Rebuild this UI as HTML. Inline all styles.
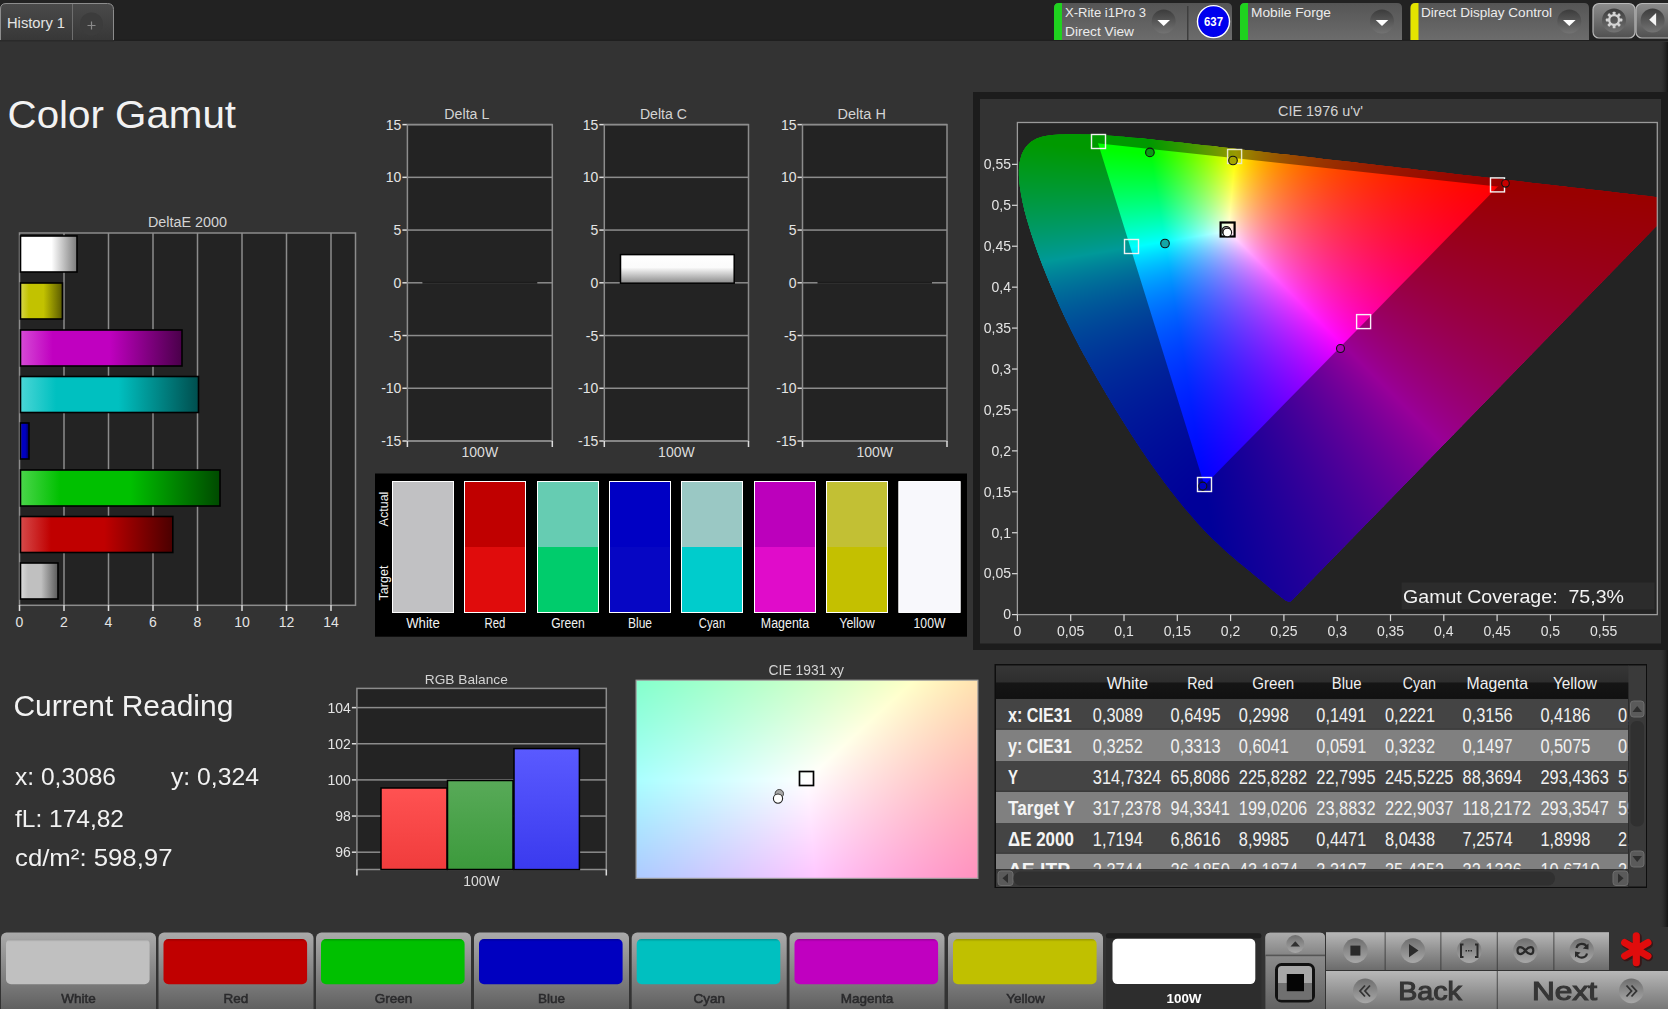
<!DOCTYPE html><html><head><meta charset="utf-8"><title>CalMAN Color Gamut</title><style>html,body{margin:0;padding:0;background:#333;overflow:hidden}svg{display:block;font-family:"Liberation Sans",sans-serif}#wrap{position:relative;width:1668px;height:1009px;overflow:hidden}canvas{position:absolute;left:0;top:0}</style></head><body><div id="wrap">
<svg width="1668" height="1009" viewBox="0 0 1668 1009">
<defs>
<linearGradient id="tabg" x1="0" y1="0" x2="0" y2="1"><stop offset="0" stop-color="#4a4a4a"/><stop offset="1" stop-color="#373737"/></linearGradient>
<linearGradient id="devg" x1="0" y1="0" x2="0" y2="1"><stop offset="0" stop-color="#555555"/><stop offset="1" stop-color="#6c6c6c"/></linearGradient>
<linearGradient id="ddl" x1="0" y1="0" x2="0" y2="1"><stop offset="0" stop-color="#3c3c3c"/><stop offset="1" stop-color="#737373"/></linearGradient>
<linearGradient id="gearb" x1="0" y1="0" x2="0" y2="1"><stop offset="0" stop-color="#8c8c8c"/><stop offset="1" stop-color="#505050"/></linearGradient>
<linearGradient id="btg" x1="0" y1="0" x2="0" y2="1"><stop offset="0" stop-color="#aaaaaa"/><stop offset="0.6" stop-color="#7c7c7c"/><stop offset="1" stop-color="#5a5a5a"/></linearGradient>
<linearGradient id="btd" x1="0" y1="0" x2="0" y2="1"><stop offset="0" stop-color="#1e1e1e"/><stop offset="1" stop-color="#262626"/></linearGradient>
<linearGradient id="ctl" x1="0" y1="0" x2="0" y2="1"><stop offset="0" stop-color="#b4b4b4"/><stop offset="1" stop-color="#6a6a6a"/></linearGradient>
<radialGradient id="ctlc" cx="0.5" cy="0.35" r="0.6"><stop offset="0" stop-color="#9a9a9a"/><stop offset="1" stop-color="#7a7a7a"/></radialGradient>
<linearGradient id="dcbar" x1="0" y1="0" x2="0" y2="1"><stop offset="0" stop-color="#ffffff"/><stop offset="0.45" stop-color="#fbfbfb"/><stop offset="1" stop-color="#8a8a8a"/></linearGradient>
<linearGradient id="hdr" x1="0" y1="0" x2="0" y2="1"><stop offset="0" stop-color="#363636"/><stop offset="0.5" stop-color="#2e2e2e"/><stop offset="0.52" stop-color="#151515"/><stop offset="1" stop-color="#111111"/></linearGradient>
<linearGradient id="shadowR" x1="0" y1="0" x2="1" y2="0"><stop offset="0" stop-color="#333" stop-opacity="0"/><stop offset="1" stop-color="#151515"/></linearGradient>
<linearGradient id="bw" x1="0" y1="0" x2="1" y2="0"><stop offset="0" stop-color="#ffffff"/><stop offset="0.2" stop-color="#ffffff"/><stop offset="0.55" stop-color="#ffffff"/><stop offset="1" stop-color="#7a7a7a"/></linearGradient>
<linearGradient id="by" x1="0" y1="0" x2="1" y2="0"><stop offset="0" stop-color="#d6d64a"/><stop offset="0.2" stop-color="#c2c200"/><stop offset="0.55" stop-color="#c2c200"/><stop offset="1" stop-color="#5a5a00"/></linearGradient>
<linearGradient id="bm" x1="0" y1="0" x2="1" y2="0"><stop offset="0" stop-color="#d64ad6"/><stop offset="0.2" stop-color="#c000c0"/><stop offset="0.55" stop-color="#c000c0"/><stop offset="1" stop-color="#4a004a"/></linearGradient>
<linearGradient id="bc" x1="0" y1="0" x2="1" y2="0"><stop offset="0" stop-color="#4ad6d6"/><stop offset="0.2" stop-color="#00c0c0"/><stop offset="0.55" stop-color="#00c0c0"/><stop offset="1" stop-color="#004e4e"/></linearGradient>
<linearGradient id="bb" x1="0" y1="0" x2="1" y2="0"><stop offset="0" stop-color="#3a3ad6"/><stop offset="0.2" stop-color="#0000c0"/><stop offset="0.55" stop-color="#0000c0"/><stop offset="1" stop-color="#00005a"/></linearGradient>
<linearGradient id="bg" x1="0" y1="0" x2="1" y2="0"><stop offset="0" stop-color="#4ad64a"/><stop offset="0.2" stop-color="#00c000"/><stop offset="0.55" stop-color="#00c000"/><stop offset="1" stop-color="#004a00"/></linearGradient>
<linearGradient id="br" x1="0" y1="0" x2="1" y2="0"><stop offset="0" stop-color="#d64a4a"/><stop offset="0.2" stop-color="#c00000"/><stop offset="0.55" stop-color="#c00000"/><stop offset="1" stop-color="#4a0000"/></linearGradient>
<linearGradient id="bgr" x1="0" y1="0" x2="1" y2="0"><stop offset="0" stop-color="#dadada"/><stop offset="0.2" stop-color="#c0c0c0"/><stop offset="0.55" stop-color="#c0c0c0"/><stop offset="1" stop-color="#5a5a5a"/></linearGradient>
<linearGradient id="rgbR" x1="0" y1="0" x2="0" y2="1"><stop offset="0" stop-color="#ff5252"/><stop offset="1" stop-color="#f03c3c"/></linearGradient>
<linearGradient id="rgbG" x1="0" y1="0" x2="0" y2="1"><stop offset="0" stop-color="#58aa58"/><stop offset="1" stop-color="#3c9a3c"/></linearGradient>
<linearGradient id="rgbB" x1="0" y1="0" x2="0" y2="1"><stop offset="0" stop-color="#5a5aff"/><stop offset="1" stop-color="#3a3aee"/></linearGradient>
</defs>
<rect x="0" y="0" width="1668" height="1009" fill="#333333"/>
<rect x="0" y="0" width="1668" height="41" fill="#222222"/>
<rect x="0" y="39.5" width="1668" height="1.5" fill="#1f1f1f"/>
<path d="M0,40.5 L0,9 Q0,3.5 6,3.5 L107.5,3.5 Q113.5,3.5 113.5,9.5 L113.5,40.5 Z" fill="url(#tabg)"/>
<path d="M0.5,40.5 L0.5,9 Q0.5,3.5 6,3.5 L107.5,3.5 Q113.5,3.5 113.5,9.5 L113.5,40.5" fill="none" stroke="#8c8c8c" stroke-width="1"/>
<rect x="0" y="40" width="114" height="1.5" fill="#2a2a2a"/>
<rect x="72" y="4" width="1" height="36" fill="#6e6e6e"/>
<text x="7" y="28" font-size="14" fill="#e4e4e4" textLength="58" lengthAdjust="spacingAndGlyphs">History 1</text>
<circle cx="91.5" cy="24" r="11.5" fill="#3c3c3c"/>
<path d="M87.5,25.5 h8 M91.5,21.5 v8" stroke="#8a8a8a" stroke-width="1.2"/>
<path d="M1054,40 L1054,8 Q1054,3 1059,3 L1227,3 Q1232,3 1232,8 L1232,40 Z" fill="url(#devg)"/>
<path d="M1054,40 L1054,8 Q1054,3 1059,3 L1062,3 L1062,40 Z" fill="#1fd21f"/>
<text x="1065" y="16.8" font-size="13" fill="#ececec" textLength="81" lengthAdjust="spacingAndGlyphs">X-Rite i1Pro 3</text>
<text x="1065" y="36" font-size="13" fill="#ececec" textLength="69" lengthAdjust="spacingAndGlyphs">Direct View</text>
<circle cx="1163.7" cy="21.6" r="12" fill="url(#ddl)"/>
<path d="M1157.4,19.9 L1170.0,19.9 L1163.7,26.1 Z" fill="#ffffff"/>
<rect x="1187" y="6" width="1.5" height="34" fill="#3e3e3e"/>
<circle cx="1213.5" cy="21.6" r="16" fill="#0000ee" stroke="#ffffff" stroke-width="1.4"/>
<text x="1213.5" y="26" font-size="12.5" fill="#ffffff" text-anchor="middle" font-weight="bold" textLength="19" lengthAdjust="spacingAndGlyphs">637</text>
<path d="M1240,40 L1240,8 Q1240,3 1245,3 L1397,3 Q1402,3 1402,8 L1402,40 Z" fill="url(#devg)"/>
<path d="M1240,40 L1240,8 Q1240,3 1245,3 L1248,3 L1248,40 Z" fill="#1fd21f"/>
<text x="1251" y="16.8" font-size="13" fill="#ececec" textLength="80" lengthAdjust="spacingAndGlyphs">Mobile Forge</text>
<circle cx="1382" cy="21.6" r="12" fill="url(#ddl)"/>
<path d="M1375.7,19.9 L1388.3,19.9 L1382,26.1 Z" fill="#ffffff"/>
<path d="M1410.5,40 L1410.5,8 Q1410.5,3 1415.5,3 L1584,3 Q1589,3 1589,8 L1589,40 Z" fill="url(#devg)"/>
<path d="M1410.5,40 L1410.5,8 Q1410.5,3 1415.5,3 L1418.5,3 L1418.5,40 Z" fill="#e4e400"/>
<text x="1421" y="16.8" font-size="13" fill="#ececec" textLength="131" lengthAdjust="spacingAndGlyphs">Direct Display Control</text>
<circle cx="1569.3" cy="21.6" r="12" fill="url(#ddl)"/>
<path d="M1563.0,19.9 L1575.6,19.9 L1569.3,26.1 Z" fill="#ffffff"/>
<rect x="1593" y="3.5" width="42" height="34.5" rx="6" fill="url(#gearb)" stroke="#b8b8b8" stroke-width="1.2"/>
<rect x="1636" y="3.5" width="44" height="34.5" rx="6" fill="url(#gearb)" stroke="#b8b8b8" stroke-width="1.2"/>
<circle cx="1614" cy="20.5" r="12" fill="url(#ddl)"/>
<rect x="1612.70" y="11.70" width="2.8" height="3.6" rx="0.6" fill="#d4d4d4" transform="rotate(0 1614.1 20)"/><rect x="1612.70" y="11.70" width="2.8" height="3.6" rx="0.6" fill="#d4d4d4" transform="rotate(45 1614.1 20)"/><rect x="1612.70" y="11.70" width="2.8" height="3.6" rx="0.6" fill="#d4d4d4" transform="rotate(90 1614.1 20)"/><rect x="1612.70" y="11.70" width="2.8" height="3.6" rx="0.6" fill="#d4d4d4" transform="rotate(135 1614.1 20)"/><rect x="1612.70" y="11.70" width="2.8" height="3.6" rx="0.6" fill="#d4d4d4" transform="rotate(180 1614.1 20)"/><rect x="1612.70" y="11.70" width="2.8" height="3.6" rx="0.6" fill="#d4d4d4" transform="rotate(225 1614.1 20)"/><rect x="1612.70" y="11.70" width="2.8" height="3.6" rx="0.6" fill="#d4d4d4" transform="rotate(270 1614.1 20)"/><rect x="1612.70" y="11.70" width="2.8" height="3.6" rx="0.6" fill="#d4d4d4" transform="rotate(315 1614.1 20)"/>
<circle cx="1614.1" cy="20" r="4.9" fill="none" stroke="#d4d4d4" stroke-width="2.3"/>
<circle cx="1652.6" cy="20.5" r="12" fill="url(#ddl)"/>
<path d="M1649.2,19.7 L1656.1,12.9 L1656.1,25.9 Z" fill="#f4f4f4"/>
<rect x="1659" y="42" width="9" height="885" fill="url(#shadowR)"/>
<text x="7.6" y="128" font-size="39" fill="#f2f2f2" textLength="228.4" lengthAdjust="spacingAndGlyphs">Color Gamut</text>
<text x="187.5" y="227" font-size="14" fill="#d4d4d4" text-anchor="middle" textLength="79" lengthAdjust="spacingAndGlyphs">DeltaE 2000</text>
<rect x="19.5" y="233" width="336" height="372" fill="#232323"/>
<rect x="63.25" y="233" width="1.5" height="372" fill="#8c8c8c"/>
<rect x="107.75" y="233" width="1.5" height="372" fill="#8c8c8c"/>
<rect x="152.25" y="233" width="1.5" height="372" fill="#8c8c8c"/>
<rect x="196.75" y="233" width="1.5" height="372" fill="#8c8c8c"/>
<rect x="241.25" y="233" width="1.5" height="372" fill="#8c8c8c"/>
<rect x="285.75" y="233" width="1.5" height="372" fill="#8c8c8c"/>
<rect x="330.25" y="233" width="1.5" height="372" fill="#8c8c8c"/>
<rect x="19.5" y="233" width="336" height="372.3" fill="none" stroke="#8c8c8c" stroke-width="1.5"/>
<rect x="18.75" y="605" width="1.5" height="6" fill="#dcdcdc"/>
<text x="19.5" y="627" font-size="14" fill="#e4e4e4" text-anchor="middle">0</text>
<rect x="63.25" y="605" width="1.5" height="6" fill="#dcdcdc"/>
<text x="64.0" y="627" font-size="14" fill="#e4e4e4" text-anchor="middle">2</text>
<rect x="107.75" y="605" width="1.5" height="6" fill="#dcdcdc"/>
<text x="108.5" y="627" font-size="14" fill="#e4e4e4" text-anchor="middle">4</text>
<rect x="152.25" y="605" width="1.5" height="6" fill="#dcdcdc"/>
<text x="153.0" y="627" font-size="14" fill="#e4e4e4" text-anchor="middle">6</text>
<rect x="196.75" y="605" width="1.5" height="6" fill="#dcdcdc"/>
<text x="197.5" y="627" font-size="14" fill="#e4e4e4" text-anchor="middle">8</text>
<rect x="241.25" y="605" width="1.5" height="6" fill="#dcdcdc"/>
<text x="242.0" y="627" font-size="14" fill="#e4e4e4" text-anchor="middle">10</text>
<rect x="285.75" y="605" width="1.5" height="6" fill="#dcdcdc"/>
<text x="286.5" y="627" font-size="14" fill="#e4e4e4" text-anchor="middle">12</text>
<rect x="330.25" y="605" width="1.5" height="6" fill="#dcdcdc"/>
<text x="331.0" y="627" font-size="14" fill="#e4e4e4" text-anchor="middle">14</text>
<rect x="20.5" y="236" width="56.5" height="36" fill="url(#bw)" stroke="#000" stroke-width="1.6"/>
<rect x="20.5" y="283" width="41.9" height="36" fill="url(#by)" stroke="#000" stroke-width="1.6"/>
<rect x="20.5" y="330" width="161.5" height="36" fill="url(#bm)" stroke="#000" stroke-width="1.6"/>
<rect x="20.5" y="376.5" width="178.0" height="36" fill="url(#bc)" stroke="#000" stroke-width="1.6"/>
<rect x="20.5" y="423" width="8.5" height="36" fill="url(#bb)" stroke="#000" stroke-width="1.6"/>
<rect x="20.5" y="470" width="199.5" height="36" fill="url(#bg)" stroke="#000" stroke-width="1.6"/>
<rect x="20.5" y="516.5" width="152.3" height="36" fill="url(#br)" stroke="#000" stroke-width="1.6"/>
<rect x="20.5" y="563" width="37.5" height="36" fill="url(#bgr)" stroke="#000" stroke-width="1.6"/>
<text x="466.84999999999997" y="119" font-size="14" fill="#d4d4d4" text-anchor="middle" textLength="45" lengthAdjust="spacingAndGlyphs">Delta L</text>
<rect x="407.4" y="124.6" width="144.89999999999998" height="316.4" fill="#232323"/>
<rect x="407.4" y="123.85" width="144.89999999999998" height="1.5" fill="#8c8c8c"/>
<rect x="402.4" y="123.85" width="5" height="1.5" fill="#dcdcdc"/>
<text x="401.4" y="129.6" font-size="14" fill="#e4e4e4" text-anchor="end">15</text>
<rect x="407.4" y="176.58333333333331" width="144.89999999999998" height="1.5" fill="#8c8c8c"/>
<rect x="402.4" y="176.58333333333331" width="5" height="1.5" fill="#dcdcdc"/>
<text x="401.4" y="182.33333333333331" font-size="14" fill="#e4e4e4" text-anchor="end">10</text>
<rect x="407.4" y="229.31666666666666" width="144.89999999999998" height="1.5" fill="#8c8c8c"/>
<rect x="402.4" y="229.31666666666666" width="5" height="1.5" fill="#dcdcdc"/>
<text x="401.4" y="235.06666666666666" font-size="14" fill="#e4e4e4" text-anchor="end">5</text>
<rect x="407.4" y="282.04999999999995" width="144.89999999999998" height="1.5" fill="#8c8c8c"/>
<rect x="402.4" y="282.04999999999995" width="5" height="1.5" fill="#dcdcdc"/>
<text x="401.4" y="287.79999999999995" font-size="14" fill="#e4e4e4" text-anchor="end">0</text>
<rect x="407.4" y="334.7833333333333" width="144.89999999999998" height="1.5" fill="#8c8c8c"/>
<rect x="402.4" y="334.7833333333333" width="5" height="1.5" fill="#dcdcdc"/>
<text x="401.4" y="340.5333333333333" font-size="14" fill="#e4e4e4" text-anchor="end">-5</text>
<rect x="407.4" y="387.51666666666665" width="144.89999999999998" height="1.5" fill="#8c8c8c"/>
<rect x="402.4" y="387.51666666666665" width="5" height="1.5" fill="#dcdcdc"/>
<text x="401.4" y="393.26666666666665" font-size="14" fill="#e4e4e4" text-anchor="end">-10</text>
<rect x="407.4" y="440.25" width="144.89999999999998" height="1.5" fill="#8c8c8c"/>
<rect x="402.4" y="440.25" width="5" height="1.5" fill="#dcdcdc"/>
<text x="401.4" y="446.0" font-size="14" fill="#e4e4e4" text-anchor="end">-15</text>
<rect x="407.4" y="124.6" width="144.89999999999998" height="316.4" fill="none" stroke="#8c8c8c" stroke-width="1.5"/>
<rect x="406.65" y="441.0" width="1.5" height="6" fill="#dcdcdc"/>
<rect x="551.55" y="441.0" width="1.5" height="6" fill="#dcdcdc"/>
<text x="479.84999999999997" y="457" font-size="14" fill="#dcdcdc" text-anchor="middle">100W</text>
<rect x="422.4" y="281.9" width="114.89999999999998" height="1.8" fill="#1c1c1c"/>
<text x="663.4" y="119" font-size="14" fill="#d4d4d4" text-anchor="middle" textLength="47" lengthAdjust="spacingAndGlyphs">Delta C</text>
<rect x="604.3" y="124.6" width="144.20000000000005" height="316.4" fill="#232323"/>
<rect x="604.3" y="123.85" width="144.20000000000005" height="1.5" fill="#8c8c8c"/>
<rect x="599.3" y="123.85" width="5" height="1.5" fill="#dcdcdc"/>
<text x="598.3" y="129.6" font-size="14" fill="#e4e4e4" text-anchor="end">15</text>
<rect x="604.3" y="176.58333333333331" width="144.20000000000005" height="1.5" fill="#8c8c8c"/>
<rect x="599.3" y="176.58333333333331" width="5" height="1.5" fill="#dcdcdc"/>
<text x="598.3" y="182.33333333333331" font-size="14" fill="#e4e4e4" text-anchor="end">10</text>
<rect x="604.3" y="229.31666666666666" width="144.20000000000005" height="1.5" fill="#8c8c8c"/>
<rect x="599.3" y="229.31666666666666" width="5" height="1.5" fill="#dcdcdc"/>
<text x="598.3" y="235.06666666666666" font-size="14" fill="#e4e4e4" text-anchor="end">5</text>
<rect x="604.3" y="282.04999999999995" width="144.20000000000005" height="1.5" fill="#8c8c8c"/>
<rect x="599.3" y="282.04999999999995" width="5" height="1.5" fill="#dcdcdc"/>
<text x="598.3" y="287.79999999999995" font-size="14" fill="#e4e4e4" text-anchor="end">0</text>
<rect x="604.3" y="334.7833333333333" width="144.20000000000005" height="1.5" fill="#8c8c8c"/>
<rect x="599.3" y="334.7833333333333" width="5" height="1.5" fill="#dcdcdc"/>
<text x="598.3" y="340.5333333333333" font-size="14" fill="#e4e4e4" text-anchor="end">-5</text>
<rect x="604.3" y="387.51666666666665" width="144.20000000000005" height="1.5" fill="#8c8c8c"/>
<rect x="599.3" y="387.51666666666665" width="5" height="1.5" fill="#dcdcdc"/>
<text x="598.3" y="393.26666666666665" font-size="14" fill="#e4e4e4" text-anchor="end">-10</text>
<rect x="604.3" y="440.25" width="144.20000000000005" height="1.5" fill="#8c8c8c"/>
<rect x="599.3" y="440.25" width="5" height="1.5" fill="#dcdcdc"/>
<text x="598.3" y="446.0" font-size="14" fill="#e4e4e4" text-anchor="end">-15</text>
<rect x="604.3" y="124.6" width="144.20000000000005" height="316.4" fill="none" stroke="#8c8c8c" stroke-width="1.5"/>
<rect x="603.55" y="441.0" width="1.5" height="6" fill="#dcdcdc"/>
<rect x="747.75" y="441.0" width="1.5" height="6" fill="#dcdcdc"/>
<text x="676.4" y="457" font-size="14" fill="#dcdcdc" text-anchor="middle">100W</text>
<rect x="620.5" y="254.6" width="113.7" height="28.6" fill="url(#dcbar)" stroke="#000" stroke-width="1.5"/>
<text x="861.75" y="119" font-size="14" fill="#d4d4d4" text-anchor="middle" textLength="48.3" lengthAdjust="spacingAndGlyphs">Delta H</text>
<rect x="802.5" y="124.6" width="144.5" height="316.4" fill="#232323"/>
<rect x="802.5" y="123.85" width="144.5" height="1.5" fill="#8c8c8c"/>
<rect x="797.5" y="123.85" width="5" height="1.5" fill="#dcdcdc"/>
<text x="796.5" y="129.6" font-size="14" fill="#e4e4e4" text-anchor="end">15</text>
<rect x="802.5" y="176.58333333333331" width="144.5" height="1.5" fill="#8c8c8c"/>
<rect x="797.5" y="176.58333333333331" width="5" height="1.5" fill="#dcdcdc"/>
<text x="796.5" y="182.33333333333331" font-size="14" fill="#e4e4e4" text-anchor="end">10</text>
<rect x="802.5" y="229.31666666666666" width="144.5" height="1.5" fill="#8c8c8c"/>
<rect x="797.5" y="229.31666666666666" width="5" height="1.5" fill="#dcdcdc"/>
<text x="796.5" y="235.06666666666666" font-size="14" fill="#e4e4e4" text-anchor="end">5</text>
<rect x="802.5" y="282.04999999999995" width="144.5" height="1.5" fill="#8c8c8c"/>
<rect x="797.5" y="282.04999999999995" width="5" height="1.5" fill="#dcdcdc"/>
<text x="796.5" y="287.79999999999995" font-size="14" fill="#e4e4e4" text-anchor="end">0</text>
<rect x="802.5" y="334.7833333333333" width="144.5" height="1.5" fill="#8c8c8c"/>
<rect x="797.5" y="334.7833333333333" width="5" height="1.5" fill="#dcdcdc"/>
<text x="796.5" y="340.5333333333333" font-size="14" fill="#e4e4e4" text-anchor="end">-5</text>
<rect x="802.5" y="387.51666666666665" width="144.5" height="1.5" fill="#8c8c8c"/>
<rect x="797.5" y="387.51666666666665" width="5" height="1.5" fill="#dcdcdc"/>
<text x="796.5" y="393.26666666666665" font-size="14" fill="#e4e4e4" text-anchor="end">-10</text>
<rect x="802.5" y="440.25" width="144.5" height="1.5" fill="#8c8c8c"/>
<rect x="797.5" y="440.25" width="5" height="1.5" fill="#dcdcdc"/>
<text x="796.5" y="446.0" font-size="14" fill="#e4e4e4" text-anchor="end">-15</text>
<rect x="802.5" y="124.6" width="144.5" height="316.4" fill="none" stroke="#8c8c8c" stroke-width="1.5"/>
<rect x="801.75" y="441.0" width="1.5" height="6" fill="#dcdcdc"/>
<rect x="946.25" y="441.0" width="1.5" height="6" fill="#dcdcdc"/>
<text x="874.75" y="457" font-size="14" fill="#dcdcdc" text-anchor="middle">100W</text>
<rect x="817.5" y="281.9" width="114.5" height="1.8" fill="#1c1c1c"/>
<rect x="375" y="473.5" width="592" height="163.2" fill="#000000"/>
<rect x="392" y="481.5" width="62" height="65.5" fill="#c1c1c3"/>
<rect x="392" y="547" width="62" height="65.5" fill="#c1c1c3"/>
<rect x="392.5" y="481.5" width="61" height="131" fill="none" stroke="#ffffff" stroke-width="1"/>
<text x="423" y="628" font-size="14" fill="#f0f0f0" text-anchor="middle" textLength="33.6" lengthAdjust="spacingAndGlyphs">White</text>
<rect x="464" y="481.5" width="62" height="65.5" fill="#c00000"/>
<rect x="464" y="547" width="62" height="65.5" fill="#e00c0c"/>
<rect x="464.5" y="481.5" width="61" height="131" fill="none" stroke="#ffffff" stroke-width="1"/>
<text x="495" y="628" font-size="14" fill="#f0f0f0" text-anchor="middle" textLength="20.8" lengthAdjust="spacingAndGlyphs">Red</text>
<rect x="537" y="481.5" width="62" height="65.5" fill="#66ccb2"/>
<rect x="537" y="547" width="62" height="65.5" fill="#00cc6c"/>
<rect x="537.5" y="481.5" width="61" height="131" fill="none" stroke="#ffffff" stroke-width="1"/>
<text x="568" y="628" font-size="14" fill="#f0f0f0" text-anchor="middle" textLength="33.6" lengthAdjust="spacingAndGlyphs">Green</text>
<rect x="609" y="481.5" width="62" height="65.5" fill="#0000c4"/>
<rect x="609" y="547" width="62" height="65.5" fill="#0606c4"/>
<rect x="609.5" y="481.5" width="61" height="131" fill="none" stroke="#ffffff" stroke-width="1"/>
<text x="640" y="628" font-size="14" fill="#f0f0f0" text-anchor="middle" textLength="24.1" lengthAdjust="spacingAndGlyphs">Blue</text>
<rect x="681" y="481.5" width="62" height="65.5" fill="#9ac8c4"/>
<rect x="681" y="547" width="62" height="65.5" fill="#00cccc"/>
<rect x="681.5" y="481.5" width="61" height="131" fill="none" stroke="#ffffff" stroke-width="1"/>
<text x="712" y="628" font-size="14" fill="#f0f0f0" text-anchor="middle" textLength="26.3" lengthAdjust="spacingAndGlyphs">Cyan</text>
<rect x="754" y="481.5" width="62" height="65.5" fill="#bc00bc"/>
<rect x="754" y="547" width="62" height="65.5" fill="#e00cca"/>
<rect x="754.5" y="481.5" width="61" height="131" fill="none" stroke="#ffffff" stroke-width="1"/>
<text x="785" y="628" font-size="14" fill="#f0f0f0" text-anchor="middle" textLength="48.3" lengthAdjust="spacingAndGlyphs">Magenta</text>
<rect x="826" y="481.5" width="62" height="65.5" fill="#c2c034"/>
<rect x="826" y="547" width="62" height="65.5" fill="#c4c000"/>
<rect x="826.5" y="481.5" width="61" height="131" fill="none" stroke="#ffffff" stroke-width="1"/>
<text x="857" y="628" font-size="14" fill="#f0f0f0" text-anchor="middle" textLength="35.5" lengthAdjust="spacingAndGlyphs">Yellow</text>
<rect x="898.5" y="481.5" width="62" height="65.5" fill="#f8f8fc"/>
<rect x="898.5" y="547" width="62" height="65.5" fill="#f8f8fc"/>
<rect x="899.0" y="481.5" width="61" height="131" fill="none" stroke="#ffffff" stroke-width="1"/>
<text x="929.5" y="628" font-size="14" fill="#f0f0f0" text-anchor="middle" textLength="31.8" lengthAdjust="spacingAndGlyphs">100W</text>
<text x="0" y="0" font-size="12.5" fill="#f0f0f0" text-anchor="middle" transform="translate(388,509) rotate(-90)">Actual</text>
<text x="0" y="0" font-size="12.5" fill="#f0f0f0" text-anchor="middle" transform="translate(388,583) rotate(-90)">Target</text>
<rect x="973" y="92" width="695" height="558" fill="#1c1c1c"/>
<rect x="980" y="99" width="681" height="544.5" fill="#333333"/>
<text x="1320.5" y="116.3" font-size="14" fill="#d4d4d4" text-anchor="middle" textLength="85" lengthAdjust="spacingAndGlyphs">CIE 1976 u'v'</text>
<rect x="1017.4" y="122.5" width="639.9" height="492.1" fill="#232323"/>
<defs><clipPath id="locclip"><path d="M1291.2,601.0 L1291.1,601.1 L1291.0,601.1 L1290.9,601.2 L1290.7,601.3 L1290.6,601.4 L1290.4,601.4 L1290.2,601.5 L1290.0,601.6 L1289.7,601.6 L1289.5,601.6 L1289.1,601.6 L1288.7,601.6 L1288.2,601.4 L1287.6,601.3 L1286.9,601.1 L1286.3,600.8 L1285.6,600.4 L1284.9,600.0 L1284.3,599.5 L1283.5,598.9 L1282.7,598.3 L1281.8,597.7 L1280.8,596.9 L1279.8,596.1 L1278.6,595.1 L1277.3,594.1 L1275.9,592.9 L1274.4,591.7 L1272.8,590.4 L1271.2,589.0 L1269.4,587.5 L1267.6,585.9 L1265.6,584.3 L1263.6,582.6 L1261.4,580.8 L1259.0,578.8 L1256.4,576.7 L1253.7,574.5 L1250.8,572.1 L1247.7,569.6 L1244.6,567.0 L1241.3,564.3 L1237.8,561.4 L1234.2,558.3 L1230.3,554.9 L1226.2,551.4 L1222.0,547.5 L1217.5,543.3 L1212.9,538.9 L1208.1,534.2 L1203.1,529.0 L1197.5,523.0 L1191.5,516.1 L1185.0,508.4 L1178.1,500.1 L1171.0,491.0 L1163.6,481.2 L1155.8,470.6 L1147.8,459.3 L1139.7,447.3 L1131.3,434.6 L1122.8,421.0 L1114.1,407.1 L1105.7,392.9 L1097.2,378.5 L1088.8,363.6 L1080.6,348.7 L1073.0,334.1 L1065.9,319.6 L1059.2,305.1 L1053.1,291.0 L1047.4,277.6 L1042.3,264.8 L1037.7,252.5 L1033.6,240.8 L1030.1,230.0 L1027.1,220.0 L1024.6,210.9 L1022.7,202.4 L1021.1,194.6 L1020.0,187.5 L1019.2,181.1 L1018.9,175.3 L1018.9,170.0 L1019.3,165.0 L1020.0,160.6 L1021.0,156.7 L1022.3,153.0 L1024.0,149.8 L1025.9,147.0 L1028.1,144.5 L1030.5,142.3 L1033.1,140.5 L1035.9,139.0 L1038.9,137.8 L1042.0,136.8 L1045.3,136.0 L1048.7,135.5 L1052.2,135.1 L1055.8,134.8 L1059.4,134.5 L1063.2,134.4 L1067.0,134.3 L1070.8,134.3 L1074.5,134.3 L1078.3,134.3 L1082.1,134.4 L1086.0,134.5 L1089.9,134.6 L1093.8,134.8 L1097.8,135.0 L1101.9,135.2 L1106.0,135.5 L1110.2,135.8 L1114.5,136.1 L1119.0,136.4 L1123.5,136.8 L1128.0,137.2 L1132.7,137.7 L1137.5,138.1 L1142.5,138.6 L1147.5,139.1 L1152.7,139.6 L1158.0,140.2 L1163.4,140.7 L1169.0,141.3 L1174.7,142.0 L1180.6,142.6 L1186.6,143.3 L1192.8,144.0 L1199.1,144.7 L1205.6,145.4 L1212.3,146.1 L1219.2,146.9 L1226.2,147.7 L1233.4,148.5 L1240.7,149.4 L1248.3,150.2 L1256.0,151.1 L1263.8,152.0 L1271.9,152.9 L1280.1,153.9 L1288.5,154.8 L1297.1,155.8 L1305.8,156.8 L1314.7,157.8 L1323.7,158.9 L1332.9,159.9 L1342.2,161.0 L1351.7,162.1 L1361.2,163.2 L1370.8,164.3 L1380.5,165.4 L1390.3,166.5 L1400.1,167.7 L1409.8,168.8 L1419.3,169.9 L1428.8,171.0 L1438.2,172.0 L1447.5,173.1 L1456.8,174.2 L1466.2,175.2 L1475.3,176.3 L1484.2,177.3 L1492.9,178.3 L1501.3,179.3 L1509.6,180.2 L1517.5,181.1 L1525.3,182.0 L1532.8,182.9 L1540.0,183.7 L1547.0,184.5 L1553.6,185.3 L1560.0,186.0 L1566.1,186.7 L1572.0,187.4 L1577.6,188.0 L1582.9,188.6 L1588.0,189.2 L1593.0,189.8 L1597.7,190.3 L1602.1,190.8 L1606.5,191.3 L1610.6,191.8 L1614.7,192.3 L1618.6,192.7 L1622.3,193.2 L1626.0,193.6 L1629.2,193.9 L1632.2,194.3 L1635.3,194.7 L1638.9,195.1 L1643.3,195.6 L1648.3,196.1 L1653.3,196.7 L1657.5,197.2 L1660.9,197.6 L1663.6,197.9 L1666.1,198.2 L1668.6,198.4 L1671.2,198.8 L1673.9,199.1 L1676.3,199.3 L1678.2,199.6 L1679.6,199.7 L1680.7,199.8 L1681.4,199.9 L1681.9,200.0 Z"/></clipPath><clipPath id="plotclip"><rect x="1017.4" y="122.5" width="639.9" height="492.1"/></clipPath>
<linearGradient id="lr0" gradientUnits="userSpaceOnUse" x1="1017.4" y1="0" x2="1657.4" y2="0"><stop offset="0.000" stop-color="#00ff00"/><stop offset="0.025" stop-color="#00ff00"/><stop offset="0.050" stop-color="#00ff00"/><stop offset="0.075" stop-color="#00ff00"/><stop offset="0.100" stop-color="#00ff00"/><stop offset="0.125" stop-color="#00ff00"/><stop offset="0.150" stop-color="#00ff00"/><stop offset="0.175" stop-color="#00ff00"/><stop offset="0.200" stop-color="#00ff00"/><stop offset="0.225" stop-color="#20ff00"/><stop offset="0.250" stop-color="#47ff00"/><stop offset="0.275" stop-color="#72ff00"/><stop offset="0.300" stop-color="#a1ff00"/><stop offset="0.325" stop-color="#d5ff00"/><stop offset="0.350" stop-color="#fff100"/><stop offset="0.375" stop-color="#ffc300"/><stop offset="0.400" stop-color="#ffa100"/><stop offset="0.425" stop-color="#ff8700"/><stop offset="0.450" stop-color="#ff7200"/><stop offset="0.475" stop-color="#ff6000"/><stop offset="0.500" stop-color="#ff5200"/><stop offset="0.525" stop-color="#ff4600"/><stop offset="0.550" stop-color="#ff3c00"/><stop offset="0.575" stop-color="#ff3300"/><stop offset="0.600" stop-color="#ff2b00"/><stop offset="0.625" stop-color="#ff2400"/><stop offset="0.650" stop-color="#ff1e00"/><stop offset="0.675" stop-color="#ff1800"/><stop offset="0.700" stop-color="#ff1300"/><stop offset="0.725" stop-color="#ff0f00"/><stop offset="0.750" stop-color="#ff0b00"/><stop offset="0.775" stop-color="#ff0700"/><stop offset="0.800" stop-color="#ff0400"/><stop offset="0.825" stop-color="#ff0100"/><stop offset="0.850" stop-color="#ff0000"/><stop offset="0.875" stop-color="#ff0000"/><stop offset="0.900" stop-color="#ff0000"/><stop offset="0.925" stop-color="#ff0000"/><stop offset="0.950" stop-color="#ff0000"/><stop offset="0.975" stop-color="#ff0000"/><stop offset="1.000" stop-color="#ff0000"/></linearGradient>
<linearGradient id="lr1" gradientUnits="userSpaceOnUse" x1="1017.4" y1="0" x2="1657.4" y2="0"><stop offset="0.000" stop-color="#00ff00"/><stop offset="0.025" stop-color="#00ff00"/><stop offset="0.050" stop-color="#00ff00"/><stop offset="0.075" stop-color="#00ff00"/><stop offset="0.100" stop-color="#00ff00"/><stop offset="0.125" stop-color="#00ff00"/><stop offset="0.150" stop-color="#00ff00"/><stop offset="0.175" stop-color="#00ff00"/><stop offset="0.200" stop-color="#00ff00"/><stop offset="0.225" stop-color="#1eff00"/><stop offset="0.250" stop-color="#46ff00"/><stop offset="0.275" stop-color="#71ff00"/><stop offset="0.300" stop-color="#a1ff00"/><stop offset="0.325" stop-color="#d6ff00"/><stop offset="0.350" stop-color="#ffee00"/><stop offset="0.375" stop-color="#ffc000"/><stop offset="0.400" stop-color="#ff9e00"/><stop offset="0.425" stop-color="#ff8400"/><stop offset="0.450" stop-color="#ff6f00"/><stop offset="0.475" stop-color="#ff5e00"/><stop offset="0.500" stop-color="#ff5000"/><stop offset="0.525" stop-color="#ff4400"/><stop offset="0.550" stop-color="#ff3900"/><stop offset="0.575" stop-color="#ff3100"/><stop offset="0.600" stop-color="#ff2900"/><stop offset="0.625" stop-color="#ff2200"/><stop offset="0.650" stop-color="#ff1c00"/><stop offset="0.675" stop-color="#ff1700"/><stop offset="0.700" stop-color="#ff1200"/><stop offset="0.725" stop-color="#ff0d00"/><stop offset="0.750" stop-color="#ff0900"/><stop offset="0.775" stop-color="#ff0600"/><stop offset="0.800" stop-color="#ff0200"/><stop offset="0.825" stop-color="#ff0000"/><stop offset="0.850" stop-color="#ff0000"/><stop offset="0.875" stop-color="#ff0000"/><stop offset="0.900" stop-color="#ff0000"/><stop offset="0.925" stop-color="#ff0000"/><stop offset="0.950" stop-color="#ff0000"/><stop offset="0.975" stop-color="#ff0000"/><stop offset="1.000" stop-color="#ff0000"/></linearGradient>
<linearGradient id="lr2" gradientUnits="userSpaceOnUse" x1="1017.4" y1="0" x2="1657.4" y2="0"><stop offset="0.000" stop-color="#00ff0d"/><stop offset="0.025" stop-color="#00ff0b"/><stop offset="0.050" stop-color="#00ff09"/><stop offset="0.075" stop-color="#00ff07"/><stop offset="0.100" stop-color="#00ff04"/><stop offset="0.125" stop-color="#00ff02"/><stop offset="0.150" stop-color="#00ff00"/><stop offset="0.175" stop-color="#00ff00"/><stop offset="0.200" stop-color="#00ff00"/><stop offset="0.225" stop-color="#1bff00"/><stop offset="0.250" stop-color="#44ff00"/><stop offset="0.275" stop-color="#71ff00"/><stop offset="0.300" stop-color="#a2ff00"/><stop offset="0.325" stop-color="#d8ff00"/><stop offset="0.350" stop-color="#ffeb00"/><stop offset="0.375" stop-color="#ffbd00"/><stop offset="0.400" stop-color="#ff9b00"/><stop offset="0.425" stop-color="#ff8100"/><stop offset="0.450" stop-color="#ff6c00"/><stop offset="0.475" stop-color="#ff5b00"/><stop offset="0.500" stop-color="#ff4d00"/><stop offset="0.525" stop-color="#ff4100"/><stop offset="0.550" stop-color="#ff3700"/><stop offset="0.575" stop-color="#ff2e00"/><stop offset="0.600" stop-color="#ff2700"/><stop offset="0.625" stop-color="#ff2000"/><stop offset="0.650" stop-color="#ff1a00"/><stop offset="0.675" stop-color="#ff1500"/><stop offset="0.700" stop-color="#ff1000"/><stop offset="0.725" stop-color="#ff0c00"/><stop offset="0.750" stop-color="#ff0800"/><stop offset="0.775" stop-color="#ff0400"/><stop offset="0.800" stop-color="#ff0100"/><stop offset="0.825" stop-color="#ff0000"/><stop offset="0.850" stop-color="#ff0000"/><stop offset="0.875" stop-color="#ff0000"/><stop offset="0.900" stop-color="#ff0000"/><stop offset="0.925" stop-color="#ff0000"/><stop offset="0.950" stop-color="#ff0000"/><stop offset="0.975" stop-color="#ff0000"/><stop offset="1.000" stop-color="#ff0000"/></linearGradient>
<linearGradient id="lr3" gradientUnits="userSpaceOnUse" x1="1017.4" y1="0" x2="1657.4" y2="0"><stop offset="0.000" stop-color="#00ff1a"/><stop offset="0.025" stop-color="#00ff19"/><stop offset="0.050" stop-color="#00ff17"/><stop offset="0.075" stop-color="#00ff15"/><stop offset="0.100" stop-color="#00ff13"/><stop offset="0.125" stop-color="#00ff11"/><stop offset="0.150" stop-color="#00ff0f"/><stop offset="0.175" stop-color="#00ff0c"/><stop offset="0.200" stop-color="#00ff09"/><stop offset="0.225" stop-color="#19ff06"/><stop offset="0.250" stop-color="#42ff03"/><stop offset="0.275" stop-color="#70ff00"/><stop offset="0.300" stop-color="#a2ff00"/><stop offset="0.325" stop-color="#daff00"/><stop offset="0.350" stop-color="#ffe800"/><stop offset="0.375" stop-color="#ffba00"/><stop offset="0.400" stop-color="#ff9800"/><stop offset="0.425" stop-color="#ff7e00"/><stop offset="0.450" stop-color="#ff6900"/><stop offset="0.475" stop-color="#ff5800"/><stop offset="0.500" stop-color="#ff4b00"/><stop offset="0.525" stop-color="#ff3f00"/><stop offset="0.550" stop-color="#ff3500"/><stop offset="0.575" stop-color="#ff2c00"/><stop offset="0.600" stop-color="#ff2500"/><stop offset="0.625" stop-color="#ff1e00"/><stop offset="0.650" stop-color="#ff1800"/><stop offset="0.675" stop-color="#ff1300"/><stop offset="0.700" stop-color="#ff0e00"/><stop offset="0.725" stop-color="#ff0a00"/><stop offset="0.750" stop-color="#ff0600"/><stop offset="0.775" stop-color="#ff0300"/><stop offset="0.800" stop-color="#ff0000"/><stop offset="0.825" stop-color="#ff0000"/><stop offset="0.850" stop-color="#ff0000"/><stop offset="0.875" stop-color="#ff0000"/><stop offset="0.900" stop-color="#ff0000"/><stop offset="0.925" stop-color="#ff0000"/><stop offset="0.950" stop-color="#ff0000"/><stop offset="0.975" stop-color="#ff0000"/><stop offset="1.000" stop-color="#ff0000"/></linearGradient>
<linearGradient id="lr4" gradientUnits="userSpaceOnUse" x1="1017.4" y1="0" x2="1657.4" y2="0"><stop offset="0.000" stop-color="#00ff28"/><stop offset="0.025" stop-color="#00ff27"/><stop offset="0.050" stop-color="#00ff25"/><stop offset="0.075" stop-color="#00ff24"/><stop offset="0.100" stop-color="#00ff23"/><stop offset="0.125" stop-color="#00ff21"/><stop offset="0.150" stop-color="#00ff1f"/><stop offset="0.175" stop-color="#00ff1d"/><stop offset="0.200" stop-color="#00ff1b"/><stop offset="0.225" stop-color="#16ff19"/><stop offset="0.250" stop-color="#40ff17"/><stop offset="0.275" stop-color="#6fff14"/><stop offset="0.300" stop-color="#a3ff11"/><stop offset="0.325" stop-color="#dcff0e"/><stop offset="0.350" stop-color="#ffe509"/><stop offset="0.375" stop-color="#ffb704"/><stop offset="0.400" stop-color="#ff9501"/><stop offset="0.425" stop-color="#ff7b00"/><stop offset="0.450" stop-color="#ff6600"/><stop offset="0.475" stop-color="#ff5600"/><stop offset="0.500" stop-color="#ff4800"/><stop offset="0.525" stop-color="#ff3c00"/><stop offset="0.550" stop-color="#ff3200"/><stop offset="0.575" stop-color="#ff2a00"/><stop offset="0.600" stop-color="#ff2200"/><stop offset="0.625" stop-color="#ff1c00"/><stop offset="0.650" stop-color="#ff1600"/><stop offset="0.675" stop-color="#ff1100"/><stop offset="0.700" stop-color="#ff0c00"/><stop offset="0.725" stop-color="#ff0800"/><stop offset="0.750" stop-color="#ff0400"/><stop offset="0.775" stop-color="#ff0100"/><stop offset="0.800" stop-color="#ff0000"/><stop offset="0.825" stop-color="#ff0000"/><stop offset="0.850" stop-color="#ff0000"/><stop offset="0.875" stop-color="#ff0000"/><stop offset="0.900" stop-color="#ff0000"/><stop offset="0.925" stop-color="#ff0000"/><stop offset="0.950" stop-color="#ff0000"/><stop offset="0.975" stop-color="#ff0000"/><stop offset="1.000" stop-color="#ff0000"/></linearGradient>
<linearGradient id="lr5" gradientUnits="userSpaceOnUse" x1="1017.4" y1="0" x2="1657.4" y2="0"><stop offset="0.000" stop-color="#00ff36"/><stop offset="0.025" stop-color="#00ff35"/><stop offset="0.050" stop-color="#00ff34"/><stop offset="0.075" stop-color="#00ff34"/><stop offset="0.100" stop-color="#00ff33"/><stop offset="0.125" stop-color="#00ff32"/><stop offset="0.150" stop-color="#00ff30"/><stop offset="0.175" stop-color="#00ff2f"/><stop offset="0.200" stop-color="#00ff2e"/><stop offset="0.225" stop-color="#13ff2d"/><stop offset="0.250" stop-color="#3eff2b"/><stop offset="0.275" stop-color="#6eff29"/><stop offset="0.300" stop-color="#a3ff27"/><stop offset="0.325" stop-color="#deff25"/><stop offset="0.350" stop-color="#ffe21f"/><stop offset="0.375" stop-color="#ffb417"/><stop offset="0.400" stop-color="#ff9211"/><stop offset="0.425" stop-color="#ff780c"/><stop offset="0.450" stop-color="#ff6308"/><stop offset="0.475" stop-color="#ff5306"/><stop offset="0.500" stop-color="#ff4503"/><stop offset="0.525" stop-color="#ff3a01"/><stop offset="0.550" stop-color="#ff3000"/><stop offset="0.575" stop-color="#ff2800"/><stop offset="0.600" stop-color="#ff2000"/><stop offset="0.625" stop-color="#ff1a00"/><stop offset="0.650" stop-color="#ff1400"/><stop offset="0.675" stop-color="#ff0f00"/><stop offset="0.700" stop-color="#ff0b00"/><stop offset="0.725" stop-color="#ff0600"/><stop offset="0.750" stop-color="#ff0300"/><stop offset="0.775" stop-color="#ff0000"/><stop offset="0.800" stop-color="#ff0000"/><stop offset="0.825" stop-color="#ff0000"/><stop offset="0.850" stop-color="#ff0000"/><stop offset="0.875" stop-color="#ff0000"/><stop offset="0.900" stop-color="#ff0000"/><stop offset="0.925" stop-color="#ff0000"/><stop offset="0.950" stop-color="#ff0000"/><stop offset="0.975" stop-color="#ff0000"/><stop offset="1.000" stop-color="#ff0000"/></linearGradient>
<linearGradient id="lr6" gradientUnits="userSpaceOnUse" x1="1017.4" y1="0" x2="1657.4" y2="0"><stop offset="0.000" stop-color="#00ff45"/><stop offset="0.025" stop-color="#00ff44"/><stop offset="0.050" stop-color="#00ff44"/><stop offset="0.075" stop-color="#00ff44"/><stop offset="0.100" stop-color="#00ff43"/><stop offset="0.125" stop-color="#00ff43"/><stop offset="0.150" stop-color="#00ff42"/><stop offset="0.175" stop-color="#00ff42"/><stop offset="0.200" stop-color="#00ff41"/><stop offset="0.225" stop-color="#10ff41"/><stop offset="0.250" stop-color="#3cff40"/><stop offset="0.275" stop-color="#6dff40"/><stop offset="0.300" stop-color="#a4ff3f"/><stop offset="0.325" stop-color="#e0ff3e"/><stop offset="0.350" stop-color="#ffdf35"/><stop offset="0.375" stop-color="#ffb02a"/><stop offset="0.400" stop-color="#ff8e21"/><stop offset="0.425" stop-color="#ff751a"/><stop offset="0.450" stop-color="#ff6015"/><stop offset="0.475" stop-color="#ff5011"/><stop offset="0.500" stop-color="#ff430e"/><stop offset="0.525" stop-color="#ff370b"/><stop offset="0.550" stop-color="#ff2e08"/><stop offset="0.575" stop-color="#ff2506"/><stop offset="0.600" stop-color="#ff1e04"/><stop offset="0.625" stop-color="#ff1803"/><stop offset="0.650" stop-color="#ff1201"/><stop offset="0.675" stop-color="#ff0d00"/><stop offset="0.700" stop-color="#ff0900"/><stop offset="0.725" stop-color="#ff0500"/><stop offset="0.750" stop-color="#ff0100"/><stop offset="0.775" stop-color="#ff0000"/><stop offset="0.800" stop-color="#ff0000"/><stop offset="0.825" stop-color="#ff0000"/><stop offset="0.850" stop-color="#ff0000"/><stop offset="0.875" stop-color="#ff0000"/><stop offset="0.900" stop-color="#ff0000"/><stop offset="0.925" stop-color="#ff0000"/><stop offset="0.950" stop-color="#ff0000"/><stop offset="0.975" stop-color="#ff0000"/><stop offset="1.000" stop-color="#ff0000"/></linearGradient>
<linearGradient id="lr7" gradientUnits="userSpaceOnUse" x1="1017.4" y1="0" x2="1657.4" y2="0"><stop offset="0.000" stop-color="#00ff53"/><stop offset="0.025" stop-color="#00ff54"/><stop offset="0.050" stop-color="#00ff54"/><stop offset="0.075" stop-color="#00ff54"/><stop offset="0.100" stop-color="#00ff54"/><stop offset="0.125" stop-color="#00ff55"/><stop offset="0.150" stop-color="#00ff55"/><stop offset="0.175" stop-color="#00ff55"/><stop offset="0.200" stop-color="#00ff56"/><stop offset="0.225" stop-color="#0dff56"/><stop offset="0.250" stop-color="#3aff57"/><stop offset="0.275" stop-color="#6cff57"/><stop offset="0.300" stop-color="#a4ff58"/><stop offset="0.325" stop-color="#e2ff58"/><stop offset="0.350" stop-color="#ffdb4d"/><stop offset="0.375" stop-color="#ffad3d"/><stop offset="0.400" stop-color="#ff8b32"/><stop offset="0.425" stop-color="#ff7229"/><stop offset="0.450" stop-color="#ff5d22"/><stop offset="0.475" stop-color="#ff4d1d"/><stop offset="0.500" stop-color="#ff4018"/><stop offset="0.525" stop-color="#ff3514"/><stop offset="0.550" stop-color="#ff2b11"/><stop offset="0.575" stop-color="#ff230e"/><stop offset="0.600" stop-color="#ff1c0c"/><stop offset="0.625" stop-color="#ff160a"/><stop offset="0.650" stop-color="#ff1008"/><stop offset="0.675" stop-color="#ff0b06"/><stop offset="0.700" stop-color="#ff0705"/><stop offset="0.725" stop-color="#ff0304"/><stop offset="0.750" stop-color="#ff0002"/><stop offset="0.775" stop-color="#ff0001"/><stop offset="0.800" stop-color="#ff0000"/><stop offset="0.825" stop-color="#ff0000"/><stop offset="0.850" stop-color="#ff0000"/><stop offset="0.875" stop-color="#ff0000"/><stop offset="0.900" stop-color="#ff0000"/><stop offset="0.925" stop-color="#ff0000"/><stop offset="0.950" stop-color="#ff0000"/><stop offset="0.975" stop-color="#ff0000"/><stop offset="1.000" stop-color="#ff0000"/></linearGradient>
<linearGradient id="lr8" gradientUnits="userSpaceOnUse" x1="1017.4" y1="0" x2="1657.4" y2="0"><stop offset="0.000" stop-color="#00ff63"/><stop offset="0.025" stop-color="#00ff64"/><stop offset="0.050" stop-color="#00ff65"/><stop offset="0.075" stop-color="#00ff65"/><stop offset="0.100" stop-color="#00ff66"/><stop offset="0.125" stop-color="#00ff67"/><stop offset="0.150" stop-color="#00ff69"/><stop offset="0.175" stop-color="#00ff6a"/><stop offset="0.200" stop-color="#00ff6b"/><stop offset="0.225" stop-color="#0aff6d"/><stop offset="0.250" stop-color="#38ff6e"/><stop offset="0.275" stop-color="#6bff70"/><stop offset="0.300" stop-color="#a5ff72"/><stop offset="0.325" stop-color="#e5ff74"/><stop offset="0.350" stop-color="#ffd865"/><stop offset="0.375" stop-color="#ffa951"/><stop offset="0.400" stop-color="#ff8843"/><stop offset="0.425" stop-color="#ff6e38"/><stop offset="0.450" stop-color="#ff5a2f"/><stop offset="0.475" stop-color="#ff4a29"/><stop offset="0.500" stop-color="#ff3d23"/><stop offset="0.525" stop-color="#ff321e"/><stop offset="0.550" stop-color="#ff291a"/><stop offset="0.575" stop-color="#ff2117"/><stop offset="0.600" stop-color="#ff1a14"/><stop offset="0.625" stop-color="#ff1411"/><stop offset="0.650" stop-color="#ff0e0f"/><stop offset="0.675" stop-color="#ff090d"/><stop offset="0.700" stop-color="#ff050b"/><stop offset="0.725" stop-color="#ff010a"/><stop offset="0.750" stop-color="#ff0008"/><stop offset="0.775" stop-color="#ff0007"/><stop offset="0.800" stop-color="#ff0005"/><stop offset="0.825" stop-color="#ff0004"/><stop offset="0.850" stop-color="#ff0003"/><stop offset="0.875" stop-color="#ff0002"/><stop offset="0.900" stop-color="#ff0001"/><stop offset="0.925" stop-color="#ff0001"/><stop offset="0.950" stop-color="#ff0000"/><stop offset="0.975" stop-color="#ff0000"/><stop offset="1.000" stop-color="#ff0000"/></linearGradient>
<linearGradient id="lr9" gradientUnits="userSpaceOnUse" x1="1017.4" y1="0" x2="1657.4" y2="0"><stop offset="0.000" stop-color="#00ff73"/><stop offset="0.025" stop-color="#00ff74"/><stop offset="0.050" stop-color="#00ff76"/><stop offset="0.075" stop-color="#00ff77"/><stop offset="0.100" stop-color="#00ff79"/><stop offset="0.125" stop-color="#00ff7b"/><stop offset="0.150" stop-color="#00ff7d"/><stop offset="0.175" stop-color="#00ff7f"/><stop offset="0.200" stop-color="#00ff81"/><stop offset="0.225" stop-color="#06ff84"/><stop offset="0.250" stop-color="#36ff87"/><stop offset="0.275" stop-color="#6aff8a"/><stop offset="0.300" stop-color="#a5ff8e"/><stop offset="0.325" stop-color="#e7ff92"/><stop offset="0.350" stop-color="#ffd47d"/><stop offset="0.375" stop-color="#ffa665"/><stop offset="0.400" stop-color="#ff8454"/><stop offset="0.425" stop-color="#ff6b47"/><stop offset="0.450" stop-color="#ff573d"/><stop offset="0.475" stop-color="#ff4735"/><stop offset="0.500" stop-color="#ff3a2e"/><stop offset="0.525" stop-color="#ff2f28"/><stop offset="0.550" stop-color="#ff2624"/><stop offset="0.575" stop-color="#ff1e1f"/><stop offset="0.600" stop-color="#ff171c"/><stop offset="0.625" stop-color="#ff1119"/><stop offset="0.650" stop-color="#ff0c16"/><stop offset="0.675" stop-color="#ff0714"/><stop offset="0.700" stop-color="#ff0311"/><stop offset="0.725" stop-color="#ff000f"/><stop offset="0.750" stop-color="#ff000e"/><stop offset="0.775" stop-color="#ff000c"/><stop offset="0.800" stop-color="#ff000b"/><stop offset="0.825" stop-color="#ff0009"/><stop offset="0.850" stop-color="#ff0008"/><stop offset="0.875" stop-color="#ff0007"/><stop offset="0.900" stop-color="#ff0006"/><stop offset="0.925" stop-color="#ff0005"/><stop offset="0.950" stop-color="#ff0004"/><stop offset="0.975" stop-color="#ff0003"/><stop offset="1.000" stop-color="#ff0002"/></linearGradient>
<linearGradient id="lr10" gradientUnits="userSpaceOnUse" x1="1017.4" y1="0" x2="1657.4" y2="0"><stop offset="0.000" stop-color="#00ff83"/><stop offset="0.025" stop-color="#00ff85"/><stop offset="0.050" stop-color="#00ff88"/><stop offset="0.075" stop-color="#00ff8a"/><stop offset="0.100" stop-color="#00ff8c"/><stop offset="0.125" stop-color="#00ff8f"/><stop offset="0.150" stop-color="#00ff92"/><stop offset="0.175" stop-color="#00ff95"/><stop offset="0.200" stop-color="#00ff99"/><stop offset="0.225" stop-color="#03ff9d"/><stop offset="0.250" stop-color="#33ffa1"/><stop offset="0.275" stop-color="#69ffa6"/><stop offset="0.300" stop-color="#a6ffab"/><stop offset="0.325" stop-color="#eaffb2"/><stop offset="0.350" stop-color="#ffd097"/><stop offset="0.375" stop-color="#ffa27a"/><stop offset="0.400" stop-color="#ff8166"/><stop offset="0.425" stop-color="#ff6856"/><stop offset="0.450" stop-color="#ff544a"/><stop offset="0.475" stop-color="#ff4441"/><stop offset="0.500" stop-color="#ff3739"/><stop offset="0.525" stop-color="#ff2d32"/><stop offset="0.550" stop-color="#ff242d"/><stop offset="0.575" stop-color="#ff1c28"/><stop offset="0.600" stop-color="#ff1524"/><stop offset="0.625" stop-color="#ff0f20"/><stop offset="0.650" stop-color="#ff0a1d"/><stop offset="0.675" stop-color="#ff051a"/><stop offset="0.700" stop-color="#ff0118"/><stop offset="0.725" stop-color="#ff0015"/><stop offset="0.750" stop-color="#ff0013"/><stop offset="0.775" stop-color="#ff0012"/><stop offset="0.800" stop-color="#ff0010"/><stop offset="0.825" stop-color="#ff000e"/><stop offset="0.850" stop-color="#ff000d"/><stop offset="0.875" stop-color="#ff000b"/><stop offset="0.900" stop-color="#ff000a"/><stop offset="0.925" stop-color="#ff0009"/><stop offset="0.950" stop-color="#ff0008"/><stop offset="0.975" stop-color="#ff0007"/><stop offset="1.000" stop-color="#ff0006"/></linearGradient>
<linearGradient id="lr11" gradientUnits="userSpaceOnUse" x1="1017.4" y1="0" x2="1657.4" y2="0"><stop offset="0.000" stop-color="#00ff95"/><stop offset="0.025" stop-color="#00ff97"/><stop offset="0.050" stop-color="#00ff9a"/><stop offset="0.075" stop-color="#00ff9d"/><stop offset="0.100" stop-color="#00ffa1"/><stop offset="0.125" stop-color="#00ffa4"/><stop offset="0.150" stop-color="#00ffa8"/><stop offset="0.175" stop-color="#00ffad"/><stop offset="0.200" stop-color="#00ffb1"/><stop offset="0.225" stop-color="#00ffb7"/><stop offset="0.250" stop-color="#31ffbd"/><stop offset="0.275" stop-color="#68ffc3"/><stop offset="0.300" stop-color="#a6ffcb"/><stop offset="0.325" stop-color="#edffd3"/><stop offset="0.350" stop-color="#ffcdb1"/><stop offset="0.375" stop-color="#ff9e90"/><stop offset="0.400" stop-color="#ff7d78"/><stop offset="0.425" stop-color="#ff6466"/><stop offset="0.450" stop-color="#ff5158"/><stop offset="0.475" stop-color="#ff414d"/><stop offset="0.500" stop-color="#ff3544"/><stop offset="0.525" stop-color="#ff2a3d"/><stop offset="0.550" stop-color="#ff2136"/><stop offset="0.575" stop-color="#ff1a31"/><stop offset="0.600" stop-color="#ff132c"/><stop offset="0.625" stop-color="#ff0d28"/><stop offset="0.650" stop-color="#ff0824"/><stop offset="0.675" stop-color="#ff0321"/><stop offset="0.700" stop-color="#ff001e"/><stop offset="0.725" stop-color="#ff001c"/><stop offset="0.750" stop-color="#ff0019"/><stop offset="0.775" stop-color="#ff0017"/><stop offset="0.800" stop-color="#ff0015"/><stop offset="0.825" stop-color="#ff0013"/><stop offset="0.850" stop-color="#ff0012"/><stop offset="0.875" stop-color="#ff0010"/><stop offset="0.900" stop-color="#ff000f"/><stop offset="0.925" stop-color="#ff000d"/><stop offset="0.950" stop-color="#ff000c"/><stop offset="0.975" stop-color="#ff000b"/><stop offset="1.000" stop-color="#ff000a"/></linearGradient>
<linearGradient id="lr12" gradientUnits="userSpaceOnUse" x1="1017.4" y1="0" x2="1657.4" y2="0"><stop offset="0.000" stop-color="#00ffa6"/><stop offset="0.025" stop-color="#00ffaa"/><stop offset="0.050" stop-color="#00ffad"/><stop offset="0.075" stop-color="#00ffb1"/><stop offset="0.100" stop-color="#00ffb6"/><stop offset="0.125" stop-color="#00ffba"/><stop offset="0.150" stop-color="#00ffbf"/><stop offset="0.175" stop-color="#00ffc5"/><stop offset="0.200" stop-color="#00ffcb"/><stop offset="0.225" stop-color="#00ffd2"/><stop offset="0.250" stop-color="#2effda"/><stop offset="0.275" stop-color="#67ffe2"/><stop offset="0.300" stop-color="#a7ffec"/><stop offset="0.325" stop-color="#f0fff7"/><stop offset="0.350" stop-color="#ffc9cc"/><stop offset="0.375" stop-color="#ff9aa6"/><stop offset="0.400" stop-color="#ff798b"/><stop offset="0.425" stop-color="#ff6076"/><stop offset="0.450" stop-color="#ff4d67"/><stop offset="0.475" stop-color="#ff3e5a"/><stop offset="0.500" stop-color="#ff3250"/><stop offset="0.525" stop-color="#ff2747"/><stop offset="0.550" stop-color="#ff1f40"/><stop offset="0.575" stop-color="#ff173a"/><stop offset="0.600" stop-color="#ff1134"/><stop offset="0.625" stop-color="#ff0b30"/><stop offset="0.650" stop-color="#ff062b"/><stop offset="0.675" stop-color="#ff0128"/><stop offset="0.700" stop-color="#ff0025"/><stop offset="0.725" stop-color="#ff0022"/><stop offset="0.750" stop-color="#ff001f"/><stop offset="0.775" stop-color="#ff001c"/><stop offset="0.800" stop-color="#ff001a"/><stop offset="0.825" stop-color="#ff0018"/><stop offset="0.850" stop-color="#ff0016"/><stop offset="0.875" stop-color="#ff0015"/><stop offset="0.900" stop-color="#ff0013"/><stop offset="0.925" stop-color="#ff0012"/><stop offset="0.950" stop-color="#ff0010"/><stop offset="0.975" stop-color="#ff000f"/><stop offset="1.000" stop-color="#ff000e"/></linearGradient>
<linearGradient id="lr13" gradientUnits="userSpaceOnUse" x1="1017.4" y1="0" x2="1657.4" y2="0"><stop offset="0.000" stop-color="#00ffb9"/><stop offset="0.025" stop-color="#00ffbd"/><stop offset="0.050" stop-color="#00ffc1"/><stop offset="0.075" stop-color="#00ffc6"/><stop offset="0.100" stop-color="#00ffcb"/><stop offset="0.125" stop-color="#00ffd1"/><stop offset="0.150" stop-color="#00ffd8"/><stop offset="0.175" stop-color="#00ffdf"/><stop offset="0.200" stop-color="#00ffe6"/><stop offset="0.225" stop-color="#00ffef"/><stop offset="0.250" stop-color="#2bfff8"/><stop offset="0.275" stop-color="#64fbff"/><stop offset="0.300" stop-color="#9df0ff"/><stop offset="0.325" stop-color="#d9e4ff"/><stop offset="0.350" stop-color="#ffc4e8"/><stop offset="0.375" stop-color="#ff96bd"/><stop offset="0.400" stop-color="#ff759e"/><stop offset="0.425" stop-color="#ff5d87"/><stop offset="0.450" stop-color="#ff4a75"/><stop offset="0.475" stop-color="#ff3b67"/><stop offset="0.500" stop-color="#ff2f5b"/><stop offset="0.525" stop-color="#ff2552"/><stop offset="0.550" stop-color="#ff1c4a"/><stop offset="0.575" stop-color="#ff1543"/><stop offset="0.600" stop-color="#ff0e3d"/><stop offset="0.625" stop-color="#ff0937"/><stop offset="0.650" stop-color="#ff0433"/><stop offset="0.675" stop-color="#ff002f"/><stop offset="0.700" stop-color="#ff002b"/><stop offset="0.725" stop-color="#ff0028"/><stop offset="0.750" stop-color="#ff0025"/><stop offset="0.775" stop-color="#ff0022"/><stop offset="0.800" stop-color="#ff0020"/><stop offset="0.825" stop-color="#ff001d"/><stop offset="0.850" stop-color="#ff001b"/><stop offset="0.875" stop-color="#ff0019"/><stop offset="0.900" stop-color="#ff0018"/><stop offset="0.925" stop-color="#ff0016"/><stop offset="0.950" stop-color="#ff0014"/><stop offset="0.975" stop-color="#ff0013"/><stop offset="1.000" stop-color="#ff0012"/></linearGradient>
<linearGradient id="lr14" gradientUnits="userSpaceOnUse" x1="1017.4" y1="0" x2="1657.4" y2="0"><stop offset="0.000" stop-color="#00ffcc"/><stop offset="0.025" stop-color="#00ffd1"/><stop offset="0.050" stop-color="#00ffd6"/><stop offset="0.075" stop-color="#00ffdc"/><stop offset="0.100" stop-color="#00ffe2"/><stop offset="0.125" stop-color="#00ffe9"/><stop offset="0.150" stop-color="#00fff1"/><stop offset="0.175" stop-color="#00fff9"/><stop offset="0.200" stop-color="#00fbff"/><stop offset="0.225" stop-color="#00f1ff"/><stop offset="0.250" stop-color="#24e7ff"/><stop offset="0.275" stop-color="#57ddff"/><stop offset="0.300" stop-color="#8bd2ff"/><stop offset="0.325" stop-color="#c1c7ff"/><stop offset="0.350" stop-color="#f9bbff"/><stop offset="0.375" stop-color="#ff92d4"/><stop offset="0.400" stop-color="#ff71b1"/><stop offset="0.425" stop-color="#ff5998"/><stop offset="0.450" stop-color="#ff4784"/><stop offset="0.475" stop-color="#ff3874"/><stop offset="0.500" stop-color="#ff2c67"/><stop offset="0.525" stop-color="#ff225c"/><stop offset="0.550" stop-color="#ff1953"/><stop offset="0.575" stop-color="#ff124c"/><stop offset="0.600" stop-color="#ff0c45"/><stop offset="0.625" stop-color="#ff063f"/><stop offset="0.650" stop-color="#ff023a"/><stop offset="0.675" stop-color="#ff0036"/><stop offset="0.700" stop-color="#ff0032"/><stop offset="0.725" stop-color="#ff002e"/><stop offset="0.750" stop-color="#ff002b"/><stop offset="0.775" stop-color="#ff0028"/><stop offset="0.800" stop-color="#ff0025"/><stop offset="0.825" stop-color="#ff0022"/><stop offset="0.850" stop-color="#ff0020"/><stop offset="0.875" stop-color="#ff001e"/><stop offset="0.900" stop-color="#ff001c"/><stop offset="0.925" stop-color="#ff001a"/><stop offset="0.950" stop-color="#ff0019"/><stop offset="0.975" stop-color="#ff0017"/><stop offset="1.000" stop-color="#ff0016"/></linearGradient>
<linearGradient id="lr15" gradientUnits="userSpaceOnUse" x1="1017.4" y1="0" x2="1657.4" y2="0"><stop offset="0.000" stop-color="#00ffdf"/><stop offset="0.025" stop-color="#00ffe5"/><stop offset="0.050" stop-color="#00ffec"/><stop offset="0.075" stop-color="#00fff3"/><stop offset="0.100" stop-color="#00fffa"/><stop offset="0.125" stop-color="#00fcff"/><stop offset="0.150" stop-color="#00f3ff"/><stop offset="0.175" stop-color="#00eaff"/><stop offset="0.200" stop-color="#00e1ff"/><stop offset="0.225" stop-color="#00d8ff"/><stop offset="0.250" stop-color="#1eceff"/><stop offset="0.275" stop-color="#4cc4ff"/><stop offset="0.300" stop-color="#7bbaff"/><stop offset="0.325" stop-color="#acafff"/><stop offset="0.350" stop-color="#dfa4ff"/><stop offset="0.375" stop-color="#ff8eec"/><stop offset="0.400" stop-color="#ff6dc5"/><stop offset="0.425" stop-color="#ff55a9"/><stop offset="0.450" stop-color="#ff4393"/><stop offset="0.475" stop-color="#ff3481"/><stop offset="0.500" stop-color="#ff2973"/><stop offset="0.525" stop-color="#ff1f67"/><stop offset="0.550" stop-color="#ff175d"/><stop offset="0.575" stop-color="#ff1055"/><stop offset="0.600" stop-color="#ff094e"/><stop offset="0.625" stop-color="#ff0447"/><stop offset="0.650" stop-color="#ff0042"/><stop offset="0.675" stop-color="#ff003d"/><stop offset="0.700" stop-color="#ff0038"/><stop offset="0.725" stop-color="#ff0034"/><stop offset="0.750" stop-color="#ff0031"/><stop offset="0.775" stop-color="#ff002d"/><stop offset="0.800" stop-color="#ff002a"/><stop offset="0.825" stop-color="#ff0028"/><stop offset="0.850" stop-color="#ff0025"/><stop offset="0.875" stop-color="#ff0023"/><stop offset="0.900" stop-color="#ff0021"/><stop offset="0.925" stop-color="#ff001f"/><stop offset="0.950" stop-color="#ff001d"/><stop offset="0.975" stop-color="#ff001b"/><stop offset="1.000" stop-color="#ff0019"/></linearGradient>
<linearGradient id="lr16" gradientUnits="userSpaceOnUse" x1="1017.4" y1="0" x2="1657.4" y2="0"><stop offset="0.000" stop-color="#00fff4"/><stop offset="0.025" stop-color="#00fffb"/><stop offset="0.050" stop-color="#00fcff"/><stop offset="0.075" stop-color="#00f4ff"/><stop offset="0.100" stop-color="#00ecff"/><stop offset="0.125" stop-color="#00e4ff"/><stop offset="0.150" stop-color="#00dcff"/><stop offset="0.175" stop-color="#00d3ff"/><stop offset="0.200" stop-color="#00cbff"/><stop offset="0.225" stop-color="#00c2ff"/><stop offset="0.250" stop-color="#18b8ff"/><stop offset="0.275" stop-color="#42afff"/><stop offset="0.300" stop-color="#6ea5ff"/><stop offset="0.325" stop-color="#9b9bff"/><stop offset="0.350" stop-color="#c991ff"/><stop offset="0.375" stop-color="#f986ff"/><stop offset="0.400" stop-color="#ff69da"/><stop offset="0.425" stop-color="#ff52ba"/><stop offset="0.450" stop-color="#ff3fa2"/><stop offset="0.475" stop-color="#ff318f"/><stop offset="0.500" stop-color="#ff267f"/><stop offset="0.525" stop-color="#ff1c72"/><stop offset="0.550" stop-color="#ff1467"/><stop offset="0.575" stop-color="#ff0d5e"/><stop offset="0.600" stop-color="#ff0756"/><stop offset="0.625" stop-color="#ff024f"/><stop offset="0.650" stop-color="#ff0049"/><stop offset="0.675" stop-color="#ff0044"/><stop offset="0.700" stop-color="#ff003f"/><stop offset="0.725" stop-color="#ff003a"/><stop offset="0.750" stop-color="#ff0037"/><stop offset="0.775" stop-color="#ff0033"/><stop offset="0.800" stop-color="#ff0030"/><stop offset="0.825" stop-color="#ff002d"/><stop offset="0.850" stop-color="#ff002a"/><stop offset="0.875" stop-color="#ff0028"/><stop offset="0.900" stop-color="#ff0025"/><stop offset="0.925" stop-color="#ff0023"/><stop offset="0.950" stop-color="#ff0021"/><stop offset="0.975" stop-color="#ff001f"/><stop offset="1.000" stop-color="#ff001d"/></linearGradient>
<linearGradient id="lr17" gradientUnits="userSpaceOnUse" x1="1017.4" y1="0" x2="1657.4" y2="0"><stop offset="0.000" stop-color="#00f5ff"/><stop offset="0.025" stop-color="#00eeff"/><stop offset="0.050" stop-color="#00e7ff"/><stop offset="0.075" stop-color="#00dfff"/><stop offset="0.100" stop-color="#00d8ff"/><stop offset="0.125" stop-color="#00d0ff"/><stop offset="0.150" stop-color="#00c8ff"/><stop offset="0.175" stop-color="#00c0ff"/><stop offset="0.200" stop-color="#00b7ff"/><stop offset="0.225" stop-color="#00afff"/><stop offset="0.250" stop-color="#13a6ff"/><stop offset="0.275" stop-color="#3b9dff"/><stop offset="0.300" stop-color="#6394ff"/><stop offset="0.325" stop-color="#8c8aff"/><stop offset="0.350" stop-color="#b780ff"/><stop offset="0.375" stop-color="#e376ff"/><stop offset="0.400" stop-color="#ff65ef"/><stop offset="0.425" stop-color="#ff4ecc"/><stop offset="0.450" stop-color="#ff3cb1"/><stop offset="0.475" stop-color="#ff2e9c"/><stop offset="0.500" stop-color="#ff228b"/><stop offset="0.525" stop-color="#ff197d"/><stop offset="0.550" stop-color="#ff1172"/><stop offset="0.575" stop-color="#ff0a67"/><stop offset="0.600" stop-color="#ff055f"/><stop offset="0.625" stop-color="#ff0057"/><stop offset="0.650" stop-color="#ff0051"/><stop offset="0.675" stop-color="#ff004b"/><stop offset="0.700" stop-color="#ff0045"/><stop offset="0.725" stop-color="#ff0041"/><stop offset="0.750" stop-color="#ff003d"/><stop offset="0.775" stop-color="#ff0039"/><stop offset="0.800" stop-color="#ff0035"/><stop offset="0.825" stop-color="#ff0032"/><stop offset="0.850" stop-color="#ff002f"/><stop offset="0.875" stop-color="#ff002c"/><stop offset="0.900" stop-color="#ff002a"/><stop offset="0.925" stop-color="#ff0027"/><stop offset="0.950" stop-color="#ff0025"/><stop offset="0.975" stop-color="#ff0023"/><stop offset="1.000" stop-color="#ff0021"/></linearGradient>
<linearGradient id="lr18" gradientUnits="userSpaceOnUse" x1="1017.4" y1="0" x2="1657.4" y2="0"><stop offset="0.000" stop-color="#00e2ff"/><stop offset="0.025" stop-color="#00dbff"/><stop offset="0.050" stop-color="#00d4ff"/><stop offset="0.075" stop-color="#00cdff"/><stop offset="0.100" stop-color="#00c6ff"/><stop offset="0.125" stop-color="#00beff"/><stop offset="0.150" stop-color="#00b7ff"/><stop offset="0.175" stop-color="#00afff"/><stop offset="0.200" stop-color="#00a7ff"/><stop offset="0.225" stop-color="#009eff"/><stop offset="0.250" stop-color="#0f96ff"/><stop offset="0.275" stop-color="#348dff"/><stop offset="0.300" stop-color="#5984ff"/><stop offset="0.325" stop-color="#807bff"/><stop offset="0.350" stop-color="#a772ff"/><stop offset="0.375" stop-color="#d068ff"/><stop offset="0.400" stop-color="#fa5fff"/><stop offset="0.425" stop-color="#ff4ade"/><stop offset="0.450" stop-color="#ff38c1"/><stop offset="0.475" stop-color="#ff2aaa"/><stop offset="0.500" stop-color="#ff1f98"/><stop offset="0.525" stop-color="#ff1689"/><stop offset="0.550" stop-color="#ff0e7c"/><stop offset="0.575" stop-color="#ff0871"/><stop offset="0.600" stop-color="#ff0268"/><stop offset="0.625" stop-color="#ff005f"/><stop offset="0.650" stop-color="#ff0058"/><stop offset="0.675" stop-color="#ff0052"/><stop offset="0.700" stop-color="#ff004c"/><stop offset="0.725" stop-color="#ff0047"/><stop offset="0.750" stop-color="#ff0043"/><stop offset="0.775" stop-color="#ff003e"/><stop offset="0.800" stop-color="#ff003b"/><stop offset="0.825" stop-color="#ff0037"/><stop offset="0.850" stop-color="#ff0034"/><stop offset="0.875" stop-color="#ff0031"/><stop offset="0.900" stop-color="#ff002e"/><stop offset="0.925" stop-color="#ff002c"/><stop offset="0.950" stop-color="#ff002a"/><stop offset="0.975" stop-color="#ff0027"/><stop offset="1.000" stop-color="#ff0025"/></linearGradient>
<linearGradient id="lr19" gradientUnits="userSpaceOnUse" x1="1017.4" y1="0" x2="1657.4" y2="0"><stop offset="0.000" stop-color="#00d1ff"/><stop offset="0.025" stop-color="#00cbff"/><stop offset="0.050" stop-color="#00c4ff"/><stop offset="0.075" stop-color="#00bdff"/><stop offset="0.100" stop-color="#00b6ff"/><stop offset="0.125" stop-color="#00afff"/><stop offset="0.150" stop-color="#00a7ff"/><stop offset="0.175" stop-color="#00a0ff"/><stop offset="0.200" stop-color="#0098ff"/><stop offset="0.225" stop-color="#0090ff"/><stop offset="0.250" stop-color="#0b88ff"/><stop offset="0.275" stop-color="#2e80ff"/><stop offset="0.300" stop-color="#5177ff"/><stop offset="0.325" stop-color="#756eff"/><stop offset="0.350" stop-color="#9a66ff"/><stop offset="0.375" stop-color="#bf5cff"/><stop offset="0.400" stop-color="#e653ff"/><stop offset="0.425" stop-color="#ff45f1"/><stop offset="0.450" stop-color="#ff34d1"/><stop offset="0.475" stop-color="#ff27b9"/><stop offset="0.500" stop-color="#ff1ca5"/><stop offset="0.525" stop-color="#ff1394"/><stop offset="0.550" stop-color="#ff0b86"/><stop offset="0.575" stop-color="#ff057b"/><stop offset="0.600" stop-color="#ff0070"/><stop offset="0.625" stop-color="#ff0068"/><stop offset="0.650" stop-color="#ff0060"/><stop offset="0.675" stop-color="#ff0059"/><stop offset="0.700" stop-color="#ff0053"/><stop offset="0.725" stop-color="#ff004e"/><stop offset="0.750" stop-color="#ff0049"/><stop offset="0.775" stop-color="#ff0044"/><stop offset="0.800" stop-color="#ff0040"/><stop offset="0.825" stop-color="#ff003d"/><stop offset="0.850" stop-color="#ff0039"/><stop offset="0.875" stop-color="#ff0036"/><stop offset="0.900" stop-color="#ff0033"/><stop offset="0.925" stop-color="#ff0030"/><stop offset="0.950" stop-color="#ff002e"/><stop offset="0.975" stop-color="#ff002c"/><stop offset="1.000" stop-color="#ff0029"/></linearGradient>
<linearGradient id="lr20" gradientUnits="userSpaceOnUse" x1="1017.4" y1="0" x2="1657.4" y2="0"><stop offset="0.000" stop-color="#00c2ff"/><stop offset="0.025" stop-color="#00bcff"/><stop offset="0.050" stop-color="#00b5ff"/><stop offset="0.075" stop-color="#00aeff"/><stop offset="0.100" stop-color="#00a8ff"/><stop offset="0.125" stop-color="#00a1ff"/><stop offset="0.150" stop-color="#009aff"/><stop offset="0.175" stop-color="#0092ff"/><stop offset="0.200" stop-color="#008bff"/><stop offset="0.225" stop-color="#0083ff"/><stop offset="0.250" stop-color="#087bff"/><stop offset="0.275" stop-color="#2874ff"/><stop offset="0.300" stop-color="#496bff"/><stop offset="0.325" stop-color="#6b63ff"/><stop offset="0.350" stop-color="#8e5bff"/><stop offset="0.375" stop-color="#b152ff"/><stop offset="0.400" stop-color="#d549ff"/><stop offset="0.425" stop-color="#fa40ff"/><stop offset="0.450" stop-color="#ff30e2"/><stop offset="0.475" stop-color="#ff23c7"/><stop offset="0.500" stop-color="#ff19b1"/><stop offset="0.525" stop-color="#ff10a0"/><stop offset="0.550" stop-color="#ff0991"/><stop offset="0.575" stop-color="#ff0284"/><stop offset="0.600" stop-color="#ff0079"/><stop offset="0.625" stop-color="#ff0070"/><stop offset="0.650" stop-color="#ff0068"/><stop offset="0.675" stop-color="#ff0060"/><stop offset="0.700" stop-color="#ff005a"/><stop offset="0.725" stop-color="#ff0054"/><stop offset="0.750" stop-color="#ff004f"/><stop offset="0.775" stop-color="#ff004a"/><stop offset="0.800" stop-color="#ff0046"/><stop offset="0.825" stop-color="#ff0042"/><stop offset="0.850" stop-color="#ff003e"/><stop offset="0.875" stop-color="#ff003b"/><stop offset="0.900" stop-color="#ff0038"/><stop offset="0.925" stop-color="#ff0035"/><stop offset="0.950" stop-color="#ff0032"/><stop offset="0.975" stop-color="#ff0030"/><stop offset="1.000" stop-color="#ff002d"/></linearGradient>
<linearGradient id="lr21" gradientUnits="userSpaceOnUse" x1="1017.4" y1="0" x2="1657.4" y2="0"><stop offset="0.000" stop-color="#00b5ff"/><stop offset="0.025" stop-color="#00aeff"/><stop offset="0.050" stop-color="#00a8ff"/><stop offset="0.075" stop-color="#00a2ff"/><stop offset="0.100" stop-color="#009bff"/><stop offset="0.125" stop-color="#0094ff"/><stop offset="0.150" stop-color="#008dff"/><stop offset="0.175" stop-color="#0086ff"/><stop offset="0.200" stop-color="#007fff"/><stop offset="0.225" stop-color="#0078ff"/><stop offset="0.250" stop-color="#0570ff"/><stop offset="0.275" stop-color="#2469ff"/><stop offset="0.300" stop-color="#4361ff"/><stop offset="0.325" stop-color="#6259ff"/><stop offset="0.350" stop-color="#8351ff"/><stop offset="0.375" stop-color="#a449ff"/><stop offset="0.400" stop-color="#c640ff"/><stop offset="0.425" stop-color="#e938ff"/><stop offset="0.450" stop-color="#ff2df3"/><stop offset="0.475" stop-color="#ff20d6"/><stop offset="0.500" stop-color="#ff15bf"/><stop offset="0.525" stop-color="#ff0dac"/><stop offset="0.550" stop-color="#ff069c"/><stop offset="0.575" stop-color="#ff008e"/><stop offset="0.600" stop-color="#ff0083"/><stop offset="0.625" stop-color="#ff0078"/><stop offset="0.650" stop-color="#ff0070"/><stop offset="0.675" stop-color="#ff0068"/><stop offset="0.700" stop-color="#ff0061"/><stop offset="0.725" stop-color="#ff005b"/><stop offset="0.750" stop-color="#ff0055"/><stop offset="0.775" stop-color="#ff0050"/><stop offset="0.800" stop-color="#ff004b"/><stop offset="0.825" stop-color="#ff0047"/><stop offset="0.850" stop-color="#ff0043"/><stop offset="0.875" stop-color="#ff0040"/><stop offset="0.900" stop-color="#ff003c"/><stop offset="0.925" stop-color="#ff0039"/><stop offset="0.950" stop-color="#ff0037"/><stop offset="0.975" stop-color="#ff0034"/><stop offset="1.000" stop-color="#ff0032"/></linearGradient>
<linearGradient id="lr22" gradientUnits="userSpaceOnUse" x1="1017.4" y1="0" x2="1657.4" y2="0"><stop offset="0.000" stop-color="#00a8ff"/><stop offset="0.025" stop-color="#00a2ff"/><stop offset="0.050" stop-color="#009cff"/><stop offset="0.075" stop-color="#0096ff"/><stop offset="0.100" stop-color="#008fff"/><stop offset="0.125" stop-color="#0089ff"/><stop offset="0.150" stop-color="#0082ff"/><stop offset="0.175" stop-color="#007cff"/><stop offset="0.200" stop-color="#0075ff"/><stop offset="0.225" stop-color="#006eff"/><stop offset="0.250" stop-color="#0366ff"/><stop offset="0.275" stop-color="#1f5fff"/><stop offset="0.300" stop-color="#3d58ff"/><stop offset="0.325" stop-color="#5b50ff"/><stop offset="0.350" stop-color="#7948ff"/><stop offset="0.375" stop-color="#9940ff"/><stop offset="0.400" stop-color="#b838ff"/><stop offset="0.425" stop-color="#d930ff"/><stop offset="0.450" stop-color="#fa28ff"/><stop offset="0.475" stop-color="#ff1ce5"/><stop offset="0.500" stop-color="#ff12cc"/><stop offset="0.525" stop-color="#ff0ab8"/><stop offset="0.550" stop-color="#ff03a7"/><stop offset="0.575" stop-color="#ff0098"/><stop offset="0.600" stop-color="#ff008c"/><stop offset="0.625" stop-color="#ff0081"/><stop offset="0.650" stop-color="#ff0078"/><stop offset="0.675" stop-color="#ff006f"/><stop offset="0.700" stop-color="#ff0068"/><stop offset="0.725" stop-color="#ff0061"/><stop offset="0.750" stop-color="#ff005b"/><stop offset="0.775" stop-color="#ff0056"/><stop offset="0.800" stop-color="#ff0051"/><stop offset="0.825" stop-color="#ff004d"/><stop offset="0.850" stop-color="#ff0049"/><stop offset="0.875" stop-color="#ff0045"/><stop offset="0.900" stop-color="#ff0041"/><stop offset="0.925" stop-color="#ff003e"/><stop offset="0.950" stop-color="#ff003b"/><stop offset="0.975" stop-color="#ff0038"/><stop offset="1.000" stop-color="#ff0036"/></linearGradient>
<linearGradient id="lr23" gradientUnits="userSpaceOnUse" x1="1017.4" y1="0" x2="1657.4" y2="0"><stop offset="0.000" stop-color="#009dff"/><stop offset="0.025" stop-color="#0097ff"/><stop offset="0.050" stop-color="#0091ff"/><stop offset="0.075" stop-color="#008bff"/><stop offset="0.100" stop-color="#0085ff"/><stop offset="0.125" stop-color="#007fff"/><stop offset="0.150" stop-color="#0078ff"/><stop offset="0.175" stop-color="#0072ff"/><stop offset="0.200" stop-color="#006bff"/><stop offset="0.225" stop-color="#0064ff"/><stop offset="0.250" stop-color="#005eff"/><stop offset="0.275" stop-color="#1c57ff"/><stop offset="0.300" stop-color="#374fff"/><stop offset="0.325" stop-color="#5448ff"/><stop offset="0.350" stop-color="#7141ff"/><stop offset="0.375" stop-color="#8e39ff"/><stop offset="0.400" stop-color="#ac31ff"/><stop offset="0.425" stop-color="#cb29ff"/><stop offset="0.450" stop-color="#ea21ff"/><stop offset="0.475" stop-color="#ff18f4"/><stop offset="0.500" stop-color="#ff0ed9"/><stop offset="0.525" stop-color="#ff06c4"/><stop offset="0.550" stop-color="#ff00b2"/><stop offset="0.575" stop-color="#ff00a2"/><stop offset="0.600" stop-color="#ff0095"/><stop offset="0.625" stop-color="#ff008a"/><stop offset="0.650" stop-color="#ff0080"/><stop offset="0.675" stop-color="#ff0077"/><stop offset="0.700" stop-color="#ff006f"/><stop offset="0.725" stop-color="#ff0068"/><stop offset="0.750" stop-color="#ff0062"/><stop offset="0.775" stop-color="#ff005c"/><stop offset="0.800" stop-color="#ff0057"/><stop offset="0.825" stop-color="#ff0052"/><stop offset="0.850" stop-color="#ff004e"/><stop offset="0.875" stop-color="#ff004a"/><stop offset="0.900" stop-color="#ff0046"/><stop offset="0.925" stop-color="#ff0043"/><stop offset="0.950" stop-color="#ff003f"/><stop offset="0.975" stop-color="#ff003c"/><stop offset="1.000" stop-color="#ff003a"/></linearGradient>
<linearGradient id="lr24" gradientUnits="userSpaceOnUse" x1="1017.4" y1="0" x2="1657.4" y2="0"><stop offset="0.000" stop-color="#0093ff"/><stop offset="0.025" stop-color="#008dff"/><stop offset="0.050" stop-color="#0088ff"/><stop offset="0.075" stop-color="#0082ff"/><stop offset="0.100" stop-color="#007cff"/><stop offset="0.125" stop-color="#0076ff"/><stop offset="0.150" stop-color="#006fff"/><stop offset="0.175" stop-color="#0069ff"/><stop offset="0.200" stop-color="#0063ff"/><stop offset="0.225" stop-color="#005cff"/><stop offset="0.250" stop-color="#0055ff"/><stop offset="0.275" stop-color="#184fff"/><stop offset="0.300" stop-color="#3348ff"/><stop offset="0.325" stop-color="#4e41ff"/><stop offset="0.350" stop-color="#693aff"/><stop offset="0.375" stop-color="#8532ff"/><stop offset="0.400" stop-color="#a22bff"/><stop offset="0.425" stop-color="#bf24ff"/><stop offset="0.450" stop-color="#dc1cff"/><stop offset="0.475" stop-color="#fa14ff"/><stop offset="0.500" stop-color="#ff0be7"/><stop offset="0.525" stop-color="#ff03d0"/><stop offset="0.550" stop-color="#ff00bd"/><stop offset="0.575" stop-color="#ff00ac"/><stop offset="0.600" stop-color="#ff009e"/><stop offset="0.625" stop-color="#ff0092"/><stop offset="0.650" stop-color="#ff0088"/><stop offset="0.675" stop-color="#ff007e"/><stop offset="0.700" stop-color="#ff0076"/><stop offset="0.725" stop-color="#ff006f"/><stop offset="0.750" stop-color="#ff0068"/><stop offset="0.775" stop-color="#ff0062"/><stop offset="0.800" stop-color="#ff005d"/><stop offset="0.825" stop-color="#ff0058"/><stop offset="0.850" stop-color="#ff0053"/><stop offset="0.875" stop-color="#ff004f"/><stop offset="0.900" stop-color="#ff004b"/><stop offset="0.925" stop-color="#ff0047"/><stop offset="0.950" stop-color="#ff0044"/><stop offset="0.975" stop-color="#ff0041"/><stop offset="1.000" stop-color="#ff003e"/></linearGradient>
<linearGradient id="lr25" gradientUnits="userSpaceOnUse" x1="1017.4" y1="0" x2="1657.4" y2="0"><stop offset="0.000" stop-color="#008aff"/><stop offset="0.025" stop-color="#0084ff"/><stop offset="0.050" stop-color="#007fff"/><stop offset="0.075" stop-color="#0079ff"/><stop offset="0.100" stop-color="#0073ff"/><stop offset="0.125" stop-color="#006dff"/><stop offset="0.150" stop-color="#0067ff"/><stop offset="0.175" stop-color="#0061ff"/><stop offset="0.200" stop-color="#005bff"/><stop offset="0.225" stop-color="#0055ff"/><stop offset="0.250" stop-color="#004eff"/><stop offset="0.275" stop-color="#1548ff"/><stop offset="0.300" stop-color="#2e41ff"/><stop offset="0.325" stop-color="#483aff"/><stop offset="0.350" stop-color="#6233ff"/><stop offset="0.375" stop-color="#7d2cff"/><stop offset="0.400" stop-color="#9825ff"/><stop offset="0.425" stop-color="#b31eff"/><stop offset="0.450" stop-color="#d017ff"/><stop offset="0.475" stop-color="#ec0fff"/><stop offset="0.500" stop-color="#ff07f5"/><stop offset="0.525" stop-color="#ff00dd"/><stop offset="0.550" stop-color="#ff00c8"/><stop offset="0.575" stop-color="#ff00b7"/><stop offset="0.600" stop-color="#ff00a8"/><stop offset="0.625" stop-color="#ff009b"/><stop offset="0.650" stop-color="#ff0090"/><stop offset="0.675" stop-color="#ff0086"/><stop offset="0.700" stop-color="#ff007d"/><stop offset="0.725" stop-color="#ff0076"/><stop offset="0.750" stop-color="#ff006e"/><stop offset="0.775" stop-color="#ff0068"/><stop offset="0.800" stop-color="#ff0062"/><stop offset="0.825" stop-color="#ff005d"/><stop offset="0.850" stop-color="#ff0058"/><stop offset="0.875" stop-color="#ff0054"/><stop offset="0.900" stop-color="#ff0050"/><stop offset="0.925" stop-color="#ff004c"/><stop offset="0.950" stop-color="#ff0048"/><stop offset="0.975" stop-color="#ff0045"/><stop offset="1.000" stop-color="#ff0042"/></linearGradient>
<linearGradient id="lr26" gradientUnits="userSpaceOnUse" x1="1017.4" y1="0" x2="1657.4" y2="0"><stop offset="0.000" stop-color="#0081ff"/><stop offset="0.025" stop-color="#007cff"/><stop offset="0.050" stop-color="#0076ff"/><stop offset="0.075" stop-color="#0071ff"/><stop offset="0.100" stop-color="#006bff"/><stop offset="0.125" stop-color="#0065ff"/><stop offset="0.150" stop-color="#0060ff"/><stop offset="0.175" stop-color="#005aff"/><stop offset="0.200" stop-color="#0054ff"/><stop offset="0.225" stop-color="#004eff"/><stop offset="0.250" stop-color="#0047ff"/><stop offset="0.275" stop-color="#1241ff"/><stop offset="0.300" stop-color="#2a3bff"/><stop offset="0.325" stop-color="#4334ff"/><stop offset="0.350" stop-color="#5c2eff"/><stop offset="0.375" stop-color="#7527ff"/><stop offset="0.400" stop-color="#8f20ff"/><stop offset="0.425" stop-color="#a919ff"/><stop offset="0.450" stop-color="#c412ff"/><stop offset="0.475" stop-color="#df0bff"/><stop offset="0.500" stop-color="#fb04ff"/><stop offset="0.525" stop-color="#ff00e9"/><stop offset="0.550" stop-color="#ff00d4"/><stop offset="0.575" stop-color="#ff00c1"/><stop offset="0.600" stop-color="#ff00b2"/><stop offset="0.625" stop-color="#ff00a4"/><stop offset="0.650" stop-color="#ff0098"/><stop offset="0.675" stop-color="#ff008e"/><stop offset="0.700" stop-color="#ff0085"/><stop offset="0.725" stop-color="#ff007c"/><stop offset="0.750" stop-color="#ff0075"/><stop offset="0.775" stop-color="#ff006e"/><stop offset="0.800" stop-color="#ff0068"/><stop offset="0.825" stop-color="#ff0063"/><stop offset="0.850" stop-color="#ff005e"/><stop offset="0.875" stop-color="#ff0059"/><stop offset="0.900" stop-color="#ff0055"/><stop offset="0.925" stop-color="#ff0051"/><stop offset="0.950" stop-color="#ff004d"/><stop offset="0.975" stop-color="#ff0049"/><stop offset="1.000" stop-color="#ff0046"/></linearGradient>
<linearGradient id="lr27" gradientUnits="userSpaceOnUse" x1="1017.4" y1="0" x2="1657.4" y2="0"><stop offset="0.000" stop-color="#0079ff"/><stop offset="0.025" stop-color="#0074ff"/><stop offset="0.050" stop-color="#006fff"/><stop offset="0.075" stop-color="#0069ff"/><stop offset="0.100" stop-color="#0064ff"/><stop offset="0.125" stop-color="#005eff"/><stop offset="0.150" stop-color="#0059ff"/><stop offset="0.175" stop-color="#0053ff"/><stop offset="0.200" stop-color="#004dff"/><stop offset="0.225" stop-color="#0047ff"/><stop offset="0.250" stop-color="#0041ff"/><stop offset="0.275" stop-color="#103bff"/><stop offset="0.300" stop-color="#2735ff"/><stop offset="0.325" stop-color="#3e2fff"/><stop offset="0.350" stop-color="#5628ff"/><stop offset="0.375" stop-color="#6e22ff"/><stop offset="0.400" stop-color="#871bff"/><stop offset="0.425" stop-color="#a015ff"/><stop offset="0.450" stop-color="#b90eff"/><stop offset="0.475" stop-color="#d307ff"/><stop offset="0.500" stop-color="#ed00ff"/><stop offset="0.525" stop-color="#ff00f6"/><stop offset="0.550" stop-color="#ff00df"/><stop offset="0.575" stop-color="#ff00cc"/><stop offset="0.600" stop-color="#ff00bb"/><stop offset="0.625" stop-color="#ff00ad"/><stop offset="0.650" stop-color="#ff00a1"/><stop offset="0.675" stop-color="#ff0096"/><stop offset="0.700" stop-color="#ff008c"/><stop offset="0.725" stop-color="#ff0083"/><stop offset="0.750" stop-color="#ff007b"/><stop offset="0.775" stop-color="#ff0074"/><stop offset="0.800" stop-color="#ff006e"/><stop offset="0.825" stop-color="#ff0068"/><stop offset="0.850" stop-color="#ff0063"/><stop offset="0.875" stop-color="#ff005e"/><stop offset="0.900" stop-color="#ff0059"/><stop offset="0.925" stop-color="#ff0055"/><stop offset="0.950" stop-color="#ff0051"/><stop offset="0.975" stop-color="#ff004e"/><stop offset="1.000" stop-color="#ff004a"/></linearGradient>
<linearGradient id="lr28" gradientUnits="userSpaceOnUse" x1="1017.4" y1="0" x2="1657.4" y2="0"><stop offset="0.000" stop-color="#0072ff"/><stop offset="0.025" stop-color="#006dff"/><stop offset="0.050" stop-color="#0068ff"/><stop offset="0.075" stop-color="#0062ff"/><stop offset="0.100" stop-color="#005dff"/><stop offset="0.125" stop-color="#0058ff"/><stop offset="0.150" stop-color="#0052ff"/><stop offset="0.175" stop-color="#004dff"/><stop offset="0.200" stop-color="#0047ff"/><stop offset="0.225" stop-color="#0041ff"/><stop offset="0.250" stop-color="#003cff"/><stop offset="0.275" stop-color="#0d36ff"/><stop offset="0.300" stop-color="#2330ff"/><stop offset="0.325" stop-color="#3a2aff"/><stop offset="0.350" stop-color="#5124ff"/><stop offset="0.375" stop-color="#681dff"/><stop offset="0.400" stop-color="#7f17ff"/><stop offset="0.425" stop-color="#9711ff"/><stop offset="0.450" stop-color="#b00aff"/><stop offset="0.475" stop-color="#c803ff"/><stop offset="0.500" stop-color="#e100ff"/><stop offset="0.525" stop-color="#fb00ff"/><stop offset="0.550" stop-color="#ff00eb"/><stop offset="0.575" stop-color="#ff00d7"/><stop offset="0.600" stop-color="#ff00c5"/><stop offset="0.625" stop-color="#ff00b6"/><stop offset="0.650" stop-color="#ff00a9"/><stop offset="0.675" stop-color="#ff009e"/><stop offset="0.700" stop-color="#ff0093"/><stop offset="0.725" stop-color="#ff008a"/><stop offset="0.750" stop-color="#ff0082"/><stop offset="0.775" stop-color="#ff007b"/><stop offset="0.800" stop-color="#ff0074"/><stop offset="0.825" stop-color="#ff006e"/><stop offset="0.850" stop-color="#ff0068"/><stop offset="0.875" stop-color="#ff0063"/><stop offset="0.900" stop-color="#ff005e"/><stop offset="0.925" stop-color="#ff005a"/><stop offset="0.950" stop-color="#ff0056"/><stop offset="0.975" stop-color="#ff0052"/><stop offset="1.000" stop-color="#ff004f"/></linearGradient>
<linearGradient id="lr29" gradientUnits="userSpaceOnUse" x1="1017.4" y1="0" x2="1657.4" y2="0"><stop offset="0.000" stop-color="#006bff"/><stop offset="0.025" stop-color="#0066ff"/><stop offset="0.050" stop-color="#0061ff"/><stop offset="0.075" stop-color="#005cff"/><stop offset="0.100" stop-color="#0057ff"/><stop offset="0.125" stop-color="#0052ff"/><stop offset="0.150" stop-color="#004cff"/><stop offset="0.175" stop-color="#0047ff"/><stop offset="0.200" stop-color="#0041ff"/><stop offset="0.225" stop-color="#003cff"/><stop offset="0.250" stop-color="#0036ff"/><stop offset="0.275" stop-color="#0b31ff"/><stop offset="0.300" stop-color="#202bff"/><stop offset="0.325" stop-color="#3625ff"/><stop offset="0.350" stop-color="#4c1fff"/><stop offset="0.375" stop-color="#6219ff"/><stop offset="0.400" stop-color="#7913ff"/><stop offset="0.425" stop-color="#8f0dff"/><stop offset="0.450" stop-color="#a706ff"/><stop offset="0.475" stop-color="#be00ff"/><stop offset="0.500" stop-color="#d600ff"/><stop offset="0.525" stop-color="#ef00ff"/><stop offset="0.550" stop-color="#ff00f7"/><stop offset="0.575" stop-color="#ff00e1"/><stop offset="0.600" stop-color="#ff00cf"/><stop offset="0.625" stop-color="#ff00bf"/><stop offset="0.650" stop-color="#ff00b2"/><stop offset="0.675" stop-color="#ff00a6"/><stop offset="0.700" stop-color="#ff009b"/><stop offset="0.725" stop-color="#ff0091"/><stop offset="0.750" stop-color="#ff0089"/><stop offset="0.775" stop-color="#ff0081"/><stop offset="0.800" stop-color="#ff007a"/><stop offset="0.825" stop-color="#ff0074"/><stop offset="0.850" stop-color="#ff006e"/><stop offset="0.875" stop-color="#ff0068"/><stop offset="0.900" stop-color="#ff0063"/><stop offset="0.925" stop-color="#ff005f"/><stop offset="0.950" stop-color="#ff005a"/><stop offset="0.975" stop-color="#ff0057"/><stop offset="1.000" stop-color="#ff0053"/></linearGradient>
<linearGradient id="lr30" gradientUnits="userSpaceOnUse" x1="1017.4" y1="0" x2="1657.4" y2="0"><stop offset="0.000" stop-color="#0065ff"/><stop offset="0.025" stop-color="#0060ff"/><stop offset="0.050" stop-color="#005bff"/><stop offset="0.075" stop-color="#0056ff"/><stop offset="0.100" stop-color="#0051ff"/><stop offset="0.125" stop-color="#004cff"/><stop offset="0.150" stop-color="#0047ff"/><stop offset="0.175" stop-color="#0042ff"/><stop offset="0.200" stop-color="#003cff"/><stop offset="0.225" stop-color="#0037ff"/><stop offset="0.250" stop-color="#0031ff"/><stop offset="0.275" stop-color="#092cff"/><stop offset="0.300" stop-color="#1d26ff"/><stop offset="0.325" stop-color="#3221ff"/><stop offset="0.350" stop-color="#471bff"/><stop offset="0.375" stop-color="#5d15ff"/><stop offset="0.400" stop-color="#720fff"/><stop offset="0.425" stop-color="#8809ff"/><stop offset="0.450" stop-color="#9e03ff"/><stop offset="0.475" stop-color="#b500ff"/><stop offset="0.500" stop-color="#cc00ff"/><stop offset="0.525" stop-color="#e300ff"/><stop offset="0.550" stop-color="#fb00ff"/><stop offset="0.575" stop-color="#ff00ed"/><stop offset="0.600" stop-color="#ff00d9"/><stop offset="0.625" stop-color="#ff00c9"/><stop offset="0.650" stop-color="#ff00ba"/><stop offset="0.675" stop-color="#ff00ae"/><stop offset="0.700" stop-color="#ff00a2"/><stop offset="0.725" stop-color="#ff0098"/><stop offset="0.750" stop-color="#ff008f"/><stop offset="0.775" stop-color="#ff0087"/><stop offset="0.800" stop-color="#ff0080"/><stop offset="0.825" stop-color="#ff0079"/><stop offset="0.850" stop-color="#ff0073"/><stop offset="0.875" stop-color="#ff006d"/><stop offset="0.900" stop-color="#ff0068"/><stop offset="0.925" stop-color="#ff0064"/><stop offset="0.950" stop-color="#ff005f"/><stop offset="0.975" stop-color="#ff005b"/><stop offset="1.000" stop-color="#ff0057"/></linearGradient>
<linearGradient id="lr31" gradientUnits="userSpaceOnUse" x1="1017.4" y1="0" x2="1657.4" y2="0"><stop offset="0.000" stop-color="#005fff"/><stop offset="0.025" stop-color="#005aff"/><stop offset="0.050" stop-color="#0055ff"/><stop offset="0.075" stop-color="#0050ff"/><stop offset="0.100" stop-color="#004cff"/><stop offset="0.125" stop-color="#0047ff"/><stop offset="0.150" stop-color="#0042ff"/><stop offset="0.175" stop-color="#003dff"/><stop offset="0.200" stop-color="#0037ff"/><stop offset="0.225" stop-color="#0032ff"/><stop offset="0.250" stop-color="#002dff"/><stop offset="0.275" stop-color="#0728ff"/><stop offset="0.300" stop-color="#1b22ff"/><stop offset="0.325" stop-color="#2f1dff"/><stop offset="0.350" stop-color="#4317ff"/><stop offset="0.375" stop-color="#5812ff"/><stop offset="0.400" stop-color="#6c0cff"/><stop offset="0.425" stop-color="#8106ff"/><stop offset="0.450" stop-color="#9700ff"/><stop offset="0.475" stop-color="#ad00ff"/><stop offset="0.500" stop-color="#c300ff"/><stop offset="0.525" stop-color="#d900ff"/><stop offset="0.550" stop-color="#f000ff"/><stop offset="0.575" stop-color="#ff00f8"/><stop offset="0.600" stop-color="#ff00e3"/><stop offset="0.625" stop-color="#ff00d2"/><stop offset="0.650" stop-color="#ff00c3"/><stop offset="0.675" stop-color="#ff00b6"/><stop offset="0.700" stop-color="#ff00aa"/><stop offset="0.725" stop-color="#ff009f"/><stop offset="0.750" stop-color="#ff0096"/><stop offset="0.775" stop-color="#ff008e"/><stop offset="0.800" stop-color="#ff0086"/><stop offset="0.825" stop-color="#ff007f"/><stop offset="0.850" stop-color="#ff0079"/><stop offset="0.875" stop-color="#ff0073"/><stop offset="0.900" stop-color="#ff006d"/><stop offset="0.925" stop-color="#ff0068"/><stop offset="0.950" stop-color="#ff0064"/><stop offset="0.975" stop-color="#ff005f"/><stop offset="1.000" stop-color="#ff005b"/></linearGradient>
<linearGradient id="lr32" gradientUnits="userSpaceOnUse" x1="1017.4" y1="0" x2="1657.4" y2="0"><stop offset="0.000" stop-color="#0059ff"/><stop offset="0.025" stop-color="#0055ff"/><stop offset="0.050" stop-color="#0050ff"/><stop offset="0.075" stop-color="#004bff"/><stop offset="0.100" stop-color="#0047ff"/><stop offset="0.125" stop-color="#0042ff"/><stop offset="0.150" stop-color="#003dff"/><stop offset="0.175" stop-color="#0038ff"/><stop offset="0.200" stop-color="#0033ff"/><stop offset="0.225" stop-color="#002eff"/><stop offset="0.250" stop-color="#0029ff"/><stop offset="0.275" stop-color="#0524ff"/><stop offset="0.300" stop-color="#181eff"/><stop offset="0.325" stop-color="#2c19ff"/><stop offset="0.350" stop-color="#3f14ff"/><stop offset="0.375" stop-color="#530eff"/><stop offset="0.400" stop-color="#6709ff"/><stop offset="0.425" stop-color="#7b03ff"/><stop offset="0.450" stop-color="#9000ff"/><stop offset="0.475" stop-color="#a500ff"/><stop offset="0.500" stop-color="#ba00ff"/><stop offset="0.525" stop-color="#cf00ff"/><stop offset="0.550" stop-color="#e500ff"/><stop offset="0.575" stop-color="#fb00ff"/><stop offset="0.600" stop-color="#ff00ee"/><stop offset="0.625" stop-color="#ff00dc"/><stop offset="0.650" stop-color="#ff00cc"/><stop offset="0.675" stop-color="#ff00be"/><stop offset="0.700" stop-color="#ff00b2"/><stop offset="0.725" stop-color="#ff00a7"/><stop offset="0.750" stop-color="#ff009d"/><stop offset="0.775" stop-color="#ff0094"/><stop offset="0.800" stop-color="#ff008c"/><stop offset="0.825" stop-color="#ff0085"/><stop offset="0.850" stop-color="#ff007e"/><stop offset="0.875" stop-color="#ff0078"/><stop offset="0.900" stop-color="#ff0072"/><stop offset="0.925" stop-color="#ff006d"/><stop offset="0.950" stop-color="#ff0068"/><stop offset="0.975" stop-color="#ff0064"/><stop offset="1.000" stop-color="#ff0060"/></linearGradient>
<linearGradient id="lr33" gradientUnits="userSpaceOnUse" x1="1017.4" y1="0" x2="1657.4" y2="0"><stop offset="0.000" stop-color="#0054ff"/><stop offset="0.025" stop-color="#0050ff"/><stop offset="0.050" stop-color="#004bff"/><stop offset="0.075" stop-color="#0046ff"/><stop offset="0.100" stop-color="#0042ff"/><stop offset="0.125" stop-color="#003dff"/><stop offset="0.150" stop-color="#0038ff"/><stop offset="0.175" stop-color="#0034ff"/><stop offset="0.200" stop-color="#002fff"/><stop offset="0.225" stop-color="#002aff"/><stop offset="0.250" stop-color="#0025ff"/><stop offset="0.275" stop-color="#0420ff"/><stop offset="0.300" stop-color="#161bff"/><stop offset="0.325" stop-color="#2916ff"/><stop offset="0.350" stop-color="#3b10ff"/><stop offset="0.375" stop-color="#4f0bff"/><stop offset="0.400" stop-color="#6206ff"/><stop offset="0.425" stop-color="#7500ff"/><stop offset="0.450" stop-color="#8900ff"/><stop offset="0.475" stop-color="#9d00ff"/><stop offset="0.500" stop-color="#b200ff"/><stop offset="0.525" stop-color="#c600ff"/><stop offset="0.550" stop-color="#db00ff"/><stop offset="0.575" stop-color="#f000ff"/><stop offset="0.600" stop-color="#ff00f8"/><stop offset="0.625" stop-color="#ff00e5"/><stop offset="0.650" stop-color="#ff00d5"/><stop offset="0.675" stop-color="#ff00c6"/><stop offset="0.700" stop-color="#ff00b9"/><stop offset="0.725" stop-color="#ff00ae"/><stop offset="0.750" stop-color="#ff00a4"/><stop offset="0.775" stop-color="#ff009b"/><stop offset="0.800" stop-color="#ff0092"/><stop offset="0.825" stop-color="#ff008b"/><stop offset="0.850" stop-color="#ff0084"/><stop offset="0.875" stop-color="#ff007d"/><stop offset="0.900" stop-color="#ff0077"/><stop offset="0.925" stop-color="#ff0072"/><stop offset="0.950" stop-color="#ff006d"/><stop offset="0.975" stop-color="#ff0068"/><stop offset="1.000" stop-color="#ff0064"/></linearGradient>
<linearGradient id="lr34" gradientUnits="userSpaceOnUse" x1="1017.4" y1="0" x2="1657.4" y2="0"><stop offset="0.000" stop-color="#004fff"/><stop offset="0.025" stop-color="#004bff"/><stop offset="0.050" stop-color="#0046ff"/><stop offset="0.075" stop-color="#0042ff"/><stop offset="0.100" stop-color="#003dff"/><stop offset="0.125" stop-color="#0039ff"/><stop offset="0.150" stop-color="#0034ff"/><stop offset="0.175" stop-color="#0030ff"/><stop offset="0.200" stop-color="#002bff"/><stop offset="0.225" stop-color="#0026ff"/><stop offset="0.250" stop-color="#0021ff"/><stop offset="0.275" stop-color="#021cff"/><stop offset="0.300" stop-color="#1417ff"/><stop offset="0.325" stop-color="#2612ff"/><stop offset="0.350" stop-color="#380dff"/><stop offset="0.375" stop-color="#4a08ff"/><stop offset="0.400" stop-color="#5d03ff"/><stop offset="0.425" stop-color="#7000ff"/><stop offset="0.450" stop-color="#8300ff"/><stop offset="0.475" stop-color="#9600ff"/><stop offset="0.500" stop-color="#aa00ff"/><stop offset="0.525" stop-color="#be00ff"/><stop offset="0.550" stop-color="#d200ff"/><stop offset="0.575" stop-color="#e600ff"/><stop offset="0.600" stop-color="#fb00ff"/><stop offset="0.625" stop-color="#ff00ef"/><stop offset="0.650" stop-color="#ff00de"/><stop offset="0.675" stop-color="#ff00cf"/><stop offset="0.700" stop-color="#ff00c1"/><stop offset="0.725" stop-color="#ff00b5"/><stop offset="0.750" stop-color="#ff00ab"/><stop offset="0.775" stop-color="#ff00a1"/><stop offset="0.800" stop-color="#ff0098"/><stop offset="0.825" stop-color="#ff0091"/><stop offset="0.850" stop-color="#ff0089"/><stop offset="0.875" stop-color="#ff0083"/><stop offset="0.900" stop-color="#ff007d"/><stop offset="0.925" stop-color="#ff0077"/><stop offset="0.950" stop-color="#ff0072"/><stop offset="0.975" stop-color="#ff006d"/><stop offset="1.000" stop-color="#ff0068"/></linearGradient>
<linearGradient id="lr35" gradientUnits="userSpaceOnUse" x1="1017.4" y1="0" x2="1657.4" y2="0"><stop offset="0.000" stop-color="#004aff"/><stop offset="0.025" stop-color="#0046ff"/><stop offset="0.050" stop-color="#0042ff"/><stop offset="0.075" stop-color="#003eff"/><stop offset="0.100" stop-color="#0039ff"/><stop offset="0.125" stop-color="#0035ff"/><stop offset="0.150" stop-color="#0030ff"/><stop offset="0.175" stop-color="#002cff"/><stop offset="0.200" stop-color="#0027ff"/><stop offset="0.225" stop-color="#0022ff"/><stop offset="0.250" stop-color="#001eff"/><stop offset="0.275" stop-color="#0119ff"/><stop offset="0.300" stop-color="#1214ff"/><stop offset="0.325" stop-color="#230fff"/><stop offset="0.350" stop-color="#350aff"/><stop offset="0.375" stop-color="#4705ff"/><stop offset="0.400" stop-color="#5900ff"/><stop offset="0.425" stop-color="#6b00ff"/><stop offset="0.450" stop-color="#7d00ff"/><stop offset="0.475" stop-color="#9000ff"/><stop offset="0.500" stop-color="#a300ff"/><stop offset="0.525" stop-color="#b600ff"/><stop offset="0.550" stop-color="#ca00ff"/><stop offset="0.575" stop-color="#dd00ff"/><stop offset="0.600" stop-color="#f100ff"/><stop offset="0.625" stop-color="#ff00f9"/><stop offset="0.650" stop-color="#ff00e7"/><stop offset="0.675" stop-color="#ff00d7"/><stop offset="0.700" stop-color="#ff00c9"/><stop offset="0.725" stop-color="#ff00bd"/><stop offset="0.750" stop-color="#ff00b2"/><stop offset="0.775" stop-color="#ff00a8"/><stop offset="0.800" stop-color="#ff009f"/><stop offset="0.825" stop-color="#ff0096"/><stop offset="0.850" stop-color="#ff008f"/><stop offset="0.875" stop-color="#ff0088"/><stop offset="0.900" stop-color="#ff0082"/><stop offset="0.925" stop-color="#ff007c"/><stop offset="0.950" stop-color="#ff0077"/><stop offset="0.975" stop-color="#ff0071"/><stop offset="1.000" stop-color="#ff006d"/></linearGradient>
<linearGradient id="lr36" gradientUnits="userSpaceOnUse" x1="1017.4" y1="0" x2="1657.4" y2="0"><stop offset="0.000" stop-color="#0046ff"/><stop offset="0.025" stop-color="#0042ff"/><stop offset="0.050" stop-color="#003eff"/><stop offset="0.075" stop-color="#003aff"/><stop offset="0.100" stop-color="#0035ff"/><stop offset="0.125" stop-color="#0031ff"/><stop offset="0.150" stop-color="#002dff"/><stop offset="0.175" stop-color="#0028ff"/><stop offset="0.200" stop-color="#0024ff"/><stop offset="0.225" stop-color="#001fff"/><stop offset="0.250" stop-color="#001bff"/><stop offset="0.275" stop-color="#0016ff"/><stop offset="0.300" stop-color="#1011ff"/><stop offset="0.325" stop-color="#210cff"/><stop offset="0.350" stop-color="#3208ff"/><stop offset="0.375" stop-color="#4303ff"/><stop offset="0.400" stop-color="#5500ff"/><stop offset="0.425" stop-color="#6600ff"/><stop offset="0.450" stop-color="#7800ff"/><stop offset="0.475" stop-color="#8a00ff"/><stop offset="0.500" stop-color="#9c00ff"/><stop offset="0.525" stop-color="#af00ff"/><stop offset="0.550" stop-color="#c200ff"/><stop offset="0.575" stop-color="#d500ff"/><stop offset="0.600" stop-color="#e800ff"/><stop offset="0.625" stop-color="#fb00ff"/><stop offset="0.650" stop-color="#ff00f0"/><stop offset="0.675" stop-color="#ff00e0"/><stop offset="0.700" stop-color="#ff00d1"/><stop offset="0.725" stop-color="#ff00c4"/><stop offset="0.750" stop-color="#ff00b9"/><stop offset="0.775" stop-color="#ff00ae"/><stop offset="0.800" stop-color="#ff00a5"/><stop offset="0.825" stop-color="#ff009c"/><stop offset="0.850" stop-color="#ff0095"/><stop offset="0.875" stop-color="#ff008d"/><stop offset="0.900" stop-color="#ff0087"/><stop offset="0.925" stop-color="#ff0081"/><stop offset="0.950" stop-color="#ff007b"/><stop offset="0.975" stop-color="#ff0076"/><stop offset="1.000" stop-color="#ff0071"/></linearGradient>
<linearGradient id="lr37" gradientUnits="userSpaceOnUse" x1="1017.4" y1="0" x2="1657.4" y2="0"><stop offset="0.000" stop-color="#0042ff"/><stop offset="0.025" stop-color="#003eff"/><stop offset="0.050" stop-color="#003aff"/><stop offset="0.075" stop-color="#0036ff"/><stop offset="0.100" stop-color="#0032ff"/><stop offset="0.125" stop-color="#002dff"/><stop offset="0.150" stop-color="#0029ff"/><stop offset="0.175" stop-color="#0025ff"/><stop offset="0.200" stop-color="#0020ff"/><stop offset="0.225" stop-color="#001cff"/><stop offset="0.250" stop-color="#0017ff"/><stop offset="0.275" stop-color="#0013ff"/><stop offset="0.300" stop-color="#0e0eff"/><stop offset="0.325" stop-color="#1e0aff"/><stop offset="0.350" stop-color="#2f05ff"/><stop offset="0.375" stop-color="#4000ff"/><stop offset="0.400" stop-color="#5100ff"/><stop offset="0.425" stop-color="#6200ff"/><stop offset="0.450" stop-color="#7300ff"/><stop offset="0.475" stop-color="#8400ff"/><stop offset="0.500" stop-color="#9600ff"/><stop offset="0.525" stop-color="#a800ff"/><stop offset="0.550" stop-color="#ba00ff"/><stop offset="0.575" stop-color="#cd00ff"/><stop offset="0.600" stop-color="#df00ff"/><stop offset="0.625" stop-color="#f200ff"/><stop offset="0.650" stop-color="#ff00f9"/><stop offset="0.675" stop-color="#ff00e8"/><stop offset="0.700" stop-color="#ff00d9"/><stop offset="0.725" stop-color="#ff00cc"/><stop offset="0.750" stop-color="#ff00c0"/><stop offset="0.775" stop-color="#ff00b5"/><stop offset="0.800" stop-color="#ff00ab"/><stop offset="0.825" stop-color="#ff00a2"/><stop offset="0.850" stop-color="#ff009a"/><stop offset="0.875" stop-color="#ff0093"/><stop offset="0.900" stop-color="#ff008c"/><stop offset="0.925" stop-color="#ff0086"/><stop offset="0.950" stop-color="#ff0080"/><stop offset="0.975" stop-color="#ff007b"/><stop offset="1.000" stop-color="#ff0076"/></linearGradient>
<linearGradient id="lr38" gradientUnits="userSpaceOnUse" x1="1017.4" y1="0" x2="1657.4" y2="0"><stop offset="0.000" stop-color="#003eff"/><stop offset="0.025" stop-color="#003aff"/><stop offset="0.050" stop-color="#0036ff"/><stop offset="0.075" stop-color="#0032ff"/><stop offset="0.100" stop-color="#002eff"/><stop offset="0.125" stop-color="#002aff"/><stop offset="0.150" stop-color="#0026ff"/><stop offset="0.175" stop-color="#0022ff"/><stop offset="0.200" stop-color="#001dff"/><stop offset="0.225" stop-color="#0019ff"/><stop offset="0.250" stop-color="#0015ff"/><stop offset="0.275" stop-color="#0010ff"/><stop offset="0.300" stop-color="#0c0cff"/><stop offset="0.325" stop-color="#1c07ff"/><stop offset="0.350" stop-color="#2c03ff"/><stop offset="0.375" stop-color="#3d00ff"/><stop offset="0.400" stop-color="#4d00ff"/><stop offset="0.425" stop-color="#5e00ff"/><stop offset="0.450" stop-color="#6e00ff"/><stop offset="0.475" stop-color="#7f00ff"/><stop offset="0.500" stop-color="#9000ff"/><stop offset="0.525" stop-color="#a200ff"/><stop offset="0.550" stop-color="#b300ff"/><stop offset="0.575" stop-color="#c500ff"/><stop offset="0.600" stop-color="#d700ff"/><stop offset="0.625" stop-color="#e900ff"/><stop offset="0.650" stop-color="#fb00ff"/><stop offset="0.675" stop-color="#ff00f1"/><stop offset="0.700" stop-color="#ff00e1"/><stop offset="0.725" stop-color="#ff00d3"/><stop offset="0.750" stop-color="#ff00c7"/><stop offset="0.775" stop-color="#ff00bc"/><stop offset="0.800" stop-color="#ff00b2"/><stop offset="0.825" stop-color="#ff00a8"/><stop offset="0.850" stop-color="#ff00a0"/><stop offset="0.875" stop-color="#ff0098"/><stop offset="0.900" stop-color="#ff0091"/><stop offset="0.925" stop-color="#ff008b"/><stop offset="0.950" stop-color="#ff0085"/><stop offset="0.975" stop-color="#ff007f"/><stop offset="1.000" stop-color="#ff007a"/></linearGradient>
<linearGradient id="lr39" gradientUnits="userSpaceOnUse" x1="1017.4" y1="0" x2="1657.4" y2="0"><stop offset="0.000" stop-color="#003bff"/><stop offset="0.025" stop-color="#0037ff"/><stop offset="0.050" stop-color="#0033ff"/><stop offset="0.075" stop-color="#002fff"/><stop offset="0.100" stop-color="#002bff"/><stop offset="0.125" stop-color="#0027ff"/><stop offset="0.150" stop-color="#0023ff"/><stop offset="0.175" stop-color="#001fff"/><stop offset="0.200" stop-color="#001aff"/><stop offset="0.225" stop-color="#0016ff"/><stop offset="0.250" stop-color="#0012ff"/><stop offset="0.275" stop-color="#000eff"/><stop offset="0.300" stop-color="#0b09ff"/><stop offset="0.325" stop-color="#1a05ff"/><stop offset="0.350" stop-color="#2a00ff"/><stop offset="0.375" stop-color="#3a00ff"/><stop offset="0.400" stop-color="#4900ff"/><stop offset="0.425" stop-color="#5a00ff"/><stop offset="0.450" stop-color="#6a00ff"/><stop offset="0.475" stop-color="#7a00ff"/><stop offset="0.500" stop-color="#8b00ff"/><stop offset="0.525" stop-color="#9c00ff"/><stop offset="0.550" stop-color="#ad00ff"/><stop offset="0.575" stop-color="#be00ff"/><stop offset="0.600" stop-color="#cf00ff"/><stop offset="0.625" stop-color="#e100ff"/><stop offset="0.650" stop-color="#f200ff"/><stop offset="0.675" stop-color="#ff00fa"/><stop offset="0.700" stop-color="#ff00e9"/><stop offset="0.725" stop-color="#ff00db"/><stop offset="0.750" stop-color="#ff00ce"/><stop offset="0.775" stop-color="#ff00c3"/><stop offset="0.800" stop-color="#ff00b8"/><stop offset="0.825" stop-color="#ff00af"/><stop offset="0.850" stop-color="#ff00a6"/><stop offset="0.875" stop-color="#ff009e"/><stop offset="0.900" stop-color="#ff0097"/><stop offset="0.925" stop-color="#ff0090"/><stop offset="0.950" stop-color="#ff008a"/><stop offset="0.975" stop-color="#ff0084"/><stop offset="1.000" stop-color="#ff007f"/></linearGradient>
<linearGradient id="lr40" gradientUnits="userSpaceOnUse" x1="1017.4" y1="0" x2="1657.4" y2="0"><stop offset="0.000" stop-color="#0037ff"/><stop offset="0.025" stop-color="#0033ff"/><stop offset="0.050" stop-color="#002fff"/><stop offset="0.075" stop-color="#002cff"/><stop offset="0.100" stop-color="#0028ff"/><stop offset="0.125" stop-color="#0024ff"/><stop offset="0.150" stop-color="#0020ff"/><stop offset="0.175" stop-color="#001cff"/><stop offset="0.200" stop-color="#0018ff"/><stop offset="0.225" stop-color="#0013ff"/><stop offset="0.250" stop-color="#000fff"/><stop offset="0.275" stop-color="#000bff"/><stop offset="0.300" stop-color="#0907ff"/><stop offset="0.325" stop-color="#1803ff"/><stop offset="0.350" stop-color="#2700ff"/><stop offset="0.375" stop-color="#3700ff"/><stop offset="0.400" stop-color="#4600ff"/><stop offset="0.425" stop-color="#5600ff"/><stop offset="0.450" stop-color="#6600ff"/><stop offset="0.475" stop-color="#7600ff"/><stop offset="0.500" stop-color="#8600ff"/><stop offset="0.525" stop-color="#9600ff"/><stop offset="0.550" stop-color="#a600ff"/><stop offset="0.575" stop-color="#b700ff"/><stop offset="0.600" stop-color="#c800ff"/><stop offset="0.625" stop-color="#d900ff"/><stop offset="0.650" stop-color="#ea00ff"/><stop offset="0.675" stop-color="#fb00ff"/><stop offset="0.700" stop-color="#ff00f2"/><stop offset="0.725" stop-color="#ff00e3"/><stop offset="0.750" stop-color="#ff00d5"/><stop offset="0.775" stop-color="#ff00c9"/><stop offset="0.800" stop-color="#ff00bf"/><stop offset="0.825" stop-color="#ff00b5"/><stop offset="0.850" stop-color="#ff00ac"/><stop offset="0.875" stop-color="#ff00a4"/><stop offset="0.900" stop-color="#ff009c"/><stop offset="0.925" stop-color="#ff0095"/><stop offset="0.950" stop-color="#ff008f"/><stop offset="0.975" stop-color="#ff0089"/><stop offset="1.000" stop-color="#ff0083"/></linearGradient>
<linearGradient id="lr41" gradientUnits="userSpaceOnUse" x1="1017.4" y1="0" x2="1657.4" y2="0"><stop offset="0.000" stop-color="#0034ff"/><stop offset="0.025" stop-color="#0030ff"/><stop offset="0.050" stop-color="#002cff"/><stop offset="0.075" stop-color="#0028ff"/><stop offset="0.100" stop-color="#0025ff"/><stop offset="0.125" stop-color="#0021ff"/><stop offset="0.150" stop-color="#001dff"/><stop offset="0.175" stop-color="#0019ff"/><stop offset="0.200" stop-color="#0015ff"/><stop offset="0.225" stop-color="#0011ff"/><stop offset="0.250" stop-color="#000dff"/><stop offset="0.275" stop-color="#0009ff"/><stop offset="0.300" stop-color="#0805ff"/><stop offset="0.325" stop-color="#1701ff"/><stop offset="0.350" stop-color="#2500ff"/><stop offset="0.375" stop-color="#3400ff"/><stop offset="0.400" stop-color="#4300ff"/><stop offset="0.425" stop-color="#5200ff"/><stop offset="0.450" stop-color="#6200ff"/><stop offset="0.475" stop-color="#7100ff"/><stop offset="0.500" stop-color="#8100ff"/><stop offset="0.525" stop-color="#9100ff"/><stop offset="0.550" stop-color="#a100ff"/><stop offset="0.575" stop-color="#b100ff"/><stop offset="0.600" stop-color="#c100ff"/><stop offset="0.625" stop-color="#d100ff"/><stop offset="0.650" stop-color="#e200ff"/><stop offset="0.675" stop-color="#f300ff"/><stop offset="0.700" stop-color="#ff00fa"/><stop offset="0.725" stop-color="#ff00eb"/><stop offset="0.750" stop-color="#ff00dd"/><stop offset="0.775" stop-color="#ff00d0"/><stop offset="0.800" stop-color="#ff00c5"/><stop offset="0.825" stop-color="#ff00bb"/><stop offset="0.850" stop-color="#ff00b2"/><stop offset="0.875" stop-color="#ff00a9"/><stop offset="0.900" stop-color="#ff00a1"/><stop offset="0.925" stop-color="#ff009a"/><stop offset="0.950" stop-color="#ff0094"/><stop offset="0.975" stop-color="#ff008d"/><stop offset="1.000" stop-color="#ff0088"/></linearGradient>
<linearGradient id="lr42" gradientUnits="userSpaceOnUse" x1="1017.4" y1="0" x2="1657.4" y2="0"><stop offset="0.000" stop-color="#0031ff"/><stop offset="0.025" stop-color="#002dff"/><stop offset="0.050" stop-color="#0029ff"/><stop offset="0.075" stop-color="#0026ff"/><stop offset="0.100" stop-color="#0022ff"/><stop offset="0.125" stop-color="#001eff"/><stop offset="0.150" stop-color="#001aff"/><stop offset="0.175" stop-color="#0016ff"/><stop offset="0.200" stop-color="#0012ff"/><stop offset="0.225" stop-color="#000fff"/><stop offset="0.250" stop-color="#000bff"/><stop offset="0.275" stop-color="#0007ff"/><stop offset="0.300" stop-color="#0703ff"/><stop offset="0.325" stop-color="#1500ff"/><stop offset="0.350" stop-color="#2300ff"/><stop offset="0.375" stop-color="#3200ff"/><stop offset="0.400" stop-color="#4000ff"/><stop offset="0.425" stop-color="#4f00ff"/><stop offset="0.450" stop-color="#5e00ff"/><stop offset="0.475" stop-color="#6d00ff"/><stop offset="0.500" stop-color="#7c00ff"/><stop offset="0.525" stop-color="#8b00ff"/><stop offset="0.550" stop-color="#9b00ff"/><stop offset="0.575" stop-color="#ab00ff"/><stop offset="0.600" stop-color="#ba00ff"/><stop offset="0.625" stop-color="#ca00ff"/><stop offset="0.650" stop-color="#db00ff"/><stop offset="0.675" stop-color="#eb00ff"/><stop offset="0.700" stop-color="#fb00ff"/><stop offset="0.725" stop-color="#ff00f3"/><stop offset="0.750" stop-color="#ff00e4"/><stop offset="0.775" stop-color="#ff00d7"/><stop offset="0.800" stop-color="#ff00cc"/><stop offset="0.825" stop-color="#ff00c1"/><stop offset="0.850" stop-color="#ff00b8"/><stop offset="0.875" stop-color="#ff00af"/><stop offset="0.900" stop-color="#ff00a7"/><stop offset="0.925" stop-color="#ff009f"/><stop offset="0.950" stop-color="#ff0099"/><stop offset="0.975" stop-color="#ff0092"/><stop offset="1.000" stop-color="#ff008c"/></linearGradient>
<linearGradient id="lr43" gradientUnits="userSpaceOnUse" x1="1017.4" y1="0" x2="1657.4" y2="0"><stop offset="0.000" stop-color="#002eff"/><stop offset="0.025" stop-color="#002aff"/><stop offset="0.050" stop-color="#0026ff"/><stop offset="0.075" stop-color="#0023ff"/><stop offset="0.100" stop-color="#001fff"/><stop offset="0.125" stop-color="#001bff"/><stop offset="0.150" stop-color="#0018ff"/><stop offset="0.175" stop-color="#0014ff"/><stop offset="0.200" stop-color="#0010ff"/><stop offset="0.225" stop-color="#000cff"/><stop offset="0.250" stop-color="#0008ff"/><stop offset="0.275" stop-color="#0004ff"/><stop offset="0.300" stop-color="#0501ff"/><stop offset="0.325" stop-color="#1300ff"/><stop offset="0.350" stop-color="#2100ff"/><stop offset="0.375" stop-color="#2f00ff"/><stop offset="0.400" stop-color="#3d00ff"/><stop offset="0.425" stop-color="#4c00ff"/><stop offset="0.450" stop-color="#5a00ff"/><stop offset="0.475" stop-color="#6900ff"/><stop offset="0.500" stop-color="#7800ff"/><stop offset="0.525" stop-color="#8700ff"/><stop offset="0.550" stop-color="#9600ff"/><stop offset="0.575" stop-color="#a500ff"/><stop offset="0.600" stop-color="#b400ff"/><stop offset="0.625" stop-color="#c400ff"/><stop offset="0.650" stop-color="#d400ff"/><stop offset="0.675" stop-color="#e300ff"/><stop offset="0.700" stop-color="#f300ff"/><stop offset="0.725" stop-color="#ff00fb"/><stop offset="0.750" stop-color="#ff00ec"/><stop offset="0.775" stop-color="#ff00de"/><stop offset="0.800" stop-color="#ff00d2"/><stop offset="0.825" stop-color="#ff00c7"/><stop offset="0.850" stop-color="#ff00be"/><stop offset="0.875" stop-color="#ff00b5"/><stop offset="0.900" stop-color="#ff00ac"/><stop offset="0.925" stop-color="#ff00a5"/><stop offset="0.950" stop-color="#ff009d"/><stop offset="0.975" stop-color="#ff0097"/><stop offset="1.000" stop-color="#ff0091"/></linearGradient>
<linearGradient id="lr44" gradientUnits="userSpaceOnUse" x1="1017.4" y1="0" x2="1657.4" y2="0"><stop offset="0.000" stop-color="#002bff"/><stop offset="0.025" stop-color="#0027ff"/><stop offset="0.050" stop-color="#0024ff"/><stop offset="0.075" stop-color="#0020ff"/><stop offset="0.100" stop-color="#001dff"/><stop offset="0.125" stop-color="#0019ff"/><stop offset="0.150" stop-color="#0015ff"/><stop offset="0.175" stop-color="#0012ff"/><stop offset="0.200" stop-color="#000eff"/><stop offset="0.225" stop-color="#000aff"/><stop offset="0.250" stop-color="#0006ff"/><stop offset="0.275" stop-color="#0002ff"/><stop offset="0.300" stop-color="#0400ff"/><stop offset="0.325" stop-color="#1200ff"/><stop offset="0.350" stop-color="#1f00ff"/><stop offset="0.375" stop-color="#2d00ff"/><stop offset="0.400" stop-color="#3b00ff"/><stop offset="0.425" stop-color="#4900ff"/><stop offset="0.450" stop-color="#5700ff"/><stop offset="0.475" stop-color="#6500ff"/><stop offset="0.500" stop-color="#7400ff"/><stop offset="0.525" stop-color="#8200ff"/><stop offset="0.550" stop-color="#9100ff"/><stop offset="0.575" stop-color="#a000ff"/><stop offset="0.600" stop-color="#af00ff"/><stop offset="0.625" stop-color="#be00ff"/><stop offset="0.650" stop-color="#cd00ff"/><stop offset="0.675" stop-color="#dc00ff"/><stop offset="0.700" stop-color="#ec00ff"/><stop offset="0.725" stop-color="#fc00ff"/><stop offset="0.750" stop-color="#ff00f3"/><stop offset="0.775" stop-color="#ff00e5"/><stop offset="0.800" stop-color="#ff00d9"/><stop offset="0.825" stop-color="#ff00ce"/><stop offset="0.850" stop-color="#ff00c4"/><stop offset="0.875" stop-color="#ff00ba"/><stop offset="0.900" stop-color="#ff00b2"/><stop offset="0.925" stop-color="#ff00aa"/><stop offset="0.950" stop-color="#ff00a2"/><stop offset="0.975" stop-color="#ff009c"/><stop offset="1.000" stop-color="#ff0095"/></linearGradient>
<linearGradient id="lr45" gradientUnits="userSpaceOnUse" x1="1017.4" y1="0" x2="1657.4" y2="0"><stop offset="0.000" stop-color="#0028ff"/><stop offset="0.025" stop-color="#0025ff"/><stop offset="0.050" stop-color="#0021ff"/><stop offset="0.075" stop-color="#001eff"/><stop offset="0.100" stop-color="#001aff"/><stop offset="0.125" stop-color="#0017ff"/><stop offset="0.150" stop-color="#0013ff"/><stop offset="0.175" stop-color="#000fff"/><stop offset="0.200" stop-color="#000cff"/><stop offset="0.225" stop-color="#0008ff"/><stop offset="0.250" stop-color="#0004ff"/><stop offset="0.275" stop-color="#0001ff"/><stop offset="0.300" stop-color="#0300ff"/><stop offset="0.325" stop-color="#1000ff"/><stop offset="0.350" stop-color="#1d00ff"/><stop offset="0.375" stop-color="#2b00ff"/><stop offset="0.400" stop-color="#3800ff"/><stop offset="0.425" stop-color="#4600ff"/><stop offset="0.450" stop-color="#5400ff"/><stop offset="0.475" stop-color="#6200ff"/><stop offset="0.500" stop-color="#7000ff"/><stop offset="0.525" stop-color="#7e00ff"/><stop offset="0.550" stop-color="#8c00ff"/><stop offset="0.575" stop-color="#9a00ff"/><stop offset="0.600" stop-color="#a900ff"/><stop offset="0.625" stop-color="#b800ff"/><stop offset="0.650" stop-color="#c600ff"/><stop offset="0.675" stop-color="#d500ff"/><stop offset="0.700" stop-color="#e500ff"/><stop offset="0.725" stop-color="#f400ff"/><stop offset="0.750" stop-color="#ff00fb"/><stop offset="0.775" stop-color="#ff00ed"/><stop offset="0.800" stop-color="#ff00e0"/><stop offset="0.825" stop-color="#ff00d4"/><stop offset="0.850" stop-color="#ff00ca"/><stop offset="0.875" stop-color="#ff00c0"/><stop offset="0.900" stop-color="#ff00b7"/><stop offset="0.925" stop-color="#ff00af"/><stop offset="0.950" stop-color="#ff00a8"/><stop offset="0.975" stop-color="#ff00a1"/><stop offset="1.000" stop-color="#ff009a"/></linearGradient>
<linearGradient id="lr46" gradientUnits="userSpaceOnUse" x1="1017.4" y1="0" x2="1657.4" y2="0"><stop offset="0.000" stop-color="#0025ff"/><stop offset="0.025" stop-color="#0022ff"/><stop offset="0.050" stop-color="#001fff"/><stop offset="0.075" stop-color="#001bff"/><stop offset="0.100" stop-color="#0018ff"/><stop offset="0.125" stop-color="#0014ff"/><stop offset="0.150" stop-color="#0011ff"/><stop offset="0.175" stop-color="#000dff"/><stop offset="0.200" stop-color="#000aff"/><stop offset="0.225" stop-color="#0006ff"/><stop offset="0.250" stop-color="#0002ff"/><stop offset="0.275" stop-color="#0000ff"/><stop offset="0.300" stop-color="#0200ff"/><stop offset="0.325" stop-color="#0f00ff"/><stop offset="0.350" stop-color="#1c00ff"/><stop offset="0.375" stop-color="#2900ff"/><stop offset="0.400" stop-color="#3600ff"/><stop offset="0.425" stop-color="#4300ff"/><stop offset="0.450" stop-color="#5100ff"/><stop offset="0.475" stop-color="#5e00ff"/><stop offset="0.500" stop-color="#6c00ff"/><stop offset="0.525" stop-color="#7a00ff"/><stop offset="0.550" stop-color="#8700ff"/><stop offset="0.575" stop-color="#9600ff"/><stop offset="0.600" stop-color="#a400ff"/><stop offset="0.625" stop-color="#b200ff"/><stop offset="0.650" stop-color="#c000ff"/><stop offset="0.675" stop-color="#cf00ff"/><stop offset="0.700" stop-color="#de00ff"/><stop offset="0.725" stop-color="#ed00ff"/><stop offset="0.750" stop-color="#fc00ff"/><stop offset="0.775" stop-color="#ff00f4"/><stop offset="0.800" stop-color="#ff00e7"/><stop offset="0.825" stop-color="#ff00db"/><stop offset="0.850" stop-color="#ff00d0"/><stop offset="0.875" stop-color="#ff00c6"/><stop offset="0.900" stop-color="#ff00bd"/><stop offset="0.925" stop-color="#ff00b4"/><stop offset="0.950" stop-color="#ff00ad"/><stop offset="0.975" stop-color="#ff00a5"/><stop offset="1.000" stop-color="#ff009f"/></linearGradient>
<linearGradient id="lr47" gradientUnits="userSpaceOnUse" x1="1017.4" y1="0" x2="1657.4" y2="0"><stop offset="0.000" stop-color="#0023ff"/><stop offset="0.025" stop-color="#0020ff"/><stop offset="0.050" stop-color="#001cff"/><stop offset="0.075" stop-color="#0019ff"/><stop offset="0.100" stop-color="#0016ff"/><stop offset="0.125" stop-color="#0012ff"/><stop offset="0.150" stop-color="#000fff"/><stop offset="0.175" stop-color="#000bff"/><stop offset="0.200" stop-color="#0008ff"/><stop offset="0.225" stop-color="#0004ff"/><stop offset="0.250" stop-color="#0001ff"/><stop offset="0.275" stop-color="#0000ff"/><stop offset="0.300" stop-color="#0100ff"/><stop offset="0.325" stop-color="#0d00ff"/><stop offset="0.350" stop-color="#1a00ff"/><stop offset="0.375" stop-color="#2700ff"/><stop offset="0.400" stop-color="#3400ff"/><stop offset="0.425" stop-color="#4100ff"/><stop offset="0.450" stop-color="#4e00ff"/><stop offset="0.475" stop-color="#5b00ff"/><stop offset="0.500" stop-color="#6800ff"/><stop offset="0.525" stop-color="#7600ff"/><stop offset="0.550" stop-color="#8300ff"/><stop offset="0.575" stop-color="#9100ff"/><stop offset="0.600" stop-color="#9f00ff"/><stop offset="0.625" stop-color="#ad00ff"/><stop offset="0.650" stop-color="#bb00ff"/><stop offset="0.675" stop-color="#c900ff"/><stop offset="0.700" stop-color="#d700ff"/><stop offset="0.725" stop-color="#e600ff"/><stop offset="0.750" stop-color="#f400ff"/><stop offset="0.775" stop-color="#ff00fb"/><stop offset="0.800" stop-color="#ff00ed"/><stop offset="0.825" stop-color="#ff00e1"/><stop offset="0.850" stop-color="#ff00d6"/><stop offset="0.875" stop-color="#ff00cc"/><stop offset="0.900" stop-color="#ff00c2"/><stop offset="0.925" stop-color="#ff00ba"/><stop offset="0.950" stop-color="#ff00b2"/><stop offset="0.975" stop-color="#ff00aa"/><stop offset="1.000" stop-color="#ff00a3"/></linearGradient>
<linearGradient id="lr48" gradientUnits="userSpaceOnUse" x1="1017.4" y1="0" x2="1657.4" y2="0"><stop offset="0.000" stop-color="#0020ff"/><stop offset="0.025" stop-color="#001dff"/><stop offset="0.050" stop-color="#001aff"/><stop offset="0.075" stop-color="#0017ff"/><stop offset="0.100" stop-color="#0013ff"/><stop offset="0.125" stop-color="#0010ff"/><stop offset="0.150" stop-color="#000dff"/><stop offset="0.175" stop-color="#0009ff"/><stop offset="0.200" stop-color="#0006ff"/><stop offset="0.225" stop-color="#0002ff"/><stop offset="0.250" stop-color="#0000ff"/><stop offset="0.275" stop-color="#0000ff"/><stop offset="0.300" stop-color="#0000ff"/><stop offset="0.325" stop-color="#0c00ff"/><stop offset="0.350" stop-color="#1800ff"/><stop offset="0.375" stop-color="#2500ff"/><stop offset="0.400" stop-color="#3100ff"/><stop offset="0.425" stop-color="#3e00ff"/><stop offset="0.450" stop-color="#4b00ff"/><stop offset="0.475" stop-color="#5800ff"/><stop offset="0.500" stop-color="#6500ff"/><stop offset="0.525" stop-color="#7200ff"/><stop offset="0.550" stop-color="#7f00ff"/><stop offset="0.575" stop-color="#8c00ff"/><stop offset="0.600" stop-color="#9a00ff"/><stop offset="0.625" stop-color="#a800ff"/><stop offset="0.650" stop-color="#b500ff"/><stop offset="0.675" stop-color="#c300ff"/><stop offset="0.700" stop-color="#d100ff"/><stop offset="0.725" stop-color="#df00ff"/><stop offset="0.750" stop-color="#ed00ff"/><stop offset="0.775" stop-color="#fc00ff"/><stop offset="0.800" stop-color="#ff00f4"/><stop offset="0.825" stop-color="#ff00e8"/><stop offset="0.850" stop-color="#ff00dc"/><stop offset="0.875" stop-color="#ff00d2"/><stop offset="0.900" stop-color="#ff00c8"/><stop offset="0.925" stop-color="#ff00bf"/><stop offset="0.950" stop-color="#ff00b7"/><stop offset="0.975" stop-color="#ff00af"/><stop offset="1.000" stop-color="#ff00a8"/></linearGradient>
<linearGradient id="lr49" gradientUnits="userSpaceOnUse" x1="1017.4" y1="0" x2="1657.4" y2="0"><stop offset="0.000" stop-color="#001eff"/><stop offset="0.025" stop-color="#001bff"/><stop offset="0.050" stop-color="#0018ff"/><stop offset="0.075" stop-color="#0015ff"/><stop offset="0.100" stop-color="#0011ff"/><stop offset="0.125" stop-color="#000eff"/><stop offset="0.150" stop-color="#000bff"/><stop offset="0.175" stop-color="#0007ff"/><stop offset="0.200" stop-color="#0004ff"/><stop offset="0.225" stop-color="#0001ff"/><stop offset="0.250" stop-color="#0000ff"/><stop offset="0.275" stop-color="#0000ff"/><stop offset="0.300" stop-color="#0000ff"/><stop offset="0.325" stop-color="#0b00ff"/><stop offset="0.350" stop-color="#1700ff"/><stop offset="0.375" stop-color="#2300ff"/><stop offset="0.400" stop-color="#2f00ff"/><stop offset="0.425" stop-color="#3c00ff"/><stop offset="0.450" stop-color="#4800ff"/><stop offset="0.475" stop-color="#5500ff"/><stop offset="0.500" stop-color="#6100ff"/><stop offset="0.525" stop-color="#6e00ff"/><stop offset="0.550" stop-color="#7b00ff"/><stop offset="0.575" stop-color="#8800ff"/><stop offset="0.600" stop-color="#9500ff"/><stop offset="0.625" stop-color="#a300ff"/><stop offset="0.650" stop-color="#b000ff"/><stop offset="0.675" stop-color="#bd00ff"/><stop offset="0.700" stop-color="#cb00ff"/><stop offset="0.725" stop-color="#d900ff"/><stop offset="0.750" stop-color="#e700ff"/><stop offset="0.775" stop-color="#f500ff"/><stop offset="0.800" stop-color="#ff00fb"/><stop offset="0.825" stop-color="#ff00ee"/><stop offset="0.850" stop-color="#ff00e2"/><stop offset="0.875" stop-color="#ff00d8"/><stop offset="0.900" stop-color="#ff00ce"/><stop offset="0.925" stop-color="#ff00c4"/><stop offset="0.950" stop-color="#ff00bc"/><stop offset="0.975" stop-color="#ff00b4"/><stop offset="1.000" stop-color="#ff00ad"/></linearGradient>
<linearGradient id="lr50" gradientUnits="userSpaceOnUse" x1="1017.4" y1="0" x2="1657.4" y2="0"><stop offset="0.000" stop-color="#001cff"/><stop offset="0.025" stop-color="#0019ff"/><stop offset="0.050" stop-color="#0016ff"/><stop offset="0.075" stop-color="#0013ff"/><stop offset="0.100" stop-color="#000fff"/><stop offset="0.125" stop-color="#000cff"/><stop offset="0.150" stop-color="#0009ff"/><stop offset="0.175" stop-color="#0006ff"/><stop offset="0.200" stop-color="#0002ff"/><stop offset="0.225" stop-color="#0000ff"/><stop offset="0.250" stop-color="#0000ff"/><stop offset="0.275" stop-color="#0000ff"/><stop offset="0.300" stop-color="#0000ff"/><stop offset="0.325" stop-color="#0a00ff"/><stop offset="0.350" stop-color="#1500ff"/><stop offset="0.375" stop-color="#2100ff"/><stop offset="0.400" stop-color="#2d00ff"/><stop offset="0.425" stop-color="#3900ff"/><stop offset="0.450" stop-color="#4600ff"/><stop offset="0.475" stop-color="#5200ff"/><stop offset="0.500" stop-color="#5e00ff"/><stop offset="0.525" stop-color="#6b00ff"/><stop offset="0.550" stop-color="#7700ff"/><stop offset="0.575" stop-color="#8400ff"/><stop offset="0.600" stop-color="#9100ff"/><stop offset="0.625" stop-color="#9e00ff"/><stop offset="0.650" stop-color="#ab00ff"/><stop offset="0.675" stop-color="#b800ff"/><stop offset="0.700" stop-color="#c500ff"/><stop offset="0.725" stop-color="#d300ff"/><stop offset="0.750" stop-color="#e000ff"/><stop offset="0.775" stop-color="#ee00ff"/><stop offset="0.800" stop-color="#fc00ff"/><stop offset="0.825" stop-color="#ff00f5"/><stop offset="0.850" stop-color="#ff00e9"/><stop offset="0.875" stop-color="#ff00de"/><stop offset="0.900" stop-color="#ff00d3"/><stop offset="0.925" stop-color="#ff00ca"/><stop offset="0.950" stop-color="#ff00c1"/><stop offset="0.975" stop-color="#ff00b9"/><stop offset="1.000" stop-color="#ff00b2"/></linearGradient>
<linearGradient id="lr51" gradientUnits="userSpaceOnUse" x1="1017.4" y1="0" x2="1657.4" y2="0"><stop offset="0.000" stop-color="#001aff"/><stop offset="0.025" stop-color="#0017ff"/><stop offset="0.050" stop-color="#0014ff"/><stop offset="0.075" stop-color="#0011ff"/><stop offset="0.100" stop-color="#000dff"/><stop offset="0.125" stop-color="#000aff"/><stop offset="0.150" stop-color="#0007ff"/><stop offset="0.175" stop-color="#0004ff"/><stop offset="0.200" stop-color="#0001ff"/><stop offset="0.225" stop-color="#0000ff"/><stop offset="0.250" stop-color="#0000ff"/><stop offset="0.275" stop-color="#0000ff"/><stop offset="0.300" stop-color="#0000ff"/><stop offset="0.325" stop-color="#0800ff"/><stop offset="0.350" stop-color="#1400ff"/><stop offset="0.375" stop-color="#2000ff"/><stop offset="0.400" stop-color="#2b00ff"/><stop offset="0.425" stop-color="#3700ff"/><stop offset="0.450" stop-color="#4300ff"/><stop offset="0.475" stop-color="#4f00ff"/><stop offset="0.500" stop-color="#5b00ff"/><stop offset="0.525" stop-color="#6800ff"/><stop offset="0.550" stop-color="#7400ff"/><stop offset="0.575" stop-color="#8000ff"/><stop offset="0.600" stop-color="#8d00ff"/><stop offset="0.625" stop-color="#9900ff"/><stop offset="0.650" stop-color="#a600ff"/><stop offset="0.675" stop-color="#b300ff"/><stop offset="0.700" stop-color="#c000ff"/><stop offset="0.725" stop-color="#cd00ff"/><stop offset="0.750" stop-color="#da00ff"/><stop offset="0.775" stop-color="#e800ff"/><stop offset="0.800" stop-color="#f500ff"/><stop offset="0.825" stop-color="#ff00fc"/><stop offset="0.850" stop-color="#ff00ef"/><stop offset="0.875" stop-color="#ff00e4"/><stop offset="0.900" stop-color="#ff00d9"/><stop offset="0.925" stop-color="#ff00cf"/><stop offset="0.950" stop-color="#ff00c6"/><stop offset="0.975" stop-color="#ff00be"/><stop offset="1.000" stop-color="#ff00b7"/></linearGradient>
<linearGradient id="lr52" gradientUnits="userSpaceOnUse" x1="1017.4" y1="0" x2="1657.4" y2="0"><stop offset="0.000" stop-color="#0018ff"/><stop offset="0.025" stop-color="#0015ff"/><stop offset="0.050" stop-color="#0012ff"/><stop offset="0.075" stop-color="#000fff"/><stop offset="0.100" stop-color="#000cff"/><stop offset="0.125" stop-color="#0009ff"/><stop offset="0.150" stop-color="#0005ff"/><stop offset="0.175" stop-color="#0002ff"/><stop offset="0.200" stop-color="#0000ff"/><stop offset="0.225" stop-color="#0000ff"/><stop offset="0.250" stop-color="#0000ff"/><stop offset="0.275" stop-color="#0000ff"/><stop offset="0.300" stop-color="#0000ff"/><stop offset="0.325" stop-color="#0700ff"/><stop offset="0.350" stop-color="#1300ff"/><stop offset="0.375" stop-color="#1e00ff"/><stop offset="0.400" stop-color="#2a00ff"/><stop offset="0.425" stop-color="#3500ff"/><stop offset="0.450" stop-color="#4100ff"/><stop offset="0.475" stop-color="#4d00ff"/><stop offset="0.500" stop-color="#5800ff"/><stop offset="0.525" stop-color="#6400ff"/><stop offset="0.550" stop-color="#7000ff"/><stop offset="0.575" stop-color="#7d00ff"/><stop offset="0.600" stop-color="#8900ff"/><stop offset="0.625" stop-color="#9500ff"/><stop offset="0.650" stop-color="#a200ff"/><stop offset="0.675" stop-color="#ae00ff"/><stop offset="0.700" stop-color="#bb00ff"/><stop offset="0.725" stop-color="#c800ff"/><stop offset="0.750" stop-color="#d400ff"/><stop offset="0.775" stop-color="#e100ff"/><stop offset="0.800" stop-color="#ef00ff"/><stop offset="0.825" stop-color="#fc00ff"/><stop offset="0.850" stop-color="#ff00f5"/><stop offset="0.875" stop-color="#ff00ea"/><stop offset="0.900" stop-color="#ff00df"/><stop offset="0.925" stop-color="#ff00d5"/><stop offset="0.950" stop-color="#ff00cc"/><stop offset="0.975" stop-color="#ff00c3"/><stop offset="1.000" stop-color="#ff00bb"/></linearGradient>
<linearGradient id="lr53" gradientUnits="userSpaceOnUse" x1="1017.4" y1="0" x2="1657.4" y2="0"><stop offset="0.000" stop-color="#0016ff"/><stop offset="0.025" stop-color="#0013ff"/><stop offset="0.050" stop-color="#0010ff"/><stop offset="0.075" stop-color="#000dff"/><stop offset="0.100" stop-color="#000aff"/><stop offset="0.125" stop-color="#0007ff"/><stop offset="0.150" stop-color="#0004ff"/><stop offset="0.175" stop-color="#0001ff"/><stop offset="0.200" stop-color="#0000ff"/><stop offset="0.225" stop-color="#0000ff"/><stop offset="0.250" stop-color="#0000ff"/><stop offset="0.275" stop-color="#0000ff"/><stop offset="0.300" stop-color="#0000ff"/><stop offset="0.325" stop-color="#0600ff"/><stop offset="0.350" stop-color="#1100ff"/><stop offset="0.375" stop-color="#1d00ff"/><stop offset="0.400" stop-color="#2800ff"/><stop offset="0.425" stop-color="#3300ff"/><stop offset="0.450" stop-color="#3f00ff"/><stop offset="0.475" stop-color="#4a00ff"/><stop offset="0.500" stop-color="#5600ff"/><stop offset="0.525" stop-color="#6100ff"/><stop offset="0.550" stop-color="#6d00ff"/><stop offset="0.575" stop-color="#7900ff"/><stop offset="0.600" stop-color="#8500ff"/><stop offset="0.625" stop-color="#9100ff"/><stop offset="0.650" stop-color="#9d00ff"/><stop offset="0.675" stop-color="#aa00ff"/><stop offset="0.700" stop-color="#b600ff"/><stop offset="0.725" stop-color="#c200ff"/><stop offset="0.750" stop-color="#cf00ff"/><stop offset="0.775" stop-color="#dc00ff"/><stop offset="0.800" stop-color="#e800ff"/><stop offset="0.825" stop-color="#f500ff"/><stop offset="0.850" stop-color="#ff00fc"/><stop offset="0.875" stop-color="#ff00f0"/><stop offset="0.900" stop-color="#ff00e5"/><stop offset="0.925" stop-color="#ff00da"/><stop offset="0.950" stop-color="#ff00d1"/><stop offset="0.975" stop-color="#ff00c8"/><stop offset="1.000" stop-color="#ff00c0"/></linearGradient>
<linearGradient id="lr54" gradientUnits="userSpaceOnUse" x1="1017.4" y1="0" x2="1657.4" y2="0"><stop offset="0.000" stop-color="#0014ff"/><stop offset="0.025" stop-color="#0011ff"/><stop offset="0.050" stop-color="#000eff"/><stop offset="0.075" stop-color="#000bff"/><stop offset="0.100" stop-color="#0008ff"/><stop offset="0.125" stop-color="#0005ff"/><stop offset="0.150" stop-color="#0002ff"/><stop offset="0.175" stop-color="#0000ff"/><stop offset="0.200" stop-color="#0000ff"/><stop offset="0.225" stop-color="#0000ff"/><stop offset="0.250" stop-color="#0000ff"/><stop offset="0.275" stop-color="#0000ff"/><stop offset="0.300" stop-color="#0000ff"/><stop offset="0.325" stop-color="#0500ff"/><stop offset="0.350" stop-color="#1000ff"/><stop offset="0.375" stop-color="#1b00ff"/><stop offset="0.400" stop-color="#2600ff"/><stop offset="0.425" stop-color="#3100ff"/><stop offset="0.450" stop-color="#3c00ff"/><stop offset="0.475" stop-color="#4800ff"/><stop offset="0.500" stop-color="#5300ff"/><stop offset="0.525" stop-color="#5f00ff"/><stop offset="0.550" stop-color="#6a00ff"/><stop offset="0.575" stop-color="#7600ff"/><stop offset="0.600" stop-color="#8100ff"/><stop offset="0.625" stop-color="#8d00ff"/><stop offset="0.650" stop-color="#9900ff"/><stop offset="0.675" stop-color="#a500ff"/><stop offset="0.700" stop-color="#b100ff"/><stop offset="0.725" stop-color="#bd00ff"/><stop offset="0.750" stop-color="#ca00ff"/><stop offset="0.775" stop-color="#d600ff"/><stop offset="0.800" stop-color="#e200ff"/><stop offset="0.825" stop-color="#ef00ff"/><stop offset="0.850" stop-color="#fc00ff"/><stop offset="0.875" stop-color="#ff00f6"/><stop offset="0.900" stop-color="#ff00ea"/><stop offset="0.925" stop-color="#ff00e0"/><stop offset="0.950" stop-color="#ff00d6"/><stop offset="0.975" stop-color="#ff00cd"/><stop offset="1.000" stop-color="#ff00c5"/></linearGradient>
<linearGradient id="lr55" gradientUnits="userSpaceOnUse" x1="1017.4" y1="0" x2="1657.4" y2="0"><stop offset="0.000" stop-color="#0012ff"/><stop offset="0.025" stop-color="#000fff"/><stop offset="0.050" stop-color="#000cff"/><stop offset="0.075" stop-color="#000aff"/><stop offset="0.100" stop-color="#0007ff"/><stop offset="0.125" stop-color="#0004ff"/><stop offset="0.150" stop-color="#0001ff"/><stop offset="0.175" stop-color="#0000ff"/><stop offset="0.200" stop-color="#0000ff"/><stop offset="0.225" stop-color="#0000ff"/><stop offset="0.250" stop-color="#0000ff"/><stop offset="0.275" stop-color="#0000ff"/><stop offset="0.300" stop-color="#0000ff"/><stop offset="0.325" stop-color="#0400ff"/><stop offset="0.350" stop-color="#0f00ff"/><stop offset="0.375" stop-color="#1a00ff"/><stop offset="0.400" stop-color="#2500ff"/><stop offset="0.425" stop-color="#2f00ff"/><stop offset="0.450" stop-color="#3a00ff"/><stop offset="0.475" stop-color="#4500ff"/><stop offset="0.500" stop-color="#5100ff"/><stop offset="0.525" stop-color="#5c00ff"/><stop offset="0.550" stop-color="#6700ff"/><stop offset="0.575" stop-color="#7200ff"/><stop offset="0.600" stop-color="#7e00ff"/><stop offset="0.625" stop-color="#8900ff"/><stop offset="0.650" stop-color="#9500ff"/><stop offset="0.675" stop-color="#a100ff"/><stop offset="0.700" stop-color="#ad00ff"/><stop offset="0.725" stop-color="#b900ff"/><stop offset="0.750" stop-color="#c500ff"/><stop offset="0.775" stop-color="#d100ff"/><stop offset="0.800" stop-color="#dd00ff"/><stop offset="0.825" stop-color="#e900ff"/><stop offset="0.850" stop-color="#f600ff"/><stop offset="0.875" stop-color="#ff00fc"/><stop offset="0.900" stop-color="#ff00f0"/><stop offset="0.925" stop-color="#ff00e6"/><stop offset="0.950" stop-color="#ff00dc"/><stop offset="0.975" stop-color="#ff00d3"/><stop offset="1.000" stop-color="#ff00ca"/></linearGradient>
<linearGradient id="lr56" gradientUnits="userSpaceOnUse" x1="1017.4" y1="0" x2="1657.4" y2="0"><stop offset="0.000" stop-color="#0011ff"/><stop offset="0.025" stop-color="#000eff"/><stop offset="0.050" stop-color="#000bff"/><stop offset="0.075" stop-color="#0008ff"/><stop offset="0.100" stop-color="#0005ff"/><stop offset="0.125" stop-color="#0002ff"/><stop offset="0.150" stop-color="#0000ff"/><stop offset="0.175" stop-color="#0000ff"/><stop offset="0.200" stop-color="#0000ff"/><stop offset="0.225" stop-color="#0000ff"/><stop offset="0.250" stop-color="#0000ff"/><stop offset="0.275" stop-color="#0000ff"/><stop offset="0.300" stop-color="#0000ff"/><stop offset="0.325" stop-color="#0300ff"/><stop offset="0.350" stop-color="#0e00ff"/><stop offset="0.375" stop-color="#1800ff"/><stop offset="0.400" stop-color="#2300ff"/><stop offset="0.425" stop-color="#2e00ff"/><stop offset="0.450" stop-color="#3800ff"/><stop offset="0.475" stop-color="#4300ff"/><stop offset="0.500" stop-color="#4e00ff"/><stop offset="0.525" stop-color="#5900ff"/><stop offset="0.550" stop-color="#6400ff"/><stop offset="0.575" stop-color="#6f00ff"/><stop offset="0.600" stop-color="#7b00ff"/><stop offset="0.625" stop-color="#8600ff"/><stop offset="0.650" stop-color="#9100ff"/><stop offset="0.675" stop-color="#9d00ff"/><stop offset="0.700" stop-color="#a800ff"/><stop offset="0.725" stop-color="#b400ff"/><stop offset="0.750" stop-color="#c000ff"/><stop offset="0.775" stop-color="#cc00ff"/><stop offset="0.800" stop-color="#d700ff"/><stop offset="0.825" stop-color="#e300ff"/><stop offset="0.850" stop-color="#f000ff"/><stop offset="0.875" stop-color="#fc00ff"/><stop offset="0.900" stop-color="#ff00f6"/><stop offset="0.925" stop-color="#ff00eb"/><stop offset="0.950" stop-color="#ff00e1"/><stop offset="0.975" stop-color="#ff00d8"/><stop offset="1.000" stop-color="#ff00cf"/></linearGradient>
<linearGradient id="lr57" gradientUnits="userSpaceOnUse" x1="1017.4" y1="0" x2="1657.4" y2="0"><stop offset="0.000" stop-color="#000fff"/><stop offset="0.025" stop-color="#000cff"/><stop offset="0.050" stop-color="#0009ff"/><stop offset="0.075" stop-color="#0006ff"/><stop offset="0.100" stop-color="#0004ff"/><stop offset="0.125" stop-color="#0001ff"/><stop offset="0.150" stop-color="#0000ff"/><stop offset="0.175" stop-color="#0000ff"/><stop offset="0.200" stop-color="#0000ff"/><stop offset="0.225" stop-color="#0000ff"/><stop offset="0.250" stop-color="#0000ff"/><stop offset="0.275" stop-color="#0000ff"/><stop offset="0.300" stop-color="#0000ff"/><stop offset="0.325" stop-color="#0300ff"/><stop offset="0.350" stop-color="#0d00ff"/><stop offset="0.375" stop-color="#1700ff"/><stop offset="0.400" stop-color="#2100ff"/><stop offset="0.425" stop-color="#2c00ff"/><stop offset="0.450" stop-color="#3600ff"/><stop offset="0.475" stop-color="#4100ff"/><stop offset="0.500" stop-color="#4c00ff"/><stop offset="0.525" stop-color="#5700ff"/><stop offset="0.550" stop-color="#6100ff"/><stop offset="0.575" stop-color="#6c00ff"/><stop offset="0.600" stop-color="#7700ff"/><stop offset="0.625" stop-color="#8200ff"/><stop offset="0.650" stop-color="#8e00ff"/><stop offset="0.675" stop-color="#9900ff"/><stop offset="0.700" stop-color="#a400ff"/><stop offset="0.725" stop-color="#b000ff"/><stop offset="0.750" stop-color="#bb00ff"/><stop offset="0.775" stop-color="#c700ff"/><stop offset="0.800" stop-color="#d200ff"/><stop offset="0.825" stop-color="#de00ff"/><stop offset="0.850" stop-color="#ea00ff"/><stop offset="0.875" stop-color="#f600ff"/><stop offset="0.900" stop-color="#ff00fc"/><stop offset="0.925" stop-color="#ff00f1"/><stop offset="0.950" stop-color="#ff00e7"/><stop offset="0.975" stop-color="#ff00dd"/><stop offset="1.000" stop-color="#ff00d4"/></linearGradient>
<linearGradient id="lr58" gradientUnits="userSpaceOnUse" x1="1017.4" y1="0" x2="1657.4" y2="0"><stop offset="0.000" stop-color="#000dff"/><stop offset="0.025" stop-color="#000aff"/><stop offset="0.050" stop-color="#0008ff"/><stop offset="0.075" stop-color="#0005ff"/><stop offset="0.100" stop-color="#0002ff"/><stop offset="0.125" stop-color="#0000ff"/><stop offset="0.150" stop-color="#0000ff"/><stop offset="0.175" stop-color="#0000ff"/><stop offset="0.200" stop-color="#0000ff"/><stop offset="0.225" stop-color="#0000ff"/><stop offset="0.250" stop-color="#0000ff"/><stop offset="0.275" stop-color="#0000ff"/><stop offset="0.300" stop-color="#0000ff"/><stop offset="0.325" stop-color="#0200ff"/><stop offset="0.350" stop-color="#0c00ff"/><stop offset="0.375" stop-color="#1600ff"/><stop offset="0.400" stop-color="#2000ff"/><stop offset="0.425" stop-color="#2a00ff"/><stop offset="0.450" stop-color="#3500ff"/><stop offset="0.475" stop-color="#3f00ff"/><stop offset="0.500" stop-color="#4a00ff"/><stop offset="0.525" stop-color="#5400ff"/><stop offset="0.550" stop-color="#5f00ff"/><stop offset="0.575" stop-color="#6900ff"/><stop offset="0.600" stop-color="#7400ff"/><stop offset="0.625" stop-color="#7f00ff"/><stop offset="0.650" stop-color="#8a00ff"/><stop offset="0.675" stop-color="#9500ff"/><stop offset="0.700" stop-color="#a000ff"/><stop offset="0.725" stop-color="#ab00ff"/><stop offset="0.750" stop-color="#b700ff"/><stop offset="0.775" stop-color="#c200ff"/><stop offset="0.800" stop-color="#cd00ff"/><stop offset="0.825" stop-color="#d900ff"/><stop offset="0.850" stop-color="#e400ff"/><stop offset="0.875" stop-color="#f000ff"/><stop offset="0.900" stop-color="#fc00ff"/><stop offset="0.925" stop-color="#ff00f7"/><stop offset="0.950" stop-color="#ff00ec"/><stop offset="0.975" stop-color="#ff00e2"/><stop offset="1.000" stop-color="#ff00d9"/></linearGradient>
<linearGradient id="lr59" gradientUnits="userSpaceOnUse" x1="1017.4" y1="0" x2="1657.4" y2="0"><stop offset="0.000" stop-color="#000cff"/><stop offset="0.025" stop-color="#0009ff"/><stop offset="0.050" stop-color="#0006ff"/><stop offset="0.075" stop-color="#0004ff"/><stop offset="0.100" stop-color="#0001ff"/><stop offset="0.125" stop-color="#0000ff"/><stop offset="0.150" stop-color="#0000ff"/><stop offset="0.175" stop-color="#0000ff"/><stop offset="0.200" stop-color="#0000ff"/><stop offset="0.225" stop-color="#0000ff"/><stop offset="0.250" stop-color="#0000ff"/><stop offset="0.275" stop-color="#0000ff"/><stop offset="0.300" stop-color="#0000ff"/><stop offset="0.325" stop-color="#0100ff"/><stop offset="0.350" stop-color="#0b00ff"/><stop offset="0.375" stop-color="#1500ff"/><stop offset="0.400" stop-color="#1f00ff"/><stop offset="0.425" stop-color="#2900ff"/><stop offset="0.450" stop-color="#3300ff"/><stop offset="0.475" stop-color="#3d00ff"/><stop offset="0.500" stop-color="#4700ff"/><stop offset="0.525" stop-color="#5200ff"/><stop offset="0.550" stop-color="#5c00ff"/><stop offset="0.575" stop-color="#6700ff"/><stop offset="0.600" stop-color="#7100ff"/><stop offset="0.625" stop-color="#7c00ff"/><stop offset="0.650" stop-color="#8700ff"/><stop offset="0.675" stop-color="#9100ff"/><stop offset="0.700" stop-color="#9c00ff"/><stop offset="0.725" stop-color="#a700ff"/><stop offset="0.750" stop-color="#b200ff"/><stop offset="0.775" stop-color="#bd00ff"/><stop offset="0.800" stop-color="#c800ff"/><stop offset="0.825" stop-color="#d400ff"/><stop offset="0.850" stop-color="#df00ff"/><stop offset="0.875" stop-color="#ea00ff"/><stop offset="0.900" stop-color="#f600ff"/><stop offset="0.925" stop-color="#ff00fc"/><stop offset="0.950" stop-color="#ff00f1"/><stop offset="0.975" stop-color="#ff00e7"/><stop offset="1.000" stop-color="#ff00de"/></linearGradient>
</defs>
<g clip-path="url(#plotclip)"><g clip-path="url(#locclip)">
<rect x="1017.4" y="130" width="640" height="8.5" fill="url(#lr0)"/>
<rect x="1017.4" y="138" width="640" height="8.5" fill="url(#lr1)"/>
<rect x="1017.4" y="146" width="640" height="8.5" fill="url(#lr2)"/>
<rect x="1017.4" y="154" width="640" height="8.5" fill="url(#lr3)"/>
<rect x="1017.4" y="162" width="640" height="8.5" fill="url(#lr4)"/>
<rect x="1017.4" y="170" width="640" height="8.5" fill="url(#lr5)"/>
<rect x="1017.4" y="178" width="640" height="8.5" fill="url(#lr6)"/>
<rect x="1017.4" y="186" width="640" height="8.5" fill="url(#lr7)"/>
<rect x="1017.4" y="194" width="640" height="8.5" fill="url(#lr8)"/>
<rect x="1017.4" y="202" width="640" height="8.5" fill="url(#lr9)"/>
<rect x="1017.4" y="210" width="640" height="8.5" fill="url(#lr10)"/>
<rect x="1017.4" y="218" width="640" height="8.5" fill="url(#lr11)"/>
<rect x="1017.4" y="226" width="640" height="8.5" fill="url(#lr12)"/>
<rect x="1017.4" y="234" width="640" height="8.5" fill="url(#lr13)"/>
<rect x="1017.4" y="242" width="640" height="8.5" fill="url(#lr14)"/>
<rect x="1017.4" y="250" width="640" height="8.5" fill="url(#lr15)"/>
<rect x="1017.4" y="258" width="640" height="8.5" fill="url(#lr16)"/>
<rect x="1017.4" y="266" width="640" height="8.5" fill="url(#lr17)"/>
<rect x="1017.4" y="274" width="640" height="8.5" fill="url(#lr18)"/>
<rect x="1017.4" y="282" width="640" height="8.5" fill="url(#lr19)"/>
<rect x="1017.4" y="290" width="640" height="8.5" fill="url(#lr20)"/>
<rect x="1017.4" y="298" width="640" height="8.5" fill="url(#lr21)"/>
<rect x="1017.4" y="306" width="640" height="8.5" fill="url(#lr22)"/>
<rect x="1017.4" y="314" width="640" height="8.5" fill="url(#lr23)"/>
<rect x="1017.4" y="322" width="640" height="8.5" fill="url(#lr24)"/>
<rect x="1017.4" y="330" width="640" height="8.5" fill="url(#lr25)"/>
<rect x="1017.4" y="338" width="640" height="8.5" fill="url(#lr26)"/>
<rect x="1017.4" y="346" width="640" height="8.5" fill="url(#lr27)"/>
<rect x="1017.4" y="354" width="640" height="8.5" fill="url(#lr28)"/>
<rect x="1017.4" y="362" width="640" height="8.5" fill="url(#lr29)"/>
<rect x="1017.4" y="370" width="640" height="8.5" fill="url(#lr30)"/>
<rect x="1017.4" y="378" width="640" height="8.5" fill="url(#lr31)"/>
<rect x="1017.4" y="386" width="640" height="8.5" fill="url(#lr32)"/>
<rect x="1017.4" y="394" width="640" height="8.5" fill="url(#lr33)"/>
<rect x="1017.4" y="402" width="640" height="8.5" fill="url(#lr34)"/>
<rect x="1017.4" y="410" width="640" height="8.5" fill="url(#lr35)"/>
<rect x="1017.4" y="418" width="640" height="8.5" fill="url(#lr36)"/>
<rect x="1017.4" y="426" width="640" height="8.5" fill="url(#lr37)"/>
<rect x="1017.4" y="434" width="640" height="8.5" fill="url(#lr38)"/>
<rect x="1017.4" y="442" width="640" height="8.5" fill="url(#lr39)"/>
<rect x="1017.4" y="450" width="640" height="8.5" fill="url(#lr40)"/>
<rect x="1017.4" y="458" width="640" height="8.5" fill="url(#lr41)"/>
<rect x="1017.4" y="466" width="640" height="8.5" fill="url(#lr42)"/>
<rect x="1017.4" y="474" width="640" height="8.5" fill="url(#lr43)"/>
<rect x="1017.4" y="482" width="640" height="8.5" fill="url(#lr44)"/>
<rect x="1017.4" y="490" width="640" height="8.5" fill="url(#lr45)"/>
<rect x="1017.4" y="498" width="640" height="8.5" fill="url(#lr46)"/>
<rect x="1017.4" y="506" width="640" height="8.5" fill="url(#lr47)"/>
<rect x="1017.4" y="514" width="640" height="8.5" fill="url(#lr48)"/>
<rect x="1017.4" y="522" width="640" height="8.5" fill="url(#lr49)"/>
<rect x="1017.4" y="530" width="640" height="8.5" fill="url(#lr50)"/>
<rect x="1017.4" y="538" width="640" height="8.5" fill="url(#lr51)"/>
<rect x="1017.4" y="546" width="640" height="8.5" fill="url(#lr52)"/>
<rect x="1017.4" y="554" width="640" height="8.5" fill="url(#lr53)"/>
<rect x="1017.4" y="562" width="640" height="8.5" fill="url(#lr54)"/>
<rect x="1017.4" y="570" width="640" height="8.5" fill="url(#lr55)"/>
<rect x="1017.4" y="578" width="640" height="8.5" fill="url(#lr56)"/>
<rect x="1017.4" y="586" width="640" height="8.5" fill="url(#lr57)"/>
<rect x="1017.4" y="594" width="640" height="8.5" fill="url(#lr58)"/>
<rect x="1017.4" y="602" width="640" height="8.5" fill="url(#lr59)"/>
<path d="M1291.2,601.0 L1291.1,601.1 L1291.0,601.1 L1290.9,601.2 L1290.7,601.3 L1290.6,601.4 L1290.4,601.4 L1290.2,601.5 L1290.0,601.6 L1289.7,601.6 L1289.5,601.6 L1289.1,601.6 L1288.7,601.6 L1288.2,601.4 L1287.6,601.3 L1286.9,601.1 L1286.3,600.8 L1285.6,600.4 L1284.9,600.0 L1284.3,599.5 L1283.5,598.9 L1282.7,598.3 L1281.8,597.7 L1280.8,596.9 L1279.8,596.1 L1278.6,595.1 L1277.3,594.1 L1275.9,592.9 L1274.4,591.7 L1272.8,590.4 L1271.2,589.0 L1269.4,587.5 L1267.6,585.9 L1265.6,584.3 L1263.6,582.6 L1261.4,580.8 L1259.0,578.8 L1256.4,576.7 L1253.7,574.5 L1250.8,572.1 L1247.7,569.6 L1244.6,567.0 L1241.3,564.3 L1237.8,561.4 L1234.2,558.3 L1230.3,554.9 L1226.2,551.4 L1222.0,547.5 L1217.5,543.3 L1212.9,538.9 L1208.1,534.2 L1203.1,529.0 L1197.5,523.0 L1191.5,516.1 L1185.0,508.4 L1178.1,500.1 L1171.0,491.0 L1163.6,481.2 L1155.8,470.6 L1147.8,459.3 L1139.7,447.3 L1131.3,434.6 L1122.8,421.0 L1114.1,407.1 L1105.7,392.9 L1097.2,378.5 L1088.8,363.6 L1080.6,348.7 L1073.0,334.1 L1065.9,319.6 L1059.2,305.1 L1053.1,291.0 L1047.4,277.6 L1042.3,264.8 L1037.7,252.5 L1033.6,240.8 L1030.1,230.0 L1027.1,220.0 L1024.6,210.9 L1022.7,202.4 L1021.1,194.6 L1020.0,187.5 L1019.2,181.1 L1018.9,175.3 L1018.9,170.0 L1019.3,165.0 L1020.0,160.6 L1021.0,156.7 L1022.3,153.0 L1024.0,149.8 L1025.9,147.0 L1028.1,144.5 L1030.5,142.3 L1033.1,140.5 L1035.9,139.0 L1038.9,137.8 L1042.0,136.8 L1045.3,136.0 L1048.7,135.5 L1052.2,135.1 L1055.8,134.8 L1059.4,134.5 L1063.2,134.4 L1067.0,134.3 L1070.8,134.3 L1074.5,134.3 L1078.3,134.3 L1082.1,134.4 L1086.0,134.5 L1089.9,134.6 L1093.8,134.8 L1097.8,135.0 L1101.9,135.2 L1106.0,135.5 L1110.2,135.8 L1114.5,136.1 L1119.0,136.4 L1123.5,136.8 L1128.0,137.2 L1132.7,137.7 L1137.5,138.1 L1142.5,138.6 L1147.5,139.1 L1152.7,139.6 L1158.0,140.2 L1163.4,140.7 L1169.0,141.3 L1174.7,142.0 L1180.6,142.6 L1186.6,143.3 L1192.8,144.0 L1199.1,144.7 L1205.6,145.4 L1212.3,146.1 L1219.2,146.9 L1226.2,147.7 L1233.4,148.5 L1240.7,149.4 L1248.3,150.2 L1256.0,151.1 L1263.8,152.0 L1271.9,152.9 L1280.1,153.9 L1288.5,154.8 L1297.1,155.8 L1305.8,156.8 L1314.7,157.8 L1323.7,158.9 L1332.9,159.9 L1342.2,161.0 L1351.7,162.1 L1361.2,163.2 L1370.8,164.3 L1380.5,165.4 L1390.3,166.5 L1400.1,167.7 L1409.8,168.8 L1419.3,169.9 L1428.8,171.0 L1438.2,172.0 L1447.5,173.1 L1456.8,174.2 L1466.2,175.2 L1475.3,176.3 L1484.2,177.3 L1492.9,178.3 L1501.3,179.3 L1509.6,180.2 L1517.5,181.1 L1525.3,182.0 L1532.8,182.9 L1540.0,183.7 L1547.0,184.5 L1553.6,185.3 L1560.0,186.0 L1566.1,186.7 L1572.0,187.4 L1577.6,188.0 L1582.9,188.6 L1588.0,189.2 L1593.0,189.8 L1597.7,190.3 L1602.1,190.8 L1606.5,191.3 L1610.6,191.8 L1614.7,192.3 L1618.6,192.7 L1622.3,193.2 L1626.0,193.6 L1629.2,193.9 L1632.2,194.3 L1635.3,194.7 L1638.9,195.1 L1643.3,195.6 L1648.3,196.1 L1653.3,196.7 L1657.5,197.2 L1660.9,197.6 L1663.6,197.9 L1666.1,198.2 L1668.6,198.4 L1671.2,198.8 L1673.9,199.1 L1676.3,199.3 L1678.2,199.6 L1679.6,199.7 L1680.7,199.8 L1681.4,199.9 L1681.9,200.0 Z M1497.9,186.6 L1098.1,143.4 L1204.4,485.3 Z" fill="#000" fill-opacity="0.4" fill-rule="evenodd"/>
</g></g>
<foreignObject x="1017" y="122" width="641" height="493"><canvas id="cv1" width="641" height="493" style="position:static;display:block"></canvas></foreignObject>
<rect x="1017.4" y="122.5" width="639.9" height="492.1" fill="none" stroke="#9a9a9a" stroke-width="1.3"/>
<rect x="1012" y="614.0" width="5.4" height="1.2" fill="#d8d8d8"/>
<text x="1011" y="619.4" font-size="14" fill="#e4e4e4" text-anchor="end">0</text>
<rect x="1012" y="573.07" width="5.4" height="1.2" fill="#d8d8d8"/>
<text x="1011" y="578.47" font-size="14" fill="#e4e4e4" text-anchor="end">0,05</text>
<rect x="1012" y="532.14" width="5.4" height="1.2" fill="#d8d8d8"/>
<text x="1011" y="537.54" font-size="14" fill="#e4e4e4" text-anchor="end">0,1</text>
<rect x="1012" y="491.21" width="5.4" height="1.2" fill="#d8d8d8"/>
<text x="1011" y="496.61" font-size="14" fill="#e4e4e4" text-anchor="end">0,15</text>
<rect x="1012" y="450.28" width="5.4" height="1.2" fill="#d8d8d8"/>
<text x="1011" y="455.68" font-size="14" fill="#e4e4e4" text-anchor="end">0,2</text>
<rect x="1012" y="409.35" width="5.4" height="1.2" fill="#d8d8d8"/>
<text x="1011" y="414.75000000000006" font-size="14" fill="#e4e4e4" text-anchor="end">0,25</text>
<rect x="1012" y="368.41999999999996" width="5.4" height="1.2" fill="#d8d8d8"/>
<text x="1011" y="373.82" font-size="14" fill="#e4e4e4" text-anchor="end">0,3</text>
<rect x="1012" y="327.48999999999995" width="5.4" height="1.2" fill="#d8d8d8"/>
<text x="1011" y="332.89" font-size="14" fill="#e4e4e4" text-anchor="end">0,35</text>
<rect x="1012" y="286.55999999999995" width="5.4" height="1.2" fill="#d8d8d8"/>
<text x="1011" y="291.96" font-size="14" fill="#e4e4e4" text-anchor="end">0,4</text>
<rect x="1012" y="245.63000000000002" width="5.4" height="1.2" fill="#d8d8d8"/>
<text x="1011" y="251.03000000000003" font-size="14" fill="#e4e4e4" text-anchor="end">0,45</text>
<rect x="1012" y="204.70000000000002" width="5.4" height="1.2" fill="#d8d8d8"/>
<text x="1011" y="210.10000000000002" font-size="14" fill="#e4e4e4" text-anchor="end">0,5</text>
<rect x="1012" y="163.76999999999995" width="5.4" height="1.2" fill="#d8d8d8"/>
<text x="1011" y="169.16999999999996" font-size="14" fill="#e4e4e4" text-anchor="end">0,55</text>
<rect x="1016.8" y="614.6" width="1.2" height="6.5" fill="#d8d8d8"/>
<text x="1017.4" y="636" font-size="14" fill="#e4e4e4" text-anchor="middle">0</text>
<rect x="1070.1000000000001" y="614.6" width="1.2" height="6.5" fill="#d8d8d8"/>
<text x="1070.7" y="636" font-size="14" fill="#e4e4e4" text-anchor="middle">0,05</text>
<rect x="1123.4" y="614.6" width="1.2" height="6.5" fill="#d8d8d8"/>
<text x="1124.0" y="636" font-size="14" fill="#e4e4e4" text-anchor="middle">0,1</text>
<rect x="1176.7" y="614.6" width="1.2" height="6.5" fill="#d8d8d8"/>
<text x="1177.3" y="636" font-size="14" fill="#e4e4e4" text-anchor="middle">0,15</text>
<rect x="1230.0" y="614.6" width="1.2" height="6.5" fill="#d8d8d8"/>
<text x="1230.6" y="636" font-size="14" fill="#e4e4e4" text-anchor="middle">0,2</text>
<rect x="1283.3000000000002" y="614.6" width="1.2" height="6.5" fill="#d8d8d8"/>
<text x="1283.9" y="636" font-size="14" fill="#e4e4e4" text-anchor="middle">0,25</text>
<rect x="1336.6000000000001" y="614.6" width="1.2" height="6.5" fill="#d8d8d8"/>
<text x="1337.2" y="636" font-size="14" fill="#e4e4e4" text-anchor="middle">0,3</text>
<rect x="1389.9" y="614.6" width="1.2" height="6.5" fill="#d8d8d8"/>
<text x="1390.5" y="636" font-size="14" fill="#e4e4e4" text-anchor="middle">0,35</text>
<rect x="1443.2" y="614.6" width="1.2" height="6.5" fill="#d8d8d8"/>
<text x="1443.8" y="636" font-size="14" fill="#e4e4e4" text-anchor="middle">0,4</text>
<rect x="1496.5" y="614.6" width="1.2" height="6.5" fill="#d8d8d8"/>
<text x="1497.1" y="636" font-size="14" fill="#e4e4e4" text-anchor="middle">0,45</text>
<rect x="1549.8000000000002" y="614.6" width="1.2" height="6.5" fill="#d8d8d8"/>
<text x="1550.4" y="636" font-size="14" fill="#e4e4e4" text-anchor="middle">0,5</text>
<rect x="1603.1000000000001" y="614.6" width="1.2" height="6.5" fill="#d8d8d8"/>
<text x="1603.7" y="636" font-size="14" fill="#e4e4e4" text-anchor="middle">0,55</text>
<circle cx="1149.9" cy="152.4" r="4.3" fill="#0c9a14" stroke="#111" stroke-width="1.1"/>
<rect x="1091.5" y="134.5" width="14" height="14" fill="none" stroke="#f0f0f0" stroke-width="1.4"/>
<rect x="1227.6" y="149.5" width="14" height="14" fill="none" stroke="#e8e8c8" stroke-width="1.4"/>
<circle cx="1233" cy="160.5" r="4.3" fill="#a6a600" stroke="#111" stroke-width="1.1"/>
<rect x="1124.5" y="239.5" width="14" height="14" fill="none" stroke="#f0f0f0" stroke-width="1.4"/>
<circle cx="1165" cy="243.5" r="4.3" fill="#14a6a6" stroke="#111" stroke-width="1.1"/>
<rect x="1220.6" y="222.5" width="14" height="14" fill="none" stroke="#000" stroke-width="2.2"/>
<circle cx="1226.3" cy="230.8" r="4.3" fill="#909090" stroke="#111" stroke-width="1.1"/>
<circle cx="1227.3" cy="232.5" r="4.3" fill="#ffffff" stroke="#111" stroke-width="1.1"/>
<rect x="1490.5" y="177.9" width="14" height="14" fill="none" stroke="#f4f4f4" stroke-width="1.4"/>
<circle cx="1505.5" cy="183.3" r="3.8" fill="#c80000" stroke="#111" stroke-width="1.1"/>
<rect x="1356.6" y="314.6" width="14" height="14" fill="none" stroke="#f8f0f8" stroke-width="1.4"/>
<circle cx="1340.5" cy="348.5" r="4" fill="#b000b8" stroke="#111" stroke-width="1.1"/>
<rect x="1197.5" y="477.5" width="14" height="14" fill="none" stroke="#f0f0f0" stroke-width="1.4"/>
<circle cx="1202.8" cy="486.1" r="4" fill="#0000c0" stroke="#111" stroke-width="1.1"/>
<rect x="1401.6" y="582.4" width="253" height="27" fill="#2c2c2c"/>
<text x="1403" y="603.2" font-size="18.5" fill="#f4f4f4" textLength="221" lengthAdjust="spacingAndGlyphs">Gamut Coverage:&#160; 75,3%</text>
<text x="13.4" y="715.7" font-size="29.5" fill="#f2f2f2" textLength="220" lengthAdjust="spacingAndGlyphs">Current Reading</text>
<text x="15" y="785" font-size="24.5" fill="#f2f2f2" textLength="101" lengthAdjust="spacingAndGlyphs">x: 0,3086</text>
<text x="171" y="785" font-size="24.5" fill="#f2f2f2" textLength="88" lengthAdjust="spacingAndGlyphs">y: 0,324</text>
<text x="15" y="826.6" font-size="24.5" fill="#f2f2f2" textLength="109" lengthAdjust="spacingAndGlyphs">fL: 174,82</text>
<text x="15" y="866.3" font-size="24.5" fill="#f2f2f2" textLength="157.5" lengthAdjust="spacingAndGlyphs">cd/m&#178;: 598,97</text>
<text x="466.3" y="683.8" font-size="13.5" fill="#d4d4d4" text-anchor="middle" textLength="83" lengthAdjust="spacingAndGlyphs">RGB Balance</text>
<rect x="356.9" y="688.4" width="249.39999999999998" height="181.10000000000002" fill="#232323"/>
<rect x="356.9" y="706.85" width="249.39999999999998" height="1.5" fill="#8c8c8c"/>
<rect x="351.9" y="706.85" width="5" height="1.5" fill="#dcdcdc"/>
<text x="350.9" y="712.6" font-size="14" fill="#e4e4e4" text-anchor="end">104</text>
<rect x="356.9" y="743.0" width="249.39999999999998" height="1.5" fill="#8c8c8c"/>
<rect x="351.9" y="743.0" width="5" height="1.5" fill="#dcdcdc"/>
<text x="350.9" y="748.75" font-size="14" fill="#e4e4e4" text-anchor="end">102</text>
<rect x="356.9" y="779.15" width="249.39999999999998" height="1.5" fill="#8c8c8c"/>
<rect x="351.9" y="779.15" width="5" height="1.5" fill="#dcdcdc"/>
<text x="350.9" y="784.9" font-size="14" fill="#e4e4e4" text-anchor="end">100</text>
<rect x="356.9" y="815.3" width="249.39999999999998" height="1.5" fill="#8c8c8c"/>
<rect x="351.9" y="815.3" width="5" height="1.5" fill="#dcdcdc"/>
<text x="350.9" y="821.05" font-size="14" fill="#e4e4e4" text-anchor="end">98</text>
<rect x="356.9" y="851.45" width="249.39999999999998" height="1.5" fill="#8c8c8c"/>
<rect x="351.9" y="851.45" width="5" height="1.5" fill="#dcdcdc"/>
<text x="350.9" y="857.2" font-size="14" fill="#e4e4e4" text-anchor="end">96</text>
<rect x="356.9" y="688.4" width="249.4" height="181.1" fill="none" stroke="#8c8c8c" stroke-width="1.5"/>
<rect x="356.15" y="869.5" width="1.5" height="6" fill="#dcdcdc"/>
<rect x="605.55" y="869.5" width="1.5" height="6" fill="#dcdcdc"/>
<rect x="381" y="788" width="66" height="81.5" fill="url(#rgbR)" stroke="#000" stroke-width="1.5"/>
<rect x="447.5" y="780.5" width="65.5" height="89" fill="url(#rgbG)" stroke="#000" stroke-width="1.5"/>
<rect x="514" y="748.6" width="65.4" height="121" fill="url(#rgbB)" stroke="#000" stroke-width="1.5"/>
<text x="481.5" y="886" font-size="14" fill="#dcdcdc" text-anchor="middle">100W</text>
<text x="806.3" y="674.8" font-size="14" fill="#d4d4d4" text-anchor="middle" textLength="75.5" lengthAdjust="spacingAndGlyphs">CIE 1931 xy</text>
<defs>
<linearGradient id="xr0" x1="0" y1="0" x2="1" y2="0"><stop offset="0.000" stop-color="#85ffcd"/><stop offset="0.125" stop-color="#96ffcc"/><stop offset="0.250" stop-color="#a8ffcc"/><stop offset="0.375" stop-color="#bbffcb"/><stop offset="0.500" stop-color="#ceffca"/><stop offset="0.625" stop-color="#e1ffc9"/><stop offset="0.750" stop-color="#f6ffc8"/><stop offset="0.875" stop-color="#fff4be"/><stop offset="1.000" stop-color="#ffe1af"/></linearGradient>
<linearGradient id="xr1" x1="0" y1="0" x2="1" y2="0"><stop offset="0.000" stop-color="#87ffd0"/><stop offset="0.125" stop-color="#99ffcf"/><stop offset="0.250" stop-color="#abffcf"/><stop offset="0.375" stop-color="#bdffce"/><stop offset="0.500" stop-color="#d0ffcd"/><stop offset="0.625" stop-color="#e4ffcc"/><stop offset="0.750" stop-color="#f9ffcb"/><stop offset="0.875" stop-color="#fff1bf"/><stop offset="1.000" stop-color="#ffdeb0"/></linearGradient>
<linearGradient id="xr2" x1="0" y1="0" x2="1" y2="0"><stop offset="0.000" stop-color="#89ffd3"/><stop offset="0.125" stop-color="#9bffd2"/><stop offset="0.250" stop-color="#adffd1"/><stop offset="0.375" stop-color="#c0ffd1"/><stop offset="0.500" stop-color="#d3ffd0"/><stop offset="0.625" stop-color="#e7ffcf"/><stop offset="0.750" stop-color="#fcffce"/><stop offset="0.875" stop-color="#ffeebf"/><stop offset="1.000" stop-color="#ffdcb0"/></linearGradient>
<linearGradient id="xr3" x1="0" y1="0" x2="1" y2="0"><stop offset="0.000" stop-color="#8bffd6"/><stop offset="0.125" stop-color="#9dffd5"/><stop offset="0.250" stop-color="#afffd4"/><stop offset="0.375" stop-color="#c2ffd4"/><stop offset="0.500" stop-color="#d6ffd3"/><stop offset="0.625" stop-color="#eaffd2"/><stop offset="0.750" stop-color="#ffffd1"/><stop offset="0.875" stop-color="#ffebc0"/><stop offset="1.000" stop-color="#ffd9b1"/></linearGradient>
<linearGradient id="xr4" x1="0" y1="0" x2="1" y2="0"><stop offset="0.000" stop-color="#8dffd9"/><stop offset="0.125" stop-color="#9fffd8"/><stop offset="0.250" stop-color="#b2ffd7"/><stop offset="0.375" stop-color="#c5ffd7"/><stop offset="0.500" stop-color="#d9ffd6"/><stop offset="0.625" stop-color="#edffd5"/><stop offset="0.750" stop-color="#fffbd2"/><stop offset="0.875" stop-color="#ffe8c1"/><stop offset="1.000" stop-color="#ffd6b1"/></linearGradient>
<linearGradient id="xr5" x1="0" y1="0" x2="1" y2="0"><stop offset="0.000" stop-color="#90ffdb"/><stop offset="0.125" stop-color="#a2ffdb"/><stop offset="0.250" stop-color="#b4ffda"/><stop offset="0.375" stop-color="#c8ffda"/><stop offset="0.500" stop-color="#dcffd9"/><stop offset="0.625" stop-color="#f0ffd8"/><stop offset="0.750" stop-color="#fff8d2"/><stop offset="0.875" stop-color="#ffe5c1"/><stop offset="1.000" stop-color="#ffd4b2"/></linearGradient>
<linearGradient id="xr6" x1="0" y1="0" x2="1" y2="0"><stop offset="0.000" stop-color="#92ffde"/><stop offset="0.125" stop-color="#a4ffde"/><stop offset="0.250" stop-color="#b7ffdd"/><stop offset="0.375" stop-color="#caffdd"/><stop offset="0.500" stop-color="#dfffdc"/><stop offset="0.625" stop-color="#f4ffdc"/><stop offset="0.750" stop-color="#fff5d3"/><stop offset="0.875" stop-color="#ffe2c2"/><stop offset="1.000" stop-color="#ffd1b2"/></linearGradient>
<linearGradient id="xr7" x1="0" y1="0" x2="1" y2="0"><stop offset="0.000" stop-color="#94ffe1"/><stop offset="0.125" stop-color="#a6ffe1"/><stop offset="0.250" stop-color="#b9ffe0"/><stop offset="0.375" stop-color="#cdffe0"/><stop offset="0.500" stop-color="#e2ffdf"/><stop offset="0.625" stop-color="#f7ffdf"/><stop offset="0.750" stop-color="#fff2d3"/><stop offset="0.875" stop-color="#ffdfc2"/><stop offset="1.000" stop-color="#ffceb3"/></linearGradient>
<linearGradient id="xr8" x1="0" y1="0" x2="1" y2="0"><stop offset="0.000" stop-color="#96ffe4"/><stop offset="0.125" stop-color="#a9ffe4"/><stop offset="0.250" stop-color="#bcffe4"/><stop offset="0.375" stop-color="#d0ffe3"/><stop offset="0.500" stop-color="#e5ffe3"/><stop offset="0.625" stop-color="#faffe2"/><stop offset="0.750" stop-color="#ffefd3"/><stop offset="0.875" stop-color="#ffdcc3"/><stop offset="1.000" stop-color="#ffccb3"/></linearGradient>
<linearGradient id="xr9" x1="0" y1="0" x2="1" y2="0"><stop offset="0.000" stop-color="#99ffe8"/><stop offset="0.125" stop-color="#abffe7"/><stop offset="0.250" stop-color="#bfffe7"/><stop offset="0.375" stop-color="#d3ffe6"/><stop offset="0.500" stop-color="#e8ffe6"/><stop offset="0.625" stop-color="#fdffe6"/><stop offset="0.750" stop-color="#ffecd4"/><stop offset="0.875" stop-color="#ffd9c3"/><stop offset="1.000" stop-color="#ffc9b4"/></linearGradient>
<linearGradient id="xr10" x1="0" y1="0" x2="1" y2="0"><stop offset="0.000" stop-color="#9bffeb"/><stop offset="0.125" stop-color="#aeffea"/><stop offset="0.250" stop-color="#c1ffea"/><stop offset="0.375" stop-color="#d6ffea"/><stop offset="0.500" stop-color="#ebffe9"/><stop offset="0.625" stop-color="#fffde7"/><stop offset="0.750" stop-color="#ffe9d4"/><stop offset="0.875" stop-color="#ffd7c3"/><stop offset="1.000" stop-color="#ffc6b5"/></linearGradient>
<linearGradient id="xr11" x1="0" y1="0" x2="1" y2="0"><stop offset="0.000" stop-color="#9dffee"/><stop offset="0.125" stop-color="#b0ffee"/><stop offset="0.250" stop-color="#c4ffed"/><stop offset="0.375" stop-color="#d9ffed"/><stop offset="0.500" stop-color="#eeffed"/><stop offset="0.625" stop-color="#fffae8"/><stop offset="0.750" stop-color="#ffe6d5"/><stop offset="0.875" stop-color="#ffd4c4"/><stop offset="1.000" stop-color="#ffc4b5"/></linearGradient>
<linearGradient id="xr12" x1="0" y1="0" x2="1" y2="0"><stop offset="0.000" stop-color="#a0fff1"/><stop offset="0.125" stop-color="#b3fff1"/><stop offset="0.250" stop-color="#c7fff1"/><stop offset="0.375" stop-color="#dcfff1"/><stop offset="0.500" stop-color="#f1fff0"/><stop offset="0.625" stop-color="#fff7e8"/><stop offset="0.750" stop-color="#ffe3d5"/><stop offset="0.875" stop-color="#ffd1c4"/><stop offset="1.000" stop-color="#ffc1b6"/></linearGradient>
<linearGradient id="xr13" x1="0" y1="0" x2="1" y2="0"><stop offset="0.000" stop-color="#a2fff5"/><stop offset="0.125" stop-color="#b6fff4"/><stop offset="0.250" stop-color="#cafff4"/><stop offset="0.375" stop-color="#dffff4"/><stop offset="0.500" stop-color="#f5fff4"/><stop offset="0.625" stop-color="#fff3e9"/><stop offset="0.750" stop-color="#ffe0d6"/><stop offset="0.875" stop-color="#ffcec5"/><stop offset="1.000" stop-color="#ffbfb6"/></linearGradient>
<linearGradient id="xr14" x1="0" y1="0" x2="1" y2="0"><stop offset="0.000" stop-color="#a4fff8"/><stop offset="0.125" stop-color="#b8fff8"/><stop offset="0.250" stop-color="#cdfff8"/><stop offset="0.375" stop-color="#e2fff8"/><stop offset="0.500" stop-color="#f8fff8"/><stop offset="0.625" stop-color="#fff0e9"/><stop offset="0.750" stop-color="#ffddd6"/><stop offset="0.875" stop-color="#ffccc5"/><stop offset="1.000" stop-color="#ffbcb7"/></linearGradient>
<linearGradient id="xr15" x1="0" y1="0" x2="1" y2="0"><stop offset="0.000" stop-color="#a7fffb"/><stop offset="0.125" stop-color="#bbfffb"/><stop offset="0.250" stop-color="#d0fffb"/><stop offset="0.375" stop-color="#e5fffb"/><stop offset="0.500" stop-color="#fbfffb"/><stop offset="0.625" stop-color="#ffede9"/><stop offset="0.750" stop-color="#ffdad6"/><stop offset="0.875" stop-color="#ffc9c6"/><stop offset="1.000" stop-color="#ffbab7"/></linearGradient>
<linearGradient id="xr16" x1="0" y1="0" x2="1" y2="0"><stop offset="0.000" stop-color="#a9ffff"/><stop offset="0.125" stop-color="#beffff"/><stop offset="0.250" stop-color="#d3ffff"/><stop offset="0.375" stop-color="#e8ffff"/><stop offset="0.500" stop-color="#ffffff"/><stop offset="0.625" stop-color="#ffeaea"/><stop offset="0.750" stop-color="#ffd7d7"/><stop offset="0.875" stop-color="#ffc6c6"/><stop offset="1.000" stop-color="#ffb7b8"/></linearGradient>
<linearGradient id="xr17" x1="0" y1="0" x2="1" y2="0"><stop offset="0.000" stop-color="#aafcff"/><stop offset="0.125" stop-color="#befcff"/><stop offset="0.250" stop-color="#d3fbff"/><stop offset="0.375" stop-color="#e8fbff"/><stop offset="0.500" stop-color="#fffbff"/><stop offset="0.625" stop-color="#ffe6ea"/><stop offset="0.750" stop-color="#ffd4d7"/><stop offset="0.875" stop-color="#ffc4c7"/><stop offset="1.000" stop-color="#ffb5b8"/></linearGradient>
<linearGradient id="xr18" x1="0" y1="0" x2="1" y2="0"><stop offset="0.000" stop-color="#aaf8ff"/><stop offset="0.125" stop-color="#bef8ff"/><stop offset="0.250" stop-color="#d3f8ff"/><stop offset="0.375" stop-color="#e8f8ff"/><stop offset="0.500" stop-color="#fef8ff"/><stop offset="0.625" stop-color="#ffe3ea"/><stop offset="0.750" stop-color="#ffd1d8"/><stop offset="0.875" stop-color="#ffc1c7"/><stop offset="1.000" stop-color="#ffb3b8"/></linearGradient>
<linearGradient id="xr19" x1="0" y1="0" x2="1" y2="0"><stop offset="0.000" stop-color="#aaf5ff"/><stop offset="0.125" stop-color="#bef5ff"/><stop offset="0.250" stop-color="#d3f4ff"/><stop offset="0.375" stop-color="#e8f4ff"/><stop offset="0.500" stop-color="#fef4ff"/><stop offset="0.625" stop-color="#ffe0eb"/><stop offset="0.750" stop-color="#ffced8"/><stop offset="0.875" stop-color="#ffbec8"/><stop offset="1.000" stop-color="#ffb0b9"/></linearGradient>
<linearGradient id="xr20" x1="0" y1="0" x2="1" y2="0"><stop offset="0.000" stop-color="#aaf1ff"/><stop offset="0.125" stop-color="#bef1ff"/><stop offset="0.250" stop-color="#d3f1ff"/><stop offset="0.375" stop-color="#e8f1ff"/><stop offset="0.500" stop-color="#fef0ff"/><stop offset="0.625" stop-color="#ffddeb"/><stop offset="0.750" stop-color="#ffcbd8"/><stop offset="0.875" stop-color="#ffbcc8"/><stop offset="1.000" stop-color="#ffaeb9"/></linearGradient>
<linearGradient id="xr21" x1="0" y1="0" x2="1" y2="0"><stop offset="0.000" stop-color="#abeeff"/><stop offset="0.125" stop-color="#beeeff"/><stop offset="0.250" stop-color="#d3edff"/><stop offset="0.375" stop-color="#e8edff"/><stop offset="0.500" stop-color="#feedff"/><stop offset="0.625" stop-color="#ffdaeb"/><stop offset="0.750" stop-color="#ffc9d9"/><stop offset="0.875" stop-color="#ffb9c9"/><stop offset="1.000" stop-color="#ffabba"/></linearGradient>
<linearGradient id="xr22" x1="0" y1="0" x2="1" y2="0"><stop offset="0.000" stop-color="#abebff"/><stop offset="0.125" stop-color="#beeaff"/><stop offset="0.250" stop-color="#d3eaff"/><stop offset="0.375" stop-color="#e8eaff"/><stop offset="0.500" stop-color="#fde9ff"/><stop offset="0.625" stop-color="#ffd7ec"/><stop offset="0.750" stop-color="#ffc6d9"/><stop offset="0.875" stop-color="#ffb7c9"/><stop offset="1.000" stop-color="#ffa9ba"/></linearGradient>
<linearGradient id="xr23" x1="0" y1="0" x2="1" y2="0"><stop offset="0.000" stop-color="#abe8ff"/><stop offset="0.125" stop-color="#bfe7ff"/><stop offset="0.250" stop-color="#d3e7ff"/><stop offset="0.375" stop-color="#e7e6ff"/><stop offset="0.500" stop-color="#fde6ff"/><stop offset="0.625" stop-color="#ffd4ec"/><stop offset="0.750" stop-color="#ffc3da"/><stop offset="0.875" stop-color="#ffb4c9"/><stop offset="1.000" stop-color="#ffa7bb"/></linearGradient>
<linearGradient id="xr24" x1="0" y1="0" x2="1" y2="0"><stop offset="0.000" stop-color="#abe4ff"/><stop offset="0.125" stop-color="#bfe4ff"/><stop offset="0.250" stop-color="#d3e3ff"/><stop offset="0.375" stop-color="#e7e3ff"/><stop offset="0.500" stop-color="#fde2ff"/><stop offset="0.625" stop-color="#ffd1ec"/><stop offset="0.750" stop-color="#ffc0da"/><stop offset="0.875" stop-color="#ffb2ca"/><stop offset="1.000" stop-color="#ffa4bb"/></linearGradient>
<linearGradient id="xr25" x1="0" y1="0" x2="1" y2="0"><stop offset="0.000" stop-color="#ace1ff"/><stop offset="0.125" stop-color="#bfe1ff"/><stop offset="0.250" stop-color="#d3e0ff"/><stop offset="0.375" stop-color="#e7dfff"/><stop offset="0.500" stop-color="#fddfff"/><stop offset="0.625" stop-color="#ffceed"/><stop offset="0.750" stop-color="#ffbeda"/><stop offset="0.875" stop-color="#ffafca"/><stop offset="1.000" stop-color="#ffa2bc"/></linearGradient>
<linearGradient id="xr26" x1="0" y1="0" x2="1" y2="0"><stop offset="0.000" stop-color="#acdeff"/><stop offset="0.125" stop-color="#bfddff"/><stop offset="0.250" stop-color="#d3ddff"/><stop offset="0.375" stop-color="#e7dcff"/><stop offset="0.500" stop-color="#fcdbff"/><stop offset="0.625" stop-color="#ffcbed"/><stop offset="0.750" stop-color="#ffbbdb"/><stop offset="0.875" stop-color="#ffadcb"/><stop offset="1.000" stop-color="#ffa0bc"/></linearGradient>
<linearGradient id="xr27" x1="0" y1="0" x2="1" y2="0"><stop offset="0.000" stop-color="#acdbff"/><stop offset="0.125" stop-color="#bfdaff"/><stop offset="0.250" stop-color="#d3d9ff"/><stop offset="0.375" stop-color="#e7d9ff"/><stop offset="0.500" stop-color="#fcd8ff"/><stop offset="0.625" stop-color="#ffc8ed"/><stop offset="0.750" stop-color="#ffb8db"/><stop offset="0.875" stop-color="#ffaacb"/><stop offset="1.000" stop-color="#ff9ebd"/></linearGradient>
<linearGradient id="xr28" x1="0" y1="0" x2="1" y2="0"><stop offset="0.000" stop-color="#acd8ff"/><stop offset="0.125" stop-color="#bfd7ff"/><stop offset="0.250" stop-color="#d3d6ff"/><stop offset="0.375" stop-color="#e7d6ff"/><stop offset="0.500" stop-color="#fcd5ff"/><stop offset="0.625" stop-color="#ffc6ee"/><stop offset="0.750" stop-color="#ffb6dc"/><stop offset="0.875" stop-color="#ffa8cb"/><stop offset="1.000" stop-color="#ff9bbd"/></linearGradient>
<linearGradient id="xr29" x1="0" y1="0" x2="1" y2="0"><stop offset="0.000" stop-color="#acd5ff"/><stop offset="0.125" stop-color="#bfd4ff"/><stop offset="0.250" stop-color="#d3d3ff"/><stop offset="0.375" stop-color="#e7d2ff"/><stop offset="0.500" stop-color="#fcd1ff"/><stop offset="0.625" stop-color="#ffc3ee"/><stop offset="0.750" stop-color="#ffb3dc"/><stop offset="0.875" stop-color="#ffa5cc"/><stop offset="1.000" stop-color="#ff99be"/></linearGradient>
<linearGradient id="xr30" x1="0" y1="0" x2="1" y2="0"><stop offset="0.000" stop-color="#add2ff"/><stop offset="0.125" stop-color="#bfd1ff"/><stop offset="0.250" stop-color="#d3d0ff"/><stop offset="0.375" stop-color="#e7cfff"/><stop offset="0.500" stop-color="#fbceff"/><stop offset="0.625" stop-color="#ffc0ee"/><stop offset="0.750" stop-color="#ffb1dc"/><stop offset="0.875" stop-color="#ffa3cc"/><stop offset="1.000" stop-color="#ff97be"/></linearGradient>
<linearGradient id="xr31" x1="0" y1="0" x2="1" y2="0"><stop offset="0.000" stop-color="#adcfff"/><stop offset="0.125" stop-color="#bfceff"/><stop offset="0.250" stop-color="#d3cdff"/><stop offset="0.375" stop-color="#e7ccff"/><stop offset="0.500" stop-color="#fbcbff"/><stop offset="0.625" stop-color="#ffbdef"/><stop offset="0.750" stop-color="#ffaedd"/><stop offset="0.875" stop-color="#ffa1cd"/><stop offset="1.000" stop-color="#ff95be"/></linearGradient>
<linearGradient id="xr32" x1="0" y1="0" x2="1" y2="0"><stop offset="0.000" stop-color="#adccff"/><stop offset="0.125" stop-color="#bfcbff"/><stop offset="0.250" stop-color="#d3caff"/><stop offset="0.375" stop-color="#e6c9ff"/><stop offset="0.500" stop-color="#fbc8ff"/><stop offset="0.625" stop-color="#ffbaef"/><stop offset="0.750" stop-color="#ffabdd"/><stop offset="0.875" stop-color="#ff9ecd"/><stop offset="1.000" stop-color="#ff92bf"/></linearGradient>
<linearGradient id="xr33" x1="0" y1="0" x2="1" y2="0"><stop offset="0.000" stop-color="#adc9ff"/><stop offset="0.125" stop-color="#c0c8ff"/><stop offset="0.250" stop-color="#d3c7ff"/><stop offset="0.375" stop-color="#e6c6ff"/><stop offset="0.500" stop-color="#fbc5ff"/><stop offset="0.625" stop-color="#ffb8ef"/><stop offset="0.750" stop-color="#ffa9dd"/><stop offset="0.875" stop-color="#ff9cce"/><stop offset="1.000" stop-color="#ff90bf"/></linearGradient>
</defs>
<rect x="636.1" y="680.2" width="341.8" height="6.5" fill="url(#xr0)"/>
<rect x="636.1" y="686.2" width="341.8" height="6.5" fill="url(#xr1)"/>
<rect x="636.1" y="692.2" width="341.8" height="6.5" fill="url(#xr2)"/>
<rect x="636.1" y="698.2" width="341.8" height="6.5" fill="url(#xr3)"/>
<rect x="636.1" y="704.2" width="341.8" height="6.5" fill="url(#xr4)"/>
<rect x="636.1" y="710.2" width="341.8" height="6.5" fill="url(#xr5)"/>
<rect x="636.1" y="716.2" width="341.8" height="6.5" fill="url(#xr6)"/>
<rect x="636.1" y="722.2" width="341.8" height="6.5" fill="url(#xr7)"/>
<rect x="636.1" y="728.2" width="341.8" height="6.5" fill="url(#xr8)"/>
<rect x="636.1" y="734.2" width="341.8" height="6.5" fill="url(#xr9)"/>
<rect x="636.1" y="740.2" width="341.8" height="6.5" fill="url(#xr10)"/>
<rect x="636.1" y="746.2" width="341.8" height="6.5" fill="url(#xr11)"/>
<rect x="636.1" y="752.2" width="341.8" height="6.5" fill="url(#xr12)"/>
<rect x="636.1" y="758.2" width="341.8" height="6.5" fill="url(#xr13)"/>
<rect x="636.1" y="764.2" width="341.8" height="6.5" fill="url(#xr14)"/>
<rect x="636.1" y="770.2" width="341.8" height="6.5" fill="url(#xr15)"/>
<rect x="636.1" y="776.2" width="341.8" height="6.5" fill="url(#xr16)"/>
<rect x="636.1" y="782.2" width="341.8" height="6.5" fill="url(#xr17)"/>
<rect x="636.1" y="788.2" width="341.8" height="6.5" fill="url(#xr18)"/>
<rect x="636.1" y="794.2" width="341.8" height="6.5" fill="url(#xr19)"/>
<rect x="636.1" y="800.2" width="341.8" height="6.5" fill="url(#xr20)"/>
<rect x="636.1" y="806.2" width="341.8" height="6.5" fill="url(#xr21)"/>
<rect x="636.1" y="812.2" width="341.8" height="6.5" fill="url(#xr22)"/>
<rect x="636.1" y="818.2" width="341.8" height="6.5" fill="url(#xr23)"/>
<rect x="636.1" y="824.2" width="341.8" height="6.5" fill="url(#xr24)"/>
<rect x="636.1" y="830.2" width="341.8" height="6.5" fill="url(#xr25)"/>
<rect x="636.1" y="836.2" width="341.8" height="6.5" fill="url(#xr26)"/>
<rect x="636.1" y="842.2" width="341.8" height="6.5" fill="url(#xr27)"/>
<rect x="636.1" y="848.2" width="341.8" height="6.5" fill="url(#xr28)"/>
<rect x="636.1" y="854.2" width="341.8" height="6.5" fill="url(#xr29)"/>
<rect x="636.1" y="860.2" width="341.8" height="6.5" fill="url(#xr30)"/>
<rect x="636.1" y="866.2" width="341.8" height="6.5" fill="url(#xr31)"/>
<rect x="636.1" y="872.2" width="341.8" height="6.2" fill="url(#xr32)"/>
<rect x="636.1" y="878.2" width="341.8" height="0.2" fill="url(#xr33)"/>
<foreignObject x="636" y="680" width="342" height="199"><canvas id="cv2" width="342" height="199" style="position:static;display:block"></canvas></foreignObject>
<rect x="636.1" y="680.2" width="341.8" height="198.2" fill="none" stroke="#9a9a9a" stroke-width="1.2"/>
<rect x="799.5" y="771.5" width="14" height="14" fill="none" stroke="#000" stroke-width="1.7"/>
<circle cx="779.3" cy="793.7" r="4.2" fill="#a8a8a8" stroke="#333" stroke-width="0.9"/>
<circle cx="778" cy="798.6" r="4.6" fill="#ffffff" stroke="#222" stroke-width="1.1"/>
<rect x="994.5" y="664" width="652.5" height="224" fill="#0e0e0e"/>
<rect x="996.0" y="665.5" width="633.0" height="33.299999999999955" fill="url(#hdr)"/>
<defs><clipPath id="tclip"><rect x="996" y="698.8" width="632.4" height="170.4"/></clipPath><clipPath id="hclip"><rect x="996" y="665" width="632.4" height="34"/></clipPath></defs>
<text x="1127.4" y="689" font-size="17" fill="#f0f0f0" text-anchor="middle" textLength="41.5" lengthAdjust="spacingAndGlyphs">White</text>
<text x="1200.2" y="689" font-size="17" fill="#f0f0f0" text-anchor="middle" textLength="26" lengthAdjust="spacingAndGlyphs">Red</text>
<text x="1273.3" y="689" font-size="17" fill="#f0f0f0" text-anchor="middle" textLength="41.9" lengthAdjust="spacingAndGlyphs">Green</text>
<text x="1346.6" y="689" font-size="17" fill="#f0f0f0" text-anchor="middle" textLength="29.7" lengthAdjust="spacingAndGlyphs">Blue</text>
<text x="1419.3" y="689" font-size="17" fill="#f0f0f0" text-anchor="middle" textLength="33.3" lengthAdjust="spacingAndGlyphs">Cyan</text>
<text x="1497.3" y="689" font-size="17" fill="#f0f0f0" text-anchor="middle" textLength="61.4" lengthAdjust="spacingAndGlyphs">Magenta</text>
<text x="1574.9" y="689" font-size="17" fill="#f0f0f0" text-anchor="middle" textLength="43.9" lengthAdjust="spacingAndGlyphs">Yellow</text>
<g clip-path="url(#tclip)">
<rect x="996" y="698.8" width="632.4" height="31.1" fill="#444444"/>
<rect x="996" y="728.4" width="632.4" height="1.5" fill="#3a3a3a"/>
<text x="1008" y="721.8" font-size="19.5" fill="#f4f4f4" font-weight="bold" textLength="63.6" lengthAdjust="spacingAndGlyphs">x: CIE31</text>
<text x="1092.8" y="721.8" font-size="19.5" fill="#f0f0f0" textLength="50.0" lengthAdjust="spacingAndGlyphs">0,3089</text>
<text x="1170.6" y="721.8" font-size="19.5" fill="#f0f0f0" textLength="50.0" lengthAdjust="spacingAndGlyphs">0,6495</text>
<text x="1238.8" y="721.8" font-size="19.5" fill="#f0f0f0" textLength="50.0" lengthAdjust="spacingAndGlyphs">0,2998</text>
<text x="1316.3" y="721.8" font-size="19.5" fill="#f0f0f0" textLength="50.0" lengthAdjust="spacingAndGlyphs">0,1491</text>
<text x="1385" y="721.8" font-size="19.5" fill="#f0f0f0" textLength="50.0" lengthAdjust="spacingAndGlyphs">0,2221</text>
<text x="1462.6" y="721.8" font-size="19.5" fill="#f0f0f0" textLength="50.0" lengthAdjust="spacingAndGlyphs">0,3156</text>
<text x="1540.4" y="721.8" font-size="19.5" fill="#f0f0f0" textLength="50.0" lengthAdjust="spacingAndGlyphs">0,4186</text>
<text x="1618" y="721.8" font-size="19.5" fill="#f0f0f0" textLength="50.0" lengthAdjust="spacingAndGlyphs">0,3127</text>
<rect x="996" y="729.9" width="632.4" height="31.1" fill="#808080"/>
<text x="1008" y="752.9" font-size="19.5" fill="#f4f4f4" font-weight="bold" textLength="63.6" lengthAdjust="spacingAndGlyphs">y: CIE31</text>
<text x="1092.8" y="752.9" font-size="19.5" fill="#f0f0f0" textLength="50.0" lengthAdjust="spacingAndGlyphs">0,3252</text>
<text x="1170.6" y="752.9" font-size="19.5" fill="#f0f0f0" textLength="50.0" lengthAdjust="spacingAndGlyphs">0,3313</text>
<text x="1238.8" y="752.9" font-size="19.5" fill="#f0f0f0" textLength="50.0" lengthAdjust="spacingAndGlyphs">0,6041</text>
<text x="1316.3" y="752.9" font-size="19.5" fill="#f0f0f0" textLength="50.0" lengthAdjust="spacingAndGlyphs">0,0591</text>
<text x="1385" y="752.9" font-size="19.5" fill="#f0f0f0" textLength="50.0" lengthAdjust="spacingAndGlyphs">0,3232</text>
<text x="1462.6" y="752.9" font-size="19.5" fill="#f0f0f0" textLength="50.0" lengthAdjust="spacingAndGlyphs">0,1497</text>
<text x="1540.4" y="752.9" font-size="19.5" fill="#f0f0f0" textLength="50.0" lengthAdjust="spacingAndGlyphs">0,5075</text>
<text x="1618" y="752.9" font-size="19.5" fill="#f0f0f0" textLength="50.0" lengthAdjust="spacingAndGlyphs">0,3290</text>
<rect x="996" y="761" width="632.4" height="31.1" fill="#444444"/>
<rect x="996" y="790.6" width="632.4" height="1.5" fill="#3a3a3a"/>
<text x="1008" y="784" font-size="19.5" fill="#f4f4f4" font-weight="bold" textLength="10" lengthAdjust="spacingAndGlyphs">Y</text>
<text x="1092.8" y="784" font-size="19.5" fill="#f0f0f0" textLength="68.39999999999999" lengthAdjust="spacingAndGlyphs">314,7324</text>
<text x="1170.6" y="784" font-size="19.5" fill="#f0f0f0" textLength="59.199999999999996" lengthAdjust="spacingAndGlyphs">65,8086</text>
<text x="1238.8" y="784" font-size="19.5" fill="#f0f0f0" textLength="68.39999999999999" lengthAdjust="spacingAndGlyphs">225,8282</text>
<text x="1316.3" y="784" font-size="19.5" fill="#f0f0f0" textLength="59.199999999999996" lengthAdjust="spacingAndGlyphs">22,7995</text>
<text x="1385" y="784" font-size="19.5" fill="#f0f0f0" textLength="68.39999999999999" lengthAdjust="spacingAndGlyphs">245,5225</text>
<text x="1462.6" y="784" font-size="19.5" fill="#f0f0f0" textLength="59.199999999999996" lengthAdjust="spacingAndGlyphs">88,3694</text>
<text x="1540.4" y="784" font-size="19.5" fill="#f0f0f0" textLength="68.39999999999999" lengthAdjust="spacingAndGlyphs">293,4363</text>
<text x="1618" y="784" font-size="19.5" fill="#f0f0f0" textLength="68.39999999999999" lengthAdjust="spacingAndGlyphs">598,9700</text>
<rect x="996" y="792" width="632.4" height="31.1" fill="#808080"/>
<text x="1008" y="815" font-size="19.5" fill="#f4f4f4" font-weight="bold" textLength="67" lengthAdjust="spacingAndGlyphs">Target Y</text>
<text x="1092.8" y="815" font-size="19.5" fill="#f0f0f0" textLength="68.39999999999999" lengthAdjust="spacingAndGlyphs">317,2378</text>
<text x="1170.6" y="815" font-size="19.5" fill="#f0f0f0" textLength="59.199999999999996" lengthAdjust="spacingAndGlyphs">94,3341</text>
<text x="1238.8" y="815" font-size="19.5" fill="#f0f0f0" textLength="68.39999999999999" lengthAdjust="spacingAndGlyphs">199,0206</text>
<text x="1316.3" y="815" font-size="19.5" fill="#f0f0f0" textLength="59.199999999999996" lengthAdjust="spacingAndGlyphs">23,8832</text>
<text x="1385" y="815" font-size="19.5" fill="#f0f0f0" textLength="68.39999999999999" lengthAdjust="spacingAndGlyphs">222,9037</text>
<text x="1462.6" y="815" font-size="19.5" fill="#f0f0f0" textLength="68.39999999999999" lengthAdjust="spacingAndGlyphs">118,2172</text>
<text x="1540.4" y="815" font-size="19.5" fill="#f0f0f0" textLength="68.39999999999999" lengthAdjust="spacingAndGlyphs">293,3547</text>
<text x="1618" y="815" font-size="19.5" fill="#f0f0f0" textLength="68.39999999999999" lengthAdjust="spacingAndGlyphs">598,9700</text>
<rect x="996" y="823" width="632.4" height="31.1" fill="#444444"/>
<rect x="996" y="852.6" width="632.4" height="1.5" fill="#3a3a3a"/>
<text x="1008" y="846" font-size="19.5" fill="#f4f4f4" font-weight="bold" textLength="65.9" lengthAdjust="spacingAndGlyphs">&#916;E 2000</text>
<text x="1092.8" y="846" font-size="19.5" fill="#f0f0f0" textLength="50.0" lengthAdjust="spacingAndGlyphs">1,7194</text>
<text x="1170.6" y="846" font-size="19.5" fill="#f0f0f0" textLength="50.0" lengthAdjust="spacingAndGlyphs">6,8616</text>
<text x="1238.8" y="846" font-size="19.5" fill="#f0f0f0" textLength="50.0" lengthAdjust="spacingAndGlyphs">8,9985</text>
<text x="1316.3" y="846" font-size="19.5" fill="#f0f0f0" textLength="50.0" lengthAdjust="spacingAndGlyphs">0,4471</text>
<text x="1385" y="846" font-size="19.5" fill="#f0f0f0" textLength="50.0" lengthAdjust="spacingAndGlyphs">8,0438</text>
<text x="1462.6" y="846" font-size="19.5" fill="#f0f0f0" textLength="50.0" lengthAdjust="spacingAndGlyphs">7,2574</text>
<text x="1540.4" y="846" font-size="19.5" fill="#f0f0f0" textLength="50.0" lengthAdjust="spacingAndGlyphs">1,8998</text>
<text x="1618" y="846" font-size="19.5" fill="#f0f0f0" textLength="50.0" lengthAdjust="spacingAndGlyphs">2,1200</text>
<rect x="996" y="853.9" width="632.4" height="31.1" fill="#808080"/>
<text x="1008" y="876.9" font-size="19.5" fill="#f4f4f4" font-weight="bold" textLength="62" lengthAdjust="spacingAndGlyphs">&#916;E ITP</text>
<text x="1092.8" y="876.9" font-size="19.5" fill="#f0f0f0" textLength="50.0" lengthAdjust="spacingAndGlyphs">2,3744</text>
<text x="1170.6" y="876.9" font-size="19.5" fill="#f0f0f0" textLength="59.199999999999996" lengthAdjust="spacingAndGlyphs">26,1850</text>
<text x="1238.8" y="876.9" font-size="19.5" fill="#f0f0f0" textLength="59.199999999999996" lengthAdjust="spacingAndGlyphs">43,1874</text>
<text x="1316.3" y="876.9" font-size="19.5" fill="#f0f0f0" textLength="50.0" lengthAdjust="spacingAndGlyphs">3,3107</text>
<text x="1385" y="876.9" font-size="19.5" fill="#f0f0f0" textLength="59.199999999999996" lengthAdjust="spacingAndGlyphs">35,4252</text>
<text x="1462.6" y="876.9" font-size="19.5" fill="#f0f0f0" textLength="59.199999999999996" lengthAdjust="spacingAndGlyphs">32,1326</text>
<text x="1540.4" y="876.9" font-size="19.5" fill="#f0f0f0" textLength="59.199999999999996" lengthAdjust="spacingAndGlyphs">10,6710</text>
<text x="1618" y="876.9" font-size="19.5" fill="#f0f0f0" textLength="50.0" lengthAdjust="spacingAndGlyphs">2,9000</text>
</g>
<rect x="1628.4" y="665.5" width="17.6" height="221" fill="#3a3a3a"/>
<rect x="1630.5" y="701" width="13.5" height="16" rx="3" fill="#5a5a5a" stroke="#6e6e6e" stroke-width="1"/>
<path d="M1632.5,712 L1642,712 L1637.2,706 Z" fill="#2e2e2e"/>
<rect x="1630.5" y="721" width="13.5" height="105.5" rx="6" fill="#303030"/>
<rect x="1630.5" y="851" width="13.5" height="16" rx="3" fill="#5a5a5a" stroke="#6e6e6e" stroke-width="1"/>
<path d="M1632.5,856 L1642,856 L1637.2,862 Z" fill="#2e2e2e"/>
<rect x="996" y="869.5" width="632.4" height="17.5" fill="#3a3a3a"/>
<rect x="998" y="871" width="15" height="14.5" rx="3" fill="#5a5a5a" stroke="#6e6e6e" stroke-width="1"/>
<path d="M1008,873.5 L1008,883 L1002.5,878.2 Z" fill="#2e2e2e"/>
<rect x="1013.5" y="871.5" width="541.5" height="14" rx="7" fill="#303030"/>
<rect x="1613" y="871" width="15" height="14.5" rx="3" fill="#5a5a5a" stroke="#6e6e6e" stroke-width="1"/>
<path d="M1618,873.5 L1618,883 L1623.5,878.2 Z" fill="#2e2e2e"/>
<defs><linearGradient id="swsh" x1="0" y1="0" x2="0" y2="1"><stop offset="0" stop-color="#000" stop-opacity="0.2"/><stop offset="0.06" stop-color="#000" stop-opacity="0"/></linearGradient></defs>
<rect x="1" y="932.6" width="155" height="82" rx="5.5" fill="url(#btg)"/>
<rect x="6" y="939" width="143.6" height="45.2" rx="5" fill="#c0c0c0"/>
<rect x="6" y="939" width="143.6" height="45.2" rx="5" fill="url(#swsh)"/>
<text x="78.5" y="1003" font-size="13.5" fill="#2a2a2c" text-anchor="middle" stroke="#2a2a2c" stroke-width="0.55">White</text>
<rect x="158.5" y="932.6" width="155" height="82" rx="5.5" fill="url(#btg)"/>
<rect x="163.5" y="939" width="143.6" height="45.2" rx="5" fill="#c00000"/>
<rect x="163.5" y="939" width="143.6" height="45.2" rx="5" fill="url(#swsh)"/>
<text x="236.0" y="1003" font-size="13.5" fill="#2a2a2c" text-anchor="middle" stroke="#2a2a2c" stroke-width="0.55">Red</text>
<rect x="316" y="932.6" width="155" height="82" rx="5.5" fill="url(#btg)"/>
<rect x="321" y="939" width="143.6" height="45.2" rx="5" fill="#00c000"/>
<rect x="321" y="939" width="143.6" height="45.2" rx="5" fill="url(#swsh)"/>
<text x="393.5" y="1003" font-size="13.5" fill="#2a2a2c" text-anchor="middle" stroke="#2a2a2c" stroke-width="0.55">Green</text>
<rect x="474" y="932.6" width="155" height="82" rx="5.5" fill="url(#btg)"/>
<rect x="479" y="939" width="143.6" height="45.2" rx="5" fill="#0000c0"/>
<rect x="479" y="939" width="143.6" height="45.2" rx="5" fill="url(#swsh)"/>
<text x="551.5" y="1003" font-size="13.5" fill="#2a2a2c" text-anchor="middle" stroke="#2a2a2c" stroke-width="0.55">Blue</text>
<rect x="631.7" y="932.6" width="155" height="82" rx="5.5" fill="url(#btg)"/>
<rect x="636.7" y="939" width="143.6" height="45.2" rx="5" fill="#00c0c0"/>
<rect x="636.7" y="939" width="143.6" height="45.2" rx="5" fill="url(#swsh)"/>
<text x="709.2" y="1003" font-size="13.5" fill="#2a2a2c" text-anchor="middle" stroke="#2a2a2c" stroke-width="0.55">Cyan</text>
<rect x="789.5" y="932.6" width="155" height="82" rx="5.5" fill="url(#btg)"/>
<rect x="794.5" y="939" width="143.6" height="45.2" rx="5" fill="#c000c0"/>
<rect x="794.5" y="939" width="143.6" height="45.2" rx="5" fill="url(#swsh)"/>
<text x="867.0" y="1003" font-size="13.5" fill="#2a2a2c" text-anchor="middle" stroke="#2a2a2c" stroke-width="0.55">Magenta</text>
<rect x="948" y="932.6" width="155" height="82" rx="5.5" fill="url(#btg)"/>
<rect x="953" y="939" width="143.6" height="45.2" rx="5" fill="#c0c000"/>
<rect x="953" y="939" width="143.6" height="45.2" rx="5" fill="url(#swsh)"/>
<text x="1025.5" y="1003" font-size="13.5" fill="#2a2a2c" text-anchor="middle" stroke="#2a2a2c" stroke-width="0.55">Yellow</text>
<rect x="1106" y="933.2" width="155.3" height="82" rx="5.5" fill="#2d2d2d"/>
<rect x="1106" y="933.2" width="155.3" height="5" rx="2" fill="#1f1f1f"/>
<rect x="1112.5" y="938.7" width="142.8" height="45.4" rx="5" fill="#ffffff"/>
<text x="1184" y="1002.7" font-size="13.5" fill="#ffffff" text-anchor="middle" font-weight="bold" textLength="35" lengthAdjust="spacingAndGlyphs">100W</text>
<defs><linearGradient id="upg" x1="0" y1="0" x2="0" y2="1"><stop offset="0" stop-color="#acacac"/><stop offset="1" stop-color="#848484"/></linearGradient>
<linearGradient id="stg" x1="0" y1="0" x2="0" y2="1"><stop offset="0" stop-color="#9c9c9c"/><stop offset="1" stop-color="#5c5c5c"/></linearGradient>
<linearGradient id="rowg" x1="0" y1="0" x2="0" y2="1"><stop offset="0" stop-color="#b8b8b8"/><stop offset="0.5" stop-color="#909090"/><stop offset="1" stop-color="#6c6c6c"/></linearGradient>
<linearGradient id="circg" x1="0" y1="0" x2="0" y2="1"><stop offset="0" stop-color="#6e6e6e"/><stop offset="1" stop-color="#a8a8a8"/></linearGradient></defs>
<rect x="1265.4" y="932.7" width="59.6" height="84" rx="5" fill="url(#stg)"/>
<path d="M1265.4,955.5 V937.7 Q1265.4,932.7 1270.4,932.7 H1320 Q1325,932.7 1325,937.7 V955.5 Z" fill="url(#upg)"/>
<rect x="1265.4" y="954.6" width="59.6" height="1.6" fill="#555"/>
<circle cx="1295.3" cy="944" r="9" fill="url(#circg)"/>
<path d="M1290.5,946.5 L1300,946.5 L1295.3,941.2 Z" fill="#303030"/>
<rect x="1276.5" y="964.5" width="37" height="36.5" rx="5" fill="#a8a8a8" stroke="#111" stroke-width="3"/>
<rect x="1278" y="983" width="34" height="16.5" fill="#707070"/>
<rect x="1286.8" y="974" width="17.2" height="17.2" fill="#050505"/>
<rect x="1326" y="932.2" width="58.7" height="37.8" fill="url(#rowg)"/>
<rect x="1385.5" y="932.2" width="55.0" height="37.8" fill="url(#rowg)"/>
<rect x="1441.3" y="932.2" width="55.5" height="37.8" fill="url(#rowg)"/>
<rect x="1497.6" y="932.2" width="55.9" height="37.8" fill="url(#rowg)"/>
<rect x="1554.3" y="932.2" width="54.7" height="37.8" fill="url(#rowg)"/>
<circle cx="1355.4" cy="950.6" r="12.3" fill="url(#circg)"/>
<circle cx="1412.9" cy="950.6" r="12.3" fill="url(#circg)"/>
<circle cx="1469.2" cy="950.6" r="12.3" fill="url(#circg)"/>
<circle cx="1525.4" cy="950.6" r="12.3" fill="url(#circg)"/>
<circle cx="1581.7" cy="950.6" r="12.3" fill="url(#circg)"/>
<rect x="1350.4" y="945.6" width="10" height="10" fill="#2a2a2a"/>
<path d="M1409,944 L1418.5,950.6 L1409,957.2 Z" fill="#2a2a2a"/>
<path d="M1463.5,944.5 h-2.5 v12.5 h2.5 M1475,944.5 h2.5 v12.5 h-2.5" fill="none" stroke="#2a2a2a" stroke-width="2"/>
<path d="M1465.5,950.7 h7.5" stroke="#2a2a2a" stroke-width="1.4" stroke-dasharray="1.5 1"/>
<path d="M1525.4,950.6 C1522,946 1517.5,946 1517.5,950.6 C1517.5,955.2 1522,955.2 1525.4,950.6 C1528.8,946 1533.3,946 1533.3,950.6 C1533.3,955.2 1528.8,955.2 1525.4,950.6 Z" fill="none" stroke="#2a2a2a" stroke-width="2.2"/>
<path d="M1576.5,948 A5.5,5.5 0 0 1 1587,947.5 M1587,953.5 A5.5,5.5 0 0 1 1576.5,954" fill="none" stroke="#2a2a2a" stroke-width="2.2"/>
<path d="M1588.5,943.5 L1588.5,949.5 L1582.8,948.5 Z M1575,957.5 L1575,951.5 L1580.6,952.5 Z" fill="#2a2a2a"/>
<rect x="1326" y="971" width="170.8" height="45" fill="url(#rowg)"/>
<rect x="1497.6" y="971" width="175" height="45" fill="url(#rowg)"/>
<circle cx="1365.2" cy="990.9" r="12.3" fill="url(#circg)"/>
<circle cx="1631.3" cy="990.9" r="12.3" fill="url(#circg)"/>
<path d="M1365,985.5 L1360,991 L1365,996.5 M1370,985.5 L1365,991 L1370,996.5" fill="none" stroke="#333" stroke-width="1.8"/>
<path d="M1626.5,985.5 L1631.5,991 L1626.5,996.5 M1631.5,985.5 L1636.5,991 L1631.5,996.5" fill="none" stroke="#333" stroke-width="1.8"/>
<text x="1398.2" y="999.5" font-size="25" fill="#363636" textLength="63.6" lengthAdjust="spacingAndGlyphs" stroke="#363636" stroke-width="1.1">Back</text>
<text x="1532" y="999.5" font-size="25" fill="#363636" textLength="65" lengthAdjust="spacingAndGlyphs" stroke="#363636" stroke-width="1.1">Next</text>
<g transform="translate(1637.3,950.3)" stroke="#3a0000" stroke-opacity="0.55" stroke-width="9" stroke-linecap="round"><path d="M0,-13 V13 M-11.26,-6.5 L11.26,6.5 M-11.26,6.5 L11.26,-6.5"/></g>
<g transform="translate(1636.3,949.3)" stroke="#e00c0c" stroke-width="7.2" stroke-linecap="round"><path d="M0,-13.4 V13.4 M-11.6,-6.7 L11.6,6.7 M-11.6,6.7 L11.6,-6.7"/></g>
</svg>
<script>(function(){
var M=[3.2404542,-1.5371385,-0.4985314,-0.9692660,1.8760108,0.0415560,0.0556434,-0.2040259,1.0572252];
var MA=[2.0413690,-0.5649464,-0.3446944,-0.9692660,1.8760108,0.0415560,0.0134474,-0.1183897,1.0154096];
function rgbOf(x,y,out){if(y<1e-4)y=1e-4;var X=x/y,Z=(1-x-y)/y;
var r=M[0]*X+M[1]+M[2]*Z,g=M[3]*X+M[4]+M[5]*Z,b=M[6]*X+M[7]+M[8]*Z;
var ra=MA[0]*X+MA[1]+MA[2]*Z,ga=MA[3]*X+MA[4]+MA[5]*Z,ba=MA[6]*X+MA[7]+MA[8]*Z;
out[3]=(ra>=0&&ga>=0&&ba>=0)?1:0.6;if(r<0)r=0;if(g<0)g=0;if(b<0)b=0;var m=Math.max(r,g,b);if(m<=0)m=1;out[0]=r/m;out[1]=g/m;out[2]=b/m;}
var o=[0,0,0,1];
try{
var c=document.getElementById('cv1');var W=c.width,H=c.height,ctx=c.getContext('2d');
var off=document.createElement('canvas');off.width=W;off.height=H;var oc=off.getContext('2d');
var img=oc.createImageData(W,H),d=img.data;
var TR=[480.851,64.564,81.070,21.352,187.418,363.347],EA=[],EB=[],EC=[];var cxT=(TR[0]+TR[2]+TR[4])/3,cyT=(TR[1]+TR[3]+TR[5])/3;
for(var e=0;e<3;e++){var x1=TR[2*e],y1=TR[2*e+1],x2=TR[(2*e+2)%6],y2=TR[(2*e+3)%6];var a=y2-y1,b=x1-x2,l=Math.sqrt(a*a+b*b);a/=l;b/=l;var cc=-(a*x1+b*y1);if(a*cxT+b*cyT+cc<0){a=-a;b=-b;cc=-cc;}EA.push(a);EB.push(b);EC.push(cc);}
for(var j=0;j<H;j++){for(var i=0;i<W;i++){var px=1017+i+0.5,py=122+j+0.5;
var u=(px-1017.4)/1066.0,v=(614.6-py)/818.6;var dd=6*u-16*v+12;rgbOf(9*u/dd,4*v/dd,o);
var dm=1e9;for(var e=0;e<3;e++){var ds=(EA[e]*(i+0.5)+EB[e]*(j+0.5)+EC[e]);if(ds<dm)dm=ds;}
var t=dm+0.5;t=t<0?0:(t>1?1:t);var k=(0.6+0.4*t)*255;
var p=(j*W+i)*4;d[p]=o[0]*k;d[p+1]=o[1]*k;d[p+2]=o[2]*k;d[p+3]=255;}}
oc.putImageData(img,0,0);
var L=[274.2,479.0,274.1,479.1,274.0,479.1,273.9,479.2,273.7,479.3,273.6,479.4,273.4,479.4,273.2,479.5,273.0,479.6,272.7,479.6,272.5,479.6,272.1,479.6,271.7,479.6,271.2,479.4,270.6,479.3,269.9,479.1,269.3,478.8,268.6,478.4,267.9,478.0,267.3,477.5,266.5,476.9,265.7,476.3,264.8,475.7,263.8,474.9,262.8,474.1,261.6,473.1,260.3,472.1,258.9,470.9,257.4,469.7,255.8,468.4,254.2,467.0,252.4,465.5,250.6,463.9,248.6,462.3,246.6,460.6,244.4,458.8,242.0,456.8,239.4,454.7,236.7,452.5,233.8,450.1,230.7,447.6,227.6,445.0,224.3,442.3,220.8,439.4,217.2,436.3,213.3,432.9,209.2,429.4,205.0,425.5,200.5,421.3,195.9,416.9,191.1,412.2,186.1,407.0,180.5,401.0,174.5,394.1,168.0,386.4,161.1,378.1,154.0,369.0,146.6,359.2,138.8,348.6,130.8,337.3,122.7,325.3,114.3,312.6,105.8,299.0,97.1,285.1,88.7,270.9,80.2,256.5,71.8,241.6,63.6,226.7,56.0,212.1,48.9,197.6,42.2,183.1,36.1,169.0,30.4,155.6,25.3,142.8,20.7,130.5,16.6,118.8,13.1,108.0,10.1,98.0,7.6,88.9,5.7,80.4,4.1,72.6,3.0,65.5,2.2,59.1,1.9,53.3,1.9,48.0,2.3,43.0,3.0,38.6,4.0,34.7,5.3,31.0,7.0,27.8,8.9,25.0,11.1,22.5,13.5,20.3,16.1,18.5,18.9,17.0,21.9,15.8,25.0,14.8,28.3,14.0,31.7,13.5,35.2,13.1,38.8,12.8,42.4,12.5,46.2,12.4,50.0,12.3,53.8,12.3,57.5,12.3,61.3,12.3,65.1,12.4,69.0,12.5,72.9,12.6,76.8,12.8,80.8,13.0,84.9,13.2,89.0,13.5,93.2,13.8,97.5,14.1,102.0,14.4,106.5,14.8,111.0,15.2,115.7,15.7,120.5,16.1,125.5,16.6,130.5,17.1,135.7,17.6,141.0,18.2,146.4,18.7,152.0,19.3,157.7,20.0,163.6,20.6,169.6,21.3,175.8,22.0,182.1,22.7,188.6,23.4,195.3,24.1,202.2,24.9,209.2,25.7,216.4,26.5,223.7,27.4,231.3,28.2,239.0,29.1,246.8,30.0,254.9,30.9,263.1,31.9,271.5,32.8,280.1,33.8,288.8,34.8,297.7,35.8,306.7,36.9,315.9,37.9,325.2,39.0,334.7,40.1,344.2,41.2,353.8,42.3,363.5,43.4,373.3,44.5,383.1,45.7,392.8,46.8,402.3,47.9,411.8,49.0,421.2,50.0,430.5,51.1,439.8,52.2,449.2,53.2,458.3,54.3,467.2,55.3,475.9,56.3,484.3,57.3,492.6,58.2,500.5,59.1,508.3,60.0,515.8,60.9,523.0,61.7,530.0,62.5,536.6,63.3,543.0,64.0,549.1,64.7,555.0,65.4,560.6,66.0,565.9,66.6,571.0,67.2,576.0,67.8,580.7,68.3,585.1,68.8,589.5,69.3,593.6,69.8,597.7,70.3,601.6,70.7,605.3,71.2,609.0,71.6,612.2,71.9,615.2,72.3,618.3,72.7,621.9,73.1,626.3,73.6,631.3,74.1,636.3,74.7,640.5,75.2,643.9,75.6,646.6,75.9,649.1,76.2,651.6,76.4,654.2,76.8,656.9,77.1,659.3,77.3,661.2,77.6,662.6,77.7,663.7,77.8,664.4,77.9,664.9,78.0];
ctx.save();ctx.beginPath();ctx.moveTo(L[0],L[1]);for(var q=2;q<L.length;q+=2)ctx.lineTo(L[q],L[q+1]);ctx.closePath();ctx.clip();ctx.drawImage(off,0,0);ctx.restore();
}catch(e){}
try{
var c2=document.getElementById('cv2');var W2=c2.width,H2=c2.height,ctx2=c2.getContext('2d');
var img2=ctx2.createImageData(W2,H2),d2=img2.data;
for(var j=0;j<H2;j++){for(var i=0;i<W2;i++){var px=636+i+0.5,py=680+j+0.5;
var fx=(px-636.1)/(977.9-636.1),fy=(py-680.2)/(878.4-680.2);
rgbOf(0.28769999999999996+0.050000000000000044*fx,0.35500000000000004-0.052000000000000046*fy,o);
var p=(j*W2+i)*4;d2[p]=o[0]*255;d2[p+1]=o[1]*255;d2[p+2]=o[2]*255;d2[p+3]=(px>=636.1&&px<=977.9&&py>=680.2&&py<=878.4)?255:0;}}
ctx2.putImageData(img2,0,0);
}catch(e){}
})();</script>
</div></body></html>
